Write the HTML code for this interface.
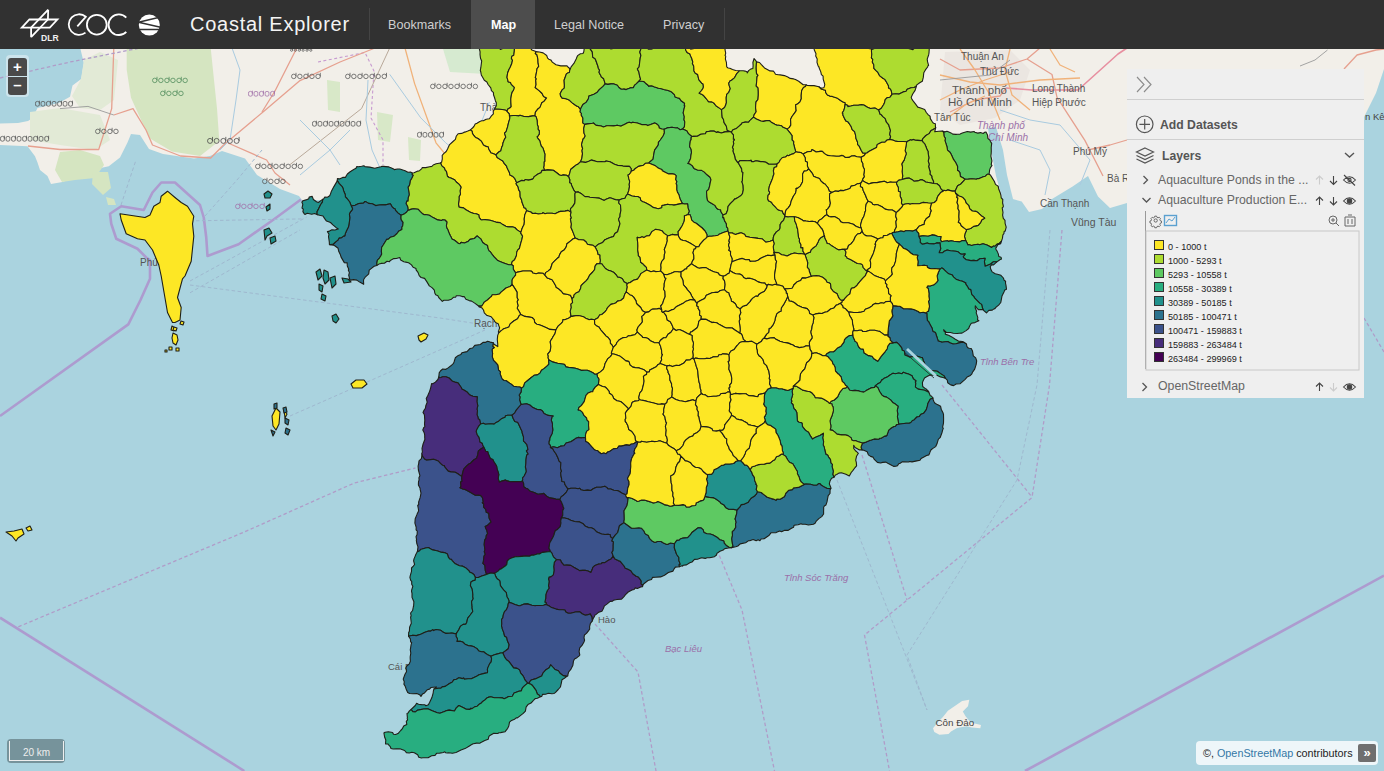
<!DOCTYPE html>
<html><head><meta charset="utf-8">
<style>
*{box-sizing:border-box}
html,body{margin:0;padding:0;width:1384px;height:771px;overflow:hidden;font-family:"Liberation Sans",sans-serif;background:#aad3df}
#hdr{position:absolute;left:0;top:0;width:1384px;height:48.6px;background:#313131;color:#fff}
.nav{position:absolute;top:0;height:48px;line-height:50px;font-size:12.6px;color:#cfcfcf;white-space:nowrap}
.sep{position:absolute;top:8px;width:1px;height:32px;background:#444}
#panel{position:absolute;left:1127px;top:69px;width:237px;height:329px;background:#efefef}
.pt{position:absolute;white-space:nowrap;color:#555}
.hl{position:absolute;left:0;width:237px;height:1px;background:#cfcfcf}
.sw{position:absolute;left:27px;width:10px;height:10px;border:1px solid #333}
.lt{position:absolute;left:41px;font-size:9.1px;color:#222;white-space:nowrap;line-height:10px}
</style></head><body>
<svg width="1384" height="771" viewBox="0 0 1384 771" style="position:absolute;left:0;top:0">
<rect width="1384" height="771" fill="#aad3df"/>
<path fill="#f2efe9" d="M80,47 83.8,63 81.2,79 72.5,85.5 70,96.8 58.8,103 37.5,108 32.5,118 28,121 18,123 0,123.4 0,145 27.5,146.2 35,156.2 37.5,162.5 40,170 47.5,176 51,184 62.5,182 75,177 90,177.5 91.2,170 108.8,166.2 120,157.5 127.5,142.5 131,134 140,135 149,149 163,154 194,158.4 210,156 222,151 245,158.4 257,175 280,189 299,196 302,200 420,200 600,200 900,200 1004,196.5 1021.7,201.6 1029,212 1042,209 1052,199 1072.6,186.4 1088,176 1098,196.5 1110,208 1127,203 1364,117 1376,93 1384,69 1384,47Z"/>
<path fill="#d5e5c1" d="M126.7,48 210.7,48 214,80 217,108.6 219.3,140.9 200,156 172,151.6 150.4,138.7 141.8,121.5 131,97.8 126.7,69.8Z"/><path fill="#d5e5c1" d="M60,152 80,150 100,156 104,165 95,178 75,180 62,182 55,170Z"/><path fill="#d5e5c1" d="M93,172 108,172 111,188 103,195 92,184Z"/><path fill="#d5e5c1" d="M106,197 114,199 116,205 108,205Z"/><path fill="#e2ead6" d="M84,60 100,52 118,60 114,100 100,110 80,108 72,96 81,79Z"/><path fill="#e2ead6" d="M30,112 60,108 100,115 110,140 95,150 60,145 30,140Z"/>
<path fill="#f2efe9" d="M969.3,699.7 968,706.2 962.8,711.4 965.4,716 970.6,722.4 981,725 980.3,728.2 971.9,727.6 966.7,726.3 957,728 951,731.5 948.5,734 939.4,734.7 934.3,732 933,728.2 938,722 942.7,717.2 947.9,710.7 956.3,704.9 962.1,701Z"/>
<path fill="#d8e8c8" d="M327,80 L340,82 L340,112 L328,110 Z M377,112 L393,115 L390,142 L378,140 Z M408,137 L421,140 L420,161 L409,160 Z"/>
<path fill="#d6ead0" d="M443,49 L489,49 L486,74 L450,72 Z"/>
<path d="M318,62 L365,52.5 L374,71 L371,118 L383,140 L383,165" fill="none" stroke="#c79ad0" stroke-width="1.1" stroke-dasharray="3,2.5"/>
<path fill="#ebe6e1" d="M945,52 L1010,50 L1030,70 L1020,100 L995,118 L960,125 L940,110 Z"/>
<path fill="#aad3df" d="M988,128 L996,127 L1003,150 L1007,175 L1013,199 L1003,201 L996,176 L991,150 Z"/>
<g fill="none" stroke="#e6a08f" stroke-width="1.3" stroke-linejoin="round">
<path d="M113.8,48 L111.7,108.6 L98.7,149.5 L60,149.5 L28,146"/>
<path d="M113.8,115 L133,108.6 L146,130 L152.5,145 L180.5,156 L210.7,158 L223.6,145 L264.5,110.7 L300,80.6 L340,62 L375,48"/>
<path d="M228,143 L266.6,160 L275,173 L290,185"/>
<path d="M296.8,48 L275,91 L262,112"/>
<path d="M1006,88 L1032,90 L1078,90 L1118,54 L1127,48" stroke="#e78fa0" stroke-width="1.6"/>
<path d="M1027,59 L1052,74.5 L1057,97.4 L1085,140.6 L1103,176"/>
<path d="M940,59 L960,70 L1000,68 L1027,59 L1040,48"/>
<path d="M950,112 L975,100 L1000,96 L1006,88"/>
<path d="M1088,150 L1110,145 L1127,140"/>
<path d="M405,48 L414.6,83.6 L436,142.8 L450,160" stroke="#f0b27a"/>
<path d="M290,164.6 L361.6,108.5 L389.7,48" stroke="#b9a99a" stroke-width="1"/>
<path d="M940,100 L960,90 L985,80 L1010,72" stroke="#f0b27a"/>
<path d="M960,49 L975,70 L990,95 L1000,120" stroke="#f0b27a"/>
<path d="M1010,49 L1005,70 L1012,95 L1030,110" stroke="#f0b27a"/>
<path d="M940,75 L970,82 L1000,85 L1040,80 L1080,78" stroke="#f0b27a"/>
<path d="M945,120 L965,105 L985,96" stroke="#f0b27a"/>
<path d="M1050,49 L1060,65 L1075,72" stroke="#f0b27a"/>
<path d="M1344,69 L1357,55 L1376,50 L1384,49"/>
</g>
<g fill="none" stroke="#9a9a9a" stroke-width="0.9">
<path d="M60,108.6 L88,106.4 L113.8,115"/>
<path d="M940,80 L990,75 L1010,60"/>
<path d="M1300,66 L1315,60 L1327.5,50"/>
</g>
<g fill="none" stroke="#a9cbe0" stroke-width="1">
<path d="M232,48 L240,70 L236,100 L230,140 L220,150"/>
<path d="M300,120 L330,150 L340,165"/>
<path d="M1000,110 L1030,120 L1060,125 L1090,160 L1080,185"/>
<path d="M1010,140 L1040,150 L1050,170 L1045,195"/>
<path d="M389.7,74.3 L420.8,117.9 L445.7,142.8 L464.4,158.3 L476.9,133.4 L489.3,102.3"/>
<path d="M368,80 L366,120 L372,150 L380,168"/>
<path d="M300,175 L330,150 L350,130"/>
</g>
<g fill="none" stroke="#ad9bcf" stroke-width="2.6" stroke-linejoin="round">
<path d="M0,416 L128.3,324.4 L140.5,300 L150,278.75 L150,260 L146.25,257.5 L137.5,248.75 L116.25,238.75 L111.25,223.75 L110,213.75 L121.25,206.25 L143.75,210 L152.5,192.5 L161.25,182.5 L175,182.5 L200,205 L203.75,217.5 L206.25,237.5 L207.5,256 L238.6,244.2 L273,220 L300.9,199.5"/>
<path d="M0,617.6 L244.3,771"/>
<path d="M1384,575.6 L1025,771"/>
</g>
<g fill="none" stroke="#b09cc8" stroke-width="1.3" stroke-dasharray="3.5,2.5">
<path d="M18.3,626.8 L244.3,532 L354.3,483 L415.4,468"/>
<path d="M942,385 L1032,497"/>
<path d="M1062,230 L1049.5,385 L1032,497.5 L864.5,635 L889.5,771"/>
<path d="M862,455 L907,600"/>
<path d="M1364,318 L1384,352"/>
<path d="M717,550 L742,610 L774.5,771"/>
<path d="M595,624 L638,672 L656,771"/>
<path d="M0,78 L70,62 L140,48"/>
</g>
<g fill="none" stroke="#9fb8cf" stroke-width="1" stroke-dasharray="3.5,2.5">
<path d="M190,281 L306.7,217"/>
<path d="M190,292.8 L300,230"/>
<path d="M190,285 L440,318 L485,325"/>
<path d="M290,416 L485,330"/>
<path d="M190,220.9 L302.8,218.9"/>
<path d="M205,216 L237,180 L262,150"/>
<path d="M121,205 L136,160"/>
<path d="M1050,230 L1037,385 L1017,480 L907,655 L927,710"/>
<path d="M837,480 L927,710"/>
</g>
<path d="M35.5,103.8 a2.0,2.0 0 1,0 3.9,0 a2.0,2.0 0 1,0 -3.9,0M39.4,103.8 v-3.1M41.0,103.8 a2.0,2.0 0 1,0 3.9,0 a2.0,2.0 0 1,0 -3.9,0M46.5,103.8 a2.0,2.0 0 1,0 3.9,0 a2.0,2.0 0 1,0 -3.9,0M50.5,103.8 v-3.1M52.1,103.8 a2.0,2.0 0 1,0 3.9,0 a2.0,2.0 0 1,0 -3.9,0M57.6,103.8 a2.0,2.0 0 1,0 3.9,0 a2.0,2.0 0 1,0 -3.9,0M61.5,103.8 v-3.1M63.1,103.8 a2.0,2.0 0 1,0 3.9,0 a2.0,2.0 0 1,0 -3.9,0M68.6,103.8 a2.0,2.0 0 1,0 3.9,0 a2.0,2.0 0 1,0 -3.9,0M72.5,103.8 v-3.1" fill="none" stroke="#555" stroke-width="0.9" opacity="0.85"/><path d="M0.5,138.8 a2.0,2.0 0 1,0 3.9,0 a2.0,2.0 0 1,0 -3.9,0M4.4,138.8 v-3.1M6.0,138.8 a2.0,2.0 0 1,0 3.9,0 a2.0,2.0 0 1,0 -3.9,0M11.5,138.8 a2.0,2.0 0 1,0 3.9,0 a2.0,2.0 0 1,0 -3.9,0M15.5,138.8 v-3.1M17.1,138.8 a2.0,2.0 0 1,0 3.9,0 a2.0,2.0 0 1,0 -3.9,0M22.6,138.8 a2.0,2.0 0 1,0 3.9,0 a2.0,2.0 0 1,0 -3.9,0M26.5,138.8 v-3.1M28.1,138.8 a2.0,2.0 0 1,0 3.9,0 a2.0,2.0 0 1,0 -3.9,0M33.6,138.8 a2.0,2.0 0 1,0 3.9,0 a2.0,2.0 0 1,0 -3.9,0M37.5,138.8 v-3.1M39.1,138.8 a2.0,2.0 0 1,0 3.9,0 a2.0,2.0 0 1,0 -3.9,0M44.7,138.8 a2.0,2.0 0 1,0 3.9,0 a2.0,2.0 0 1,0 -3.9,0M48.6,138.8 v-3.1" fill="none" stroke="#555" stroke-width="0.9" opacity="0.85"/><path d="M95.5,131.4 a2.2,2.2 0 1,0 4.5,0 a2.2,2.2 0 1,0 -4.5,0M100.0,131.4 v-3.6M101.6,131.4 a2.2,2.2 0 1,0 4.5,0 a2.2,2.2 0 1,0 -4.5,0M107.7,131.4 a2.2,2.2 0 1,0 4.5,0 a2.2,2.2 0 1,0 -4.5,0M112.1,131.4 v-3.6M113.7,131.4 a2.2,2.2 0 1,0 4.5,0 a2.2,2.2 0 1,0 -4.5,0" fill="none" stroke="#555" stroke-width="0.9" opacity="0.85"/><path d="M207.5,140.9 a2.5,2.5 0 1,0 5.0,0 a2.5,2.5 0 1,0 -5.0,0M212.5,140.9 v-4.0M214.1,140.9 a2.5,2.5 0 1,0 5.0,0 a2.5,2.5 0 1,0 -5.0,0M220.8,140.9 a2.5,2.5 0 1,0 5.0,0 a2.5,2.5 0 1,0 -5.0,0M225.8,140.9 v-4.0M227.4,140.9 a2.5,2.5 0 1,0 5.0,0 a2.5,2.5 0 1,0 -5.0,0M234.1,140.9 a2.5,2.5 0 1,0 5.0,0 a2.5,2.5 0 1,0 -5.0,0M239.1,140.9 v-4.0" fill="none" stroke="#444" stroke-width="0.9" opacity="0.85"/><path d="M248.5,93.8 a2.0,2.0 0 1,0 3.9,0 a2.0,2.0 0 1,0 -3.9,0M252.4,93.8 v-3.1M254.0,93.8 a2.0,2.0 0 1,0 3.9,0 a2.0,2.0 0 1,0 -3.9,0M259.5,93.8 a2.0,2.0 0 1,0 3.9,0 a2.0,2.0 0 1,0 -3.9,0M263.5,93.8 v-3.1M265.1,93.8 a2.0,2.0 0 1,0 3.9,0 a2.0,2.0 0 1,0 -3.9,0M270.6,93.8 a2.0,2.0 0 1,0 3.9,0 a2.0,2.0 0 1,0 -3.9,0M274.5,93.8 v-3.1" fill="none" stroke="#a070a8" stroke-width="0.9" opacity="0.85"/><path d="M291.5,76.4 a2.2,2.2 0 1,0 4.5,0 a2.2,2.2 0 1,0 -4.5,0M296.0,76.4 v-3.6M297.6,76.4 a2.2,2.2 0 1,0 4.5,0 a2.2,2.2 0 1,0 -4.5,0M303.7,76.4 a2.2,2.2 0 1,0 4.5,0 a2.2,2.2 0 1,0 -4.5,0M308.1,76.4 v-3.6M309.7,76.4 a2.2,2.2 0 1,0 4.5,0 a2.2,2.2 0 1,0 -4.5,0M315.8,76.4 a2.2,2.2 0 1,0 4.5,0 a2.2,2.2 0 1,0 -4.5,0M320.3,76.4 v-3.6" fill="none" stroke="#555" stroke-width="0.9" opacity="0.85"/><path d="M345.5,76.4 a2.2,2.2 0 1,0 4.5,0 a2.2,2.2 0 1,0 -4.5,0M350.0,76.4 v-3.6M351.6,76.4 a2.2,2.2 0 1,0 4.5,0 a2.2,2.2 0 1,0 -4.5,0M357.7,76.4 a2.2,2.2 0 1,0 4.5,0 a2.2,2.2 0 1,0 -4.5,0M362.1,76.4 v-3.6M363.7,76.4 a2.2,2.2 0 1,0 4.5,0 a2.2,2.2 0 1,0 -4.5,0M369.8,76.4 a2.2,2.2 0 1,0 4.5,0 a2.2,2.2 0 1,0 -4.5,0M374.3,76.4 v-3.6M375.9,76.4 a2.2,2.2 0 1,0 4.5,0 a2.2,2.2 0 1,0 -4.5,0M382.0,76.4 a2.2,2.2 0 1,0 4.5,0 a2.2,2.2 0 1,0 -4.5,0M386.5,76.4 v-3.6" fill="none" stroke="#555" stroke-width="0.9" opacity="0.85"/><path d="M430.5,86.4 a2.2,2.2 0 1,0 4.5,0 a2.2,2.2 0 1,0 -4.5,0M435.0,86.4 v-3.6M436.6,86.4 a2.2,2.2 0 1,0 4.5,0 a2.2,2.2 0 1,0 -4.5,0M442.7,86.4 a2.2,2.2 0 1,0 4.5,0 a2.2,2.2 0 1,0 -4.5,0M447.1,86.4 v-3.6M448.7,86.4 a2.2,2.2 0 1,0 4.5,0 a2.2,2.2 0 1,0 -4.5,0M454.8,86.4 a2.2,2.2 0 1,0 4.5,0 a2.2,2.2 0 1,0 -4.5,0M459.3,86.4 v-3.6M460.9,86.4 a2.2,2.2 0 1,0 4.5,0 a2.2,2.2 0 1,0 -4.5,0M467.0,86.4 a2.2,2.2 0 1,0 4.5,0 a2.2,2.2 0 1,0 -4.5,0M471.5,86.4 v-3.6M473.1,86.4 a2.2,2.2 0 1,0 4.5,0 a2.2,2.2 0 1,0 -4.5,0" fill="none" stroke="#555" stroke-width="0.9" opacity="0.85"/><path d="M312.5,123.8 a2.0,2.0 0 1,0 3.9,0 a2.0,2.0 0 1,0 -3.9,0M316.4,123.8 v-3.1M318.0,123.8 a2.0,2.0 0 1,0 3.9,0 a2.0,2.0 0 1,0 -3.9,0M323.5,123.8 a2.0,2.0 0 1,0 3.9,0 a2.0,2.0 0 1,0 -3.9,0M327.5,123.8 v-3.1M329.1,123.8 a2.0,2.0 0 1,0 3.9,0 a2.0,2.0 0 1,0 -3.9,0M334.6,123.8 a2.0,2.0 0 1,0 3.9,0 a2.0,2.0 0 1,0 -3.9,0M338.5,123.8 v-3.1M340.1,123.8 a2.0,2.0 0 1,0 3.9,0 a2.0,2.0 0 1,0 -3.9,0M345.6,123.8 a2.0,2.0 0 1,0 3.9,0 a2.0,2.0 0 1,0 -3.9,0M349.5,123.8 v-3.1M351.1,123.8 a2.0,2.0 0 1,0 3.9,0 a2.0,2.0 0 1,0 -3.9,0M356.7,123.8 a2.0,2.0 0 1,0 3.9,0 a2.0,2.0 0 1,0 -3.9,0M360.6,123.8 v-3.1" fill="none" stroke="#555" stroke-width="0.9" opacity="0.85"/><path d="M417.5,134.8 a2.0,2.0 0 1,0 3.9,0 a2.0,2.0 0 1,0 -3.9,0M421.4,134.8 v-3.1M423.0,134.8 a2.0,2.0 0 1,0 3.9,0 a2.0,2.0 0 1,0 -3.9,0M428.5,134.8 a2.0,2.0 0 1,0 3.9,0 a2.0,2.0 0 1,0 -3.9,0M432.5,134.8 v-3.1M434.1,134.8 a2.0,2.0 0 1,0 3.9,0 a2.0,2.0 0 1,0 -3.9,0M439.6,134.8 a2.0,2.0 0 1,0 3.9,0 a2.0,2.0 0 1,0 -3.9,0M443.5,134.8 v-3.1" fill="none" stroke="#555" stroke-width="0.9" opacity="0.85"/><path d="M255.5,166.4 a2.2,2.2 0 1,0 4.5,0 a2.2,2.2 0 1,0 -4.5,0M260.0,166.4 v-3.6M261.6,166.4 a2.2,2.2 0 1,0 4.5,0 a2.2,2.2 0 1,0 -4.5,0M267.7,166.4 a2.2,2.2 0 1,0 4.5,0 a2.2,2.2 0 1,0 -4.5,0M272.1,166.4 v-3.6M273.7,166.4 a2.2,2.2 0 1,0 4.5,0 a2.2,2.2 0 1,0 -4.5,0M279.8,166.4 a2.2,2.2 0 1,0 4.5,0 a2.2,2.2 0 1,0 -4.5,0M284.3,166.4 v-3.6M285.9,166.4 a2.2,2.2 0 1,0 4.5,0 a2.2,2.2 0 1,0 -4.5,0M292.0,166.4 a2.2,2.2 0 1,0 4.5,0 a2.2,2.2 0 1,0 -4.5,0M296.5,166.4 v-3.6M298.1,166.4 a2.2,2.2 0 1,0 4.5,0 a2.2,2.2 0 1,0 -4.5,0" fill="none" stroke="#555" stroke-width="0.9" opacity="0.85"/><path d="M262.5,181.4 a2.2,2.2 0 1,0 4.5,0 a2.2,2.2 0 1,0 -4.5,0M267.0,181.4 v-3.6M268.6,181.4 a2.2,2.2 0 1,0 4.5,0 a2.2,2.2 0 1,0 -4.5,0M274.7,181.4 a2.2,2.2 0 1,0 4.5,0 a2.2,2.2 0 1,0 -4.5,0M279.1,181.4 v-3.6M280.7,181.4 a2.2,2.2 0 1,0 4.5,0 a2.2,2.2 0 1,0 -4.5,0" fill="none" stroke="#555" stroke-width="0.9" opacity="0.85"/><path d="M235.5,206.4 a2.2,2.2 0 1,0 4.5,0 a2.2,2.2 0 1,0 -4.5,0M240.0,206.4 v-3.6M241.6,206.4 a2.2,2.2 0 1,0 4.5,0 a2.2,2.2 0 1,0 -4.5,0M247.7,206.4 a2.2,2.2 0 1,0 4.5,0 a2.2,2.2 0 1,0 -4.5,0M252.1,206.4 v-3.6M253.7,206.4 a2.2,2.2 0 1,0 4.5,0 a2.2,2.2 0 1,0 -4.5,0M259.8,206.4 a2.2,2.2 0 1,0 4.5,0 a2.2,2.2 0 1,0 -4.5,0M264.3,206.4 v-3.6" fill="none" stroke="#a070a8" stroke-width="0.9" opacity="0.85"/><path d="M152.5,80.4 a2.2,2.2 0 1,0 4.5,0 a2.2,2.2 0 1,0 -4.5,0M157.0,80.4 v-3.6M158.6,80.4 a2.2,2.2 0 1,0 4.5,0 a2.2,2.2 0 1,0 -4.5,0M164.7,80.4 a2.2,2.2 0 1,0 4.5,0 a2.2,2.2 0 1,0 -4.5,0M169.1,80.4 v-3.6M170.7,80.4 a2.2,2.2 0 1,0 4.5,0 a2.2,2.2 0 1,0 -4.5,0M176.8,80.4 a2.2,2.2 0 1,0 4.5,0 a2.2,2.2 0 1,0 -4.5,0M181.3,80.4 v-3.6M182.9,80.4 a2.2,2.2 0 1,0 4.5,0 a2.2,2.2 0 1,0 -4.5,0" fill="none" stroke="#4e8a5a" stroke-width="0.9" opacity="0.85"/><path d="M160.5,93.4 a2.2,2.2 0 1,0 4.5,0 a2.2,2.2 0 1,0 -4.5,0M165.0,93.4 v-3.6M166.6,93.4 a2.2,2.2 0 1,0 4.5,0 a2.2,2.2 0 1,0 -4.5,0M172.7,93.4 a2.2,2.2 0 1,0 4.5,0 a2.2,2.2 0 1,0 -4.5,0M177.1,93.4 v-3.6M178.7,93.4 a2.2,2.2 0 1,0 4.5,0 a2.2,2.2 0 1,0 -4.5,0" fill="none" stroke="#4e8a5a" stroke-width="0.9" opacity="0.85"/><path d="M290.5,50.2 a1.1,1.1 0 1,0 2.2,0 a1.1,1.1 0 1,0 -2.2,0M292.7,50.2 v-1.8M294.3,50.2 a1.1,1.1 0 1,0 2.2,0 a1.1,1.1 0 1,0 -2.2,0M298.2,50.2 a1.1,1.1 0 1,0 2.2,0 a1.1,1.1 0 1,0 -2.2,0M300.4,50.2 v-1.8M302.0,50.2 a1.1,1.1 0 1,0 2.2,0 a1.1,1.1 0 1,0 -2.2,0M305.9,50.2 a1.1,1.1 0 1,0 2.2,0 a1.1,1.1 0 1,0 -2.2,0M308.1,50.2 v-1.8M309.7,50.2 a1.1,1.1 0 1,0 2.2,0 a1.1,1.1 0 1,0 -2.2,0" fill="none" stroke="#555" stroke-width="0.9" opacity="0.85"/>
<g font-family="Liberation Sans" fill="#555" font-size="11">
<text x="952" y="93.5" font-size="11.5">Thành phố</text>
<text x="948" y="106" font-size="11.5">Hồ Chí Minh</text>
<text x="934" y="121" font-size="10">Tân Túc</text>
<text x="961" y="60" font-size="10">Thuận An</text>
<text x="980" y="75" font-size="10">Thủ Đức</text>
<text x="1032" y="92" font-size="10">Long Thành</text>
<text x="1032" y="106" font-size="10">Hiệp Phước</text>
<text x="1073" y="155" font-size="10">Phú Mỹ</text>
<text x="1107" y="182" font-size="10">Bà R</text>
<text x="1040" y="207" font-size="10">Cần Thạnh</text>
<text x="1071" y="226" font-size="10.5">Vũng Tàu</text>
<text x="935.5" y="725.5" font-size="9.8" fill="#444">Côn Đảo</text>
<text x="140" y="266" font-size="10">Phú</text>
<text x="474" y="327" font-size="10">Rạch</text>
<text x="480" y="111" font-size="10">Thà</text>
<text x="1365" y="119.5" font-size="9.5" fill="#444">n Kê</text>
<text x="388" y="670" font-size="9.5">Cái B</text>
<text x="598" y="623" font-size="9.5">Hào</text>
</g>
<g font-family="Liberation Sans" font-style="italic" fill="#9b6fa8" font-size="9.5">
<text x="784" y="581">Tỉnh Sóc Trăng</text>
<text x="665" y="652">Bạc Liêu</text>
<text x="980" y="365">Tỉnh Bến Tre</text>
<text x="977" y="129" font-size="10">Thành phố</text>
<text x="988" y="141" font-size="10">Chí Minh</text>
</g>
<g stroke="#1f1f18" stroke-width="1.1" stroke-linejoin="round">
<path fill="#addc30" d="M514.6,46 511.7,47.2 506.5,47.2 503.3,48.2 500.4,49.4 499.5,48.4 496.1,47.9 493.9,47 490.6,45 490.2,45.1 487.2,45.5 484.4,45.6 478.9,47.4 479.4,49 480.1,51.9 480,54.4 480.5,58.3 481.7,61 481.5,62.3 481.3,64 480.8,67.7 480.3,70.5 480.8,72 481.3,75 483.2,78.2 484.3,80.3 486.9,82 488.1,84.5 490.8,87.9 491.4,90.6 493.5,92.6 493.5,94.8 494.5,97.5 495.4,100.7 496,102.2 496.3,102.6 496.3,105.7 494.5,109.1 499.1,109.3 502.2,109.5 505.8,110.2 506.9,111.3 507.9,109 510.1,107.8 511.2,106.7 510.9,102.5 510.8,99 511.5,94.3 512.4,91.7 513.2,90.9 514.1,88.7 514.4,87.4 511.3,84.4 510.5,82.5 508.1,81.7 507.9,80.4 507,77.4 507.6,73 509.1,69.2 510.1,67.5 511.8,63.5 512.5,60.2 511.4,58.2 511.9,56.2 513.8,55.3 514.3,51.2Z"/><path fill="#fde725" d="M535.9,51.6 531.9,50.1 530.4,48 528,46.5 527.4,46.2 525.2,46.5 522.6,46.1 519,47 517.3,46.4 514.6,46 514.3,51.2 513.8,55.3 511.9,56.2 511.4,58.2 512.5,60.2 511.8,63.5 510.1,67.5 509.1,69.2 507.6,73 507,77.4 507.9,80.4 508.1,81.7 510.5,82.5 511.3,84.4 514.4,87.4 514.1,88.7 513.2,90.9 512.4,91.7 511.5,94.3 510.8,99 510.9,102.5 511.2,106.7 510.1,107.8 507.9,109 506.9,111.3 509.2,113.9 509.4,116 513.2,115.5 515.7,115.5 518.6,115.9 520,115.2 524,116.5 528.5,116.6 532.9,115.9 535,116 535.4,112.1 537.6,109.3 540,107.4 541.1,104.6 541.8,102.8 544,101.4 546.6,97.9 543.6,96.5 542.1,93.5 539.1,90.7 537.2,89.1 535.2,87.5 536.1,84.6 535.7,79.9 536.4,79 535.3,77.4 535.8,75.9 536.6,71.7 537,68.8 538.7,66.4 538.1,63.2 537.9,59.1 536.9,54.7 535.3,53.5Z"/><path fill="#fde725" d="M546.6,97.9 544,101.4 541.8,102.8 541.1,104.6 540,107.4 537.6,109.3 535.4,112.1 535,116 536.2,116.9 537.1,120.4 537.4,124.8 538.2,126.9 538,129.1 539.3,130.9 539.3,133.9 537.8,136.3 537,136.8 538,138.7 539.7,140.6 541.1,145.9 543,148.1 543.9,151 544.9,154.2 544.7,158.7 544.8,161.3 544,162 544,165.3 543.6,167.6 544.6,170.4 547.7,169.9 553.3,170.2 556.4,172.5 559.5,175 561.3,175.5 562.9,174.9 566.6,175.2 568.6,176.7 569.9,172.6 570.6,169.5 573,167.5 576,165.1 577.3,164.4 578,164.2 580.6,161.7 581.9,158.1 582.5,153.6 582,150.7 582.6,148.5 581.5,144.6 582.4,141.5 583.2,138.7 583.7,138.8 585.2,135.9 584,133.1 583.7,128.5 584,127.3 584.7,124.4 582.8,122.8 582.9,118.1 581.2,115 581.5,113.5 580.1,111.9 580.5,109.3 578.5,106.8 576.7,106 575.5,105.2 571.9,102.6 569,99.9 566.1,98.8 562.2,98.1 560.5,95.8 560.2,93.6 562.1,89.9 564.3,88.1 564.4,85.1 564.1,80.3 565.2,77.2 566.4,73.9 567.6,73.1 569.4,72.5 570,68.7 567.9,67 567,65.9 563.2,65.8 560.8,65.9 556,64.8 552.3,62.1 550.8,59.9 548.7,59.2 547.6,58.2 546.7,55.5 543.1,52.9 539.3,52 535.9,51.6 535.3,53.5 536.9,54.7 537.9,59.1 538.1,63.2 538.7,66.4 537,68.8 536.6,71.7 535.8,75.9 535.3,77.4 536.4,79 535.7,79.9 536.1,84.6 535.2,87.5 537.2,89.1 539.1,90.7 542.1,93.5 543.6,96.5Z"/><path fill="#addc30" d="M590.1,46.9 586,48.1 584.3,47.8 583.8,51.7 583,53.5 580.4,53.8 577.9,55.4 577.1,56.6 576.3,58.8 573.9,63.4 571.1,66.9 570,69.7 570,68.7 569.4,72.5 567.6,73.1 566.4,73.9 565.2,77.2 564.1,80.3 564.4,85.1 564.3,88.1 562.1,89.9 560.2,93.6 560.5,95.8 562.2,98.1 566.1,98.8 569,99.9 571.9,102.6 575.5,105.2 576.7,106 578.5,106.8 580.5,109.3 581.3,107.4 582.9,104.5 586.1,102.4 588.3,99 588.9,96.1 590.6,95.4 593.9,94.2 596,93.1 596.9,92.6 599.3,89.7 603,86.3 605.2,83.9 603.7,78.8 601.3,76.9 601,75.9 599.1,72.4 599.5,70 598.3,68.2 598.1,66.8 597.3,64.5 595.8,60.2 595.1,58.8 592.7,57.1 592.3,51.9 590.2,48.9Z"/><path fill="#addc30" d="M641.6,45.6 638.7,45.3 636.6,46.2 634.2,45.9 629.3,47.2 625.1,47.1 621.3,46.5 620.2,47.5 616.8,47.1 614.3,48.1 610.8,48.9 610.3,48 607.1,47.9 603.8,46.1 598.2,44.8 595.8,45.3 592.6,45.1 590.1,46.9 590.2,48.9 592.3,51.9 592.7,57.1 595.1,58.8 595.8,60.2 597.3,64.5 598.1,66.8 598.3,68.2 599.5,70 599.1,72.4 601,75.9 601.3,76.9 603.7,78.8 605.2,83.9 607.9,84.4 611,83.9 613.3,83.8 617.3,85.2 618.9,87.5 621.2,89.2 622.4,89.3 624,89.1 626.2,89.6 630.1,87.9 633.3,87.7 634.7,85.1 636.2,83.8 639.2,81 640.6,79.1 639.6,76 638.9,72 638.4,70.9 637.4,68.9 639.1,67 639.7,62.2 640.3,57.6 640.9,55.5 639.8,52 640.8,49.4Z"/><path fill="#5ec962" d="M624,89.1 622.4,89.3 621.2,89.2 618.9,87.5 617.3,85.2 613.3,83.8 611,83.9 607.9,84.4 605.2,83.9 603,86.3 599.3,89.7 596.9,92.6 596,93.1 593.9,94.2 590.6,95.4 588.9,96.1 588.3,99 586.1,102.4 582.9,104.5 581.3,107.4 580.5,109.3 580.1,111.9 581.5,113.5 581.2,115 582.9,118.1 582.8,122.8 584.7,124.4 587.9,123.9 592.6,123.3 593.4,123 595.5,124.9 596.7,125.4 601.2,126 603.4,126.9 606.8,125.7 608.6,125.7 613.8,125.9 617.3,125.2 621.1,126.2 621.6,125.7 624.4,124.5 627.1,123 629.1,122.2 631.6,122.9 632.7,122.2 637.3,123 641.6,124.6 645.7,124.6 647.8,125.6 650.7,124.5 654.5,122.9 656.1,123.5 658.6,125.6 659.3,128 661.7,129 664.2,129.3 667.1,127.9 672,127.2 676,128 677.5,127.9 680.1,129.7 682.5,129.1 684.4,126.9 684.8,122 684,119.6 684.3,116.7 683.2,112.9 684,109.2 684.9,105.7 684.3,105.7 684.6,103.3 681.1,100.7 679.5,98.4 677.3,97.8 675.2,97.1 674.4,94.7 671.7,92.1 669.6,91.1 667.3,90.3 663.6,89.5 661.6,88.7 658.5,88.3 654,86.8 651.7,85.7 649.9,85.9 648.5,86.1 648.1,85.2 645.6,83.2 643.8,81.5 639.2,81 636.2,83.8 634.7,85.1 633.3,87.7 630.1,87.9 626.2,89.6Z"/><path fill="#addc30" d="M641.6,45.6 640.8,49.4 639.8,52 640.9,55.5 640.3,57.6 639.7,62.2 639.1,67 637.4,68.9 638.4,70.9 638.9,72 639.6,76 640.6,79.1 639.2,81 643.8,81.5 645.6,83.2 648.1,85.2 648.5,86.1 649.9,85.9 651.7,85.7 654,86.8 658.5,88.3 661.6,88.7 663.6,89.5 667.3,90.3 669.6,91.1 671.7,92.1 674.4,94.7 675.2,97.1 677.3,97.8 679.5,98.4 681.1,100.7 684.6,103.3 684.3,105.7 684.9,105.7 684,109.2 683.2,112.9 684.3,116.7 684,119.6 684.8,122 684.4,126.9 682.5,129.1 684.9,130.1 686.9,131 688.4,133.7 691.8,136.5 693.5,136.4 697.4,136.2 700.7,134.2 705.4,133.7 706.5,131.6 708.4,131.5 710.7,131.1 713.9,131.1 716.6,132.4 717.5,131.9 721.3,133 724.9,131.9 729.8,131.6 727.2,130.2 726.3,126 724.1,122.6 723.4,119.2 722.2,117.4 721.9,114.3 721.6,109.6 719.8,108.4 719.1,107.9 716.2,106 714.1,103.3 711.8,101.9 708.5,101.6 707.3,100 704.9,97.1 703.2,95.2 702.2,94.6 699.2,93.2 701.6,90.5 703.2,88 703.4,86.7 703.1,84 701.7,83.2 698.8,79.6 697.7,74.6 695.3,73.2 694,70.9 693.7,65.9 692.4,63.4 692.8,62 691.9,58.8 690.6,55.9 689.9,54 687.1,52.4 685.8,50.2 685,47.1 681.8,47.2 677,46.2 676.1,47 674.1,46.9 672.7,45.9 668.2,46.3 665.6,45.4 662.5,45.8 660.1,47.4 655.1,47.8 651.2,49.3 648.3,49.2 647.2,47.7 644.8,47.3Z"/><path fill="#fde725" d="M491,153 492.2,153.2 495.9,154.8 498.8,152 500.9,150.7 501.6,147.5 502.7,145.2 502.9,143.3 504.4,139.4 505.8,137.3 505,134.6 504.5,133.2 506.1,131.7 507.6,126.8 508.5,122.9 509.7,118.9 509.9,116.7 509.4,116 509.2,113.9 506.9,111.3 505.8,110.2 502.2,109.5 499.1,109.3 494.5,109.1 493.2,111.6 493.4,113.8 491.4,115.9 489.4,118.7 486.2,119.2 483.3,120.8 481.7,120.8 479.8,121.5 477,123.3 475.2,124.1 473.9,126.5 472.5,128 470.4,129.9 472.1,131.2 472.5,133.7 474.7,136.6 476.1,137.7 478,138.5 481.5,141.4 483.4,145 486.1,146.4 488.3,147 488.7,149.2 490.4,151.9Z"/><path fill="#fde725" d="M458.9,184.2 459.5,184.8 461,187.1 460,191 460.5,194 459,196.7 459.1,199 458.5,204.1 458.9,206.9 460.3,207.4 463.5,207.9 465.9,209.7 470.4,212.2 473.7,213.5 476.1,213.8 478.8,214.8 479.1,217.3 480.6,219.4 481.9,220 482.8,219.8 485.1,219.6 490.1,220.2 494.2,221.5 497,222.4 500,222.6 500.7,223.1 502.8,224.6 505.8,226.3 508.1,226.9 512.1,226.7 514.7,227.5 517.1,229.9 520.9,232.4 521.9,229 523,226.6 524.1,224.5 524.4,221.3 524.2,219.1 524.8,214.9 526.6,210.7 525.8,208.3 524.1,207.7 523.2,205.2 522.2,202.8 521.5,199.7 521.1,198.7 520.2,196.9 520,191.9 518.5,189.4 518.2,187.1 516,183.8 516.7,182.7 514.9,178.7 512.5,176.2 509.9,175 509.4,172.4 507.8,169.2 507,167.5 506.6,166.1 504.2,163.4 502.8,161 500.5,159.6 497.2,157.5 495.9,154.8 492.2,153.2 491,153 490.4,151.9 488.7,149.2 488.3,147 486.1,146.4 483.4,145 481.5,141.4 478,138.5 476.1,137.7 474.7,136.6 472.5,133.7 472.1,131.2 470.4,129.9 467.8,131.1 465.5,131.9 463.8,132.4 461.6,133.4 458.1,133.7 456.2,136.3 455.4,139.4 453,141.5 449.6,144.6 448.2,147.4 447.7,148.8 446.2,151.5 443.7,153.7 442.2,155.3 442.3,158.9 441.7,162 440.5,163 441.8,165.8 444.5,168.2 444.9,169.8 446.5,171.6 446.9,174.1 447.4,176.2 449,177.5 450.8,178 454.5,179.7 456.3,182Z"/><path fill="#addc30" d="M539.3,133.9 539.3,130.9 538,129.1 538.2,126.9 537.4,124.8 537.1,120.4 536.2,116.9 535,116 532.9,115.9 528.5,116.6 524,116.5 520,115.2 518.6,115.9 515.7,115.5 513.2,115.5 509.4,116 509.9,116.7 509.7,118.9 508.5,122.9 507.6,126.8 506.1,131.7 504.5,133.2 505,134.6 505.8,137.3 504.4,139.4 502.9,143.3 502.7,145.2 501.6,147.5 500.9,150.7 498.8,152 495.9,154.8 497.2,157.5 500.5,159.6 502.8,161 504.2,163.4 506.6,166.1 507,167.5 507.8,169.2 509.4,172.4 509.9,175 512.5,176.2 514.9,178.7 516.7,182.7 521.6,180.4 524.4,180.7 525.2,179.5 528.4,180.1 532.6,179.1 533.5,178.1 534.3,176.6 538,174 541,172.8 542.1,170.3 544.6,170.4 543.6,167.6 544,165.3 544,162 544.8,161.3 544.7,158.7 544.9,154.2 543.9,151 543,148.1 541.1,145.9 539.7,140.6 538,138.7 537,136.8 537.8,136.3Z"/><path fill="#addc30" d="M584.7,124.4 584,127.3 583.7,128.5 584,133.1 585.2,135.9 583.7,138.8 583.2,138.7 582.4,141.5 581.5,144.6 582.6,148.5 582,150.7 582.5,153.6 581.9,158.1 580.6,161.7 585.5,162.4 588.8,161.2 591.4,160.1 594.7,160.9 597.5,161.8 601.8,161.6 603,161.8 605,161.8 606.1,161 610,161.7 614.5,164.2 618,165.5 621.4,165.6 622.9,166.1 627.1,166.4 629.4,166.2 631.2,168.8 631.2,171.2 634.1,169.9 635,168.8 638.5,166.4 643.5,165.2 645.7,163.2 648.8,163.1 649.7,162 651.7,160.4 653.1,159.1 653.6,155.3 654.6,150.2 656.8,147.2 658.4,144.6 658.4,142.7 658.4,142.3 660.3,140 663.1,136 664.4,133 664.2,129.3 661.7,129 659.3,128 658.6,125.6 656.1,123.5 654.5,122.9 650.7,124.5 647.8,125.6 645.7,124.6 641.6,124.6 637.3,123 632.7,122.2 631.6,122.9 629.1,122.2 627.1,123 624.4,124.5 621.6,125.7 621.1,126.2 617.3,125.2 613.8,125.9 608.6,125.7 606.8,125.7 603.4,126.9 601.2,126 596.7,125.4 595.5,124.9 593.4,123 592.6,123.3 587.9,123.9Z"/><path fill="#5ec962" d="M668.7,173.9 672.3,173.9 674.4,174.2 676.1,175.6 675.6,179.4 676.8,181.7 676,183.6 676.7,184.7 676.7,189.8 677.5,192.3 679,195.1 679.9,198.4 682.3,203.4 684.5,204 687.6,203.8 688,207.9 689.2,211.3 687.9,214.5 690.1,214.8 690.7,216.4 691.7,220.2 694.4,222.6 696.2,223.2 698.7,225.2 702.2,228 703.6,229.5 705.1,231.1 706.9,234.5 707,237.1 709.1,236.3 711.5,236.2 715.2,235.8 718.1,235.2 719.2,234.2 723.3,232.6 728,231.1 727.8,228.4 726.5,226.6 726.4,223.7 724.5,220.6 723.7,217.5 722.8,217.7 723,215 721,211.8 720.6,209.8 718.4,209.5 716.6,208.3 714.9,205.4 711.4,203.2 709.6,202.3 707.5,200.4 706.9,196.6 706.5,191.4 708.7,189.4 709.6,186.1 710.3,182.4 711,179.7 710,177.1 709.5,176.7 707.1,174.8 704.1,171.9 701.6,170.4 697.5,170 694,168.4 692.2,165.6 689.6,163.8 687.9,163.4 688.7,162.6 690.6,158.4 690.9,155.6 691.5,152.5 691.2,149.6 689.6,146.4 690.3,141.1 691.2,139.4 691.1,137.8 691.8,136.5 688.4,133.7 686.9,131 684.9,130.1 682.5,129.1 680.1,129.7 677.5,127.9 676,128 672,127.2 667.1,127.9 664.2,129.3 664.4,133 663.1,136 660.3,140 658.4,142.3 658.4,142.7 658.4,144.6 656.8,147.2 654.6,150.2 653.6,155.3 653.1,159.1 651.7,160.4 649.7,162 648.8,163.1 651.1,163.9 655.4,165.8 657.7,167.7 659.8,168.7 661.8,169.4 662.3,170.7 665.6,172.6Z"/><path fill="#addc30" d="M631.2,171.2 631.2,168.8 629.4,166.2 627.1,166.4 622.9,166.1 621.4,165.6 618,165.5 614.5,164.2 610,161.7 606.1,161 605,161.8 603,161.8 601.8,161.6 597.5,161.8 594.7,160.9 591.4,160.1 588.8,161.2 585.5,162.4 580.6,161.7 578,164.2 577.3,164.4 576,165.1 573,167.5 570.6,169.5 569.9,172.6 568.6,176.7 569.8,179.7 569.6,182.8 571.2,183.4 571.5,185.2 573.4,189.3 573.9,190.4 575.5,192.2 578.2,191.9 581.5,193.8 584.3,196.1 585,196.6 587.6,196.5 589.8,197.2 595.2,197.7 598.9,198.1 602.1,199.5 604.2,200.4 606.1,199.2 609.8,197.8 611.7,198.3 614.7,199.4 615.6,199.6 619.2,200.1 622.3,198.8 625,198.3 626,196 627.5,194.1 628.9,190.2 629.5,186.4 629.2,184.7 629.7,181.3 628.9,178.9 628,174.9 629.4,174.2 630.8,172.5Z"/><path fill="#fde725" d="M648.8,163.1 645.7,163.2 643.5,165.2 638.5,166.4 635,168.8 634.1,169.9 631.2,171.2 630.8,172.5 629.4,174.2 628,174.9 628.9,178.9 629.7,181.3 629.2,184.7 629.5,186.4 628.9,190.2 627.5,194.1 632.1,196 634.8,196.4 637.8,196.5 640.3,198 640.7,200.4 642.7,201.8 643.8,202 646,202.9 650.1,205.2 653,207.4 656.4,208.3 658.3,208.8 661.8,207.7 662,205.5 664.2,205.1 667.7,204.2 669.7,204.8 672,204.7 673.9,205.1 677.5,204.4 682.3,203.4 679.9,198.4 679,195.1 677.5,192.3 676.7,189.8 676.7,184.7 676,183.6 676.8,181.7 675.6,179.4 676.1,175.6 674.4,174.2 672.3,173.9 668.7,173.9 665.6,172.6 662.3,170.7 661.8,169.4 659.8,168.7 657.7,167.7 655.4,165.8 651.1,163.9Z"/><path fill="#addc30" d="M568.6,176.7 566.6,175.2 562.9,174.9 561.3,175.5 559.5,175 556.4,172.5 553.3,170.2 547.7,169.9 544.6,170.4 542.1,170.3 541,172.8 538,174 534.3,176.6 533.5,178.1 532.6,179.1 528.4,180.1 525.2,179.5 524.4,180.7 521.6,180.4 516.7,182.7 516,183.8 518.2,187.1 518.5,189.4 520,191.9 520.2,196.9 521.1,198.7 521.5,199.7 522.2,202.8 523.2,205.2 524.1,207.7 525.8,208.3 526.6,210.7 530.8,212 532.5,213.5 535.6,213.2 538.3,214 542.1,213.5 543,212.7 545,213.7 546.9,213.2 552,213.3 555.1,213.7 558.7,211.9 560.5,211.4 565.1,211.1 568,210.4 571.1,212.3 570.4,209.2 570.6,208.7 572.8,206.4 574.8,203.1 575.1,199.4 574.9,194.2 575.5,192.2 573.9,190.4 573.4,189.3 571.5,185.2 571.2,183.4 569.6,182.8 569.8,179.7Z"/><path fill="#addc30" d="M429.6,166.8 425.7,167.6 422.3,167.6 421.8,168.6 419.5,170.7 417.8,171.1 414.1,172.8 412.1,173 412.1,174.8 413.1,175.3 411.7,178.2 410.2,180.8 409.5,185.1 408,187.1 408.6,190.2 409.2,194.7 408.1,198 407.9,201 406.8,200.9 406,203.5 407.7,206.7 408.1,210.2 408.9,210.3 410.5,209.4 413.7,208.7 418,209.2 420.3,211.6 422.9,214.1 424.2,214.8 425.3,214.5 429.3,215.2 433.1,217.6 437.7,219.9 441.6,220.5 442.7,219.8 444.9,220 446.9,222 446.4,225.8 446.8,228.2 447.6,229.1 448.9,232.5 450.1,235.3 451.2,237.3 451.9,238.9 454.6,240.3 457,242.2 458.4,243.5 460,243.7 461.1,242.4 464.6,243 467.7,241.6 467.9,241.7 470,239.4 474.4,238.5 477.1,235.8 480.7,238.8 482.7,242.5 485.1,244.3 487.5,245.4 487.8,248.1 489,250.9 490.5,251.9 491.3,253.3 494.1,256.9 497.3,260.2 499.4,261.3 503,262.7 506.6,264.1 508.8,264.8 511.2,264.7 511.4,264.5 512.2,261.6 514.6,259.7 516.4,255.8 516.6,253.6 516.8,251.9 517.9,249.8 519.4,248.5 520.6,243.9 521.9,239.4 522.6,236.2 521.6,234.3 520.7,233.1 520.9,232.4 517.1,229.9 514.7,227.5 512.1,226.7 508.1,226.9 505.8,226.3 502.8,224.6 500.7,223.1 500,222.6 497,222.4 494.2,221.5 490.1,220.2 485.1,219.6 482.8,219.8 481.9,220 480.6,219.4 479.1,217.3 478.8,214.8 476.1,213.8 473.7,213.5 470.4,212.2 465.9,209.7 463.5,207.9 460.3,207.4 458.9,206.9 458.5,204.1 459.1,199 459,196.7 460.5,194 460,191 461,187.1 459.5,184.8 458.9,184.2 456.3,182 454.5,179.7 450.8,178 449,177.5 447.4,176.2 446.9,174.1 446.5,171.6 444.9,169.8 444.5,168.2 441.8,165.8 440.5,163 436.1,163.8 433.2,165 431.9,166.4Z"/><path fill="#fde725" d="M571.1,212.3 568,210.4 565.1,211.1 560.5,211.4 558.7,211.9 555.1,213.7 552,213.3 546.9,213.2 545,213.7 543,212.7 542.1,213.5 538.3,214 535.6,213.2 532.5,213.5 530.8,212 526.6,210.7 524.8,214.9 524.2,219.1 524.4,221.3 524.1,224.5 523,226.6 521.9,229 520.9,232.4 520.7,233.1 521.6,234.3 522.6,236.2 521.9,239.4 520.6,243.9 519.4,248.5 517.9,249.8 516.8,251.9 516.6,253.6 516.4,255.8 514.6,259.7 512.2,261.6 511.4,264.5 513.2,265.8 513.3,269.2 515.6,272.9 517.6,272.1 522.9,271 526.7,271 530.2,271 531.9,271.4 532.7,273 536.1,273.8 538.6,273 542.8,273.2 544.9,275.2 545.6,272.6 548,271.1 550.5,269 551.6,265.5 552.2,263.5 554.4,261.1 557.3,258.3 558.9,257.2 559.5,254.9 561.3,251.8 564.4,249.8 566.3,246.6 566.9,243.8 568.3,242.8 571,240.6 573.2,238.8 574.5,238.4 575.2,237.9 573.3,232.9 572.6,231.1 571,227.6 571.4,224 570.4,218.9 571.4,218 570.4,215.1Z"/><path fill="#addc30" d="M575.5,192.2 574.9,194.2 575.1,199.4 574.8,203.1 572.8,206.4 570.6,208.7 570.4,209.2 571.1,212.3 570.4,215.1 571.4,218 570.4,218.9 571.4,224 571,227.6 572.6,231.1 573.3,232.9 575.2,237.9 578.4,239.6 580.4,239.7 583.7,240 586.1,242 587.4,244.2 590.3,244.9 592.8,245.2 595.1,247.1 598.4,244.2 602.7,242.4 605,239.6 606,239.3 608.3,238.2 611.5,237.1 613.5,236.5 614.9,233.5 617.6,231.8 618.5,228.7 619.3,226.1 620,223.6 618.6,219.4 618.8,218.5 620,216.8 620.1,214.3 620.9,210.3 620.5,205 618.7,203 619.2,200.1 615.6,199.6 614.7,199.4 611.7,198.3 609.8,197.8 606.1,199.2 604.2,200.4 602.1,199.5 598.9,198.1 595.2,197.7 589.8,197.2 587.6,196.5 585,196.6 584.3,196.1 581.5,193.8 578.2,191.9Z"/><path fill="#addc30" d="M617.6,231.8 614.9,233.5 613.5,236.5 611.5,237.1 608.3,238.2 606,239.3 605,239.6 602.7,242.4 598.4,244.2 595.1,247.1 597.4,251.4 597.9,254.4 599.8,255 599.8,258.1 600.3,260.4 599.7,263.5 602,264 603,265.5 605.4,268.5 608.4,270.4 610.3,270.8 613.5,272.2 616.4,275.2 617.7,277.1 620.2,277.5 622.5,278.9 624,281.8 627.4,283.7 628.7,282.8 629.9,282.7 633.4,280.3 637.5,279.1 639.7,276 640.9,273.6 643.3,272.1 646.7,270 646.5,267.3 644,265 643.2,264 640.7,262.2 640.1,257.4 638.4,255.7 638.3,253.3 637.7,249.8 637.9,245.7 637.7,242.1 637.5,241.3 637.2,237.4 639.9,237.7 642.1,236.8 643.9,237.6 646.4,236 649.6,235.6 651.1,233 651.9,231.6 655.5,229.4 658.4,229.7 662,230.8 664.1,233.4 667.5,235.6 668.7,235.8 672.3,234.4 674.7,234.9 678.3,234.8 678.3,233.9 678.1,231.6 679.6,229.9 682.3,225.5 684.2,221.1 684.5,218.5 684.4,215.7 685.7,215.5 687.9,214.5 689.2,211.3 688,207.9 687.6,203.8 684.5,204 682.3,203.4 677.5,204.4 673.9,205.1 672,204.7 669.7,204.8 667.7,204.2 664.2,205.1 662,205.5 661.8,207.7 658.3,208.8 656.4,208.3 653,207.4 650.1,205.2 646,202.9 643.8,202 642.7,201.8 640.7,200.4 640.3,198 637.8,196.5 634.8,196.4 632.1,196 627.5,194.1 626,196 625,198.3 622.3,198.8 619.2,200.1 618.7,203 620.5,205 620.9,210.3 620.1,214.3 620,216.8 618.8,218.5 618.6,219.4 620,223.6 619.3,226.1 618.5,228.7Z"/><path fill="#21918c" d="M377.7,167.5 374.8,168.2 369.8,167.1 367.2,166.9 365.2,166.8 363.9,165.7 361.6,166.2 358.3,166.7 356.8,166.6 356,168.3 353.7,169.5 350.1,171.8 347.4,174 346.4,175.5 345.4,177.4 342.7,177.4 339.4,178.9 337.4,178.6 337.3,180.5 339,183.4 341.9,186.3 342.9,188 343.6,190.7 345.2,194.5 345.4,196.9 347,198.5 349.7,202 351.3,206 355.1,205.2 358.8,203.5 363.4,203.1 365,201.5 366.4,202.1 368.6,203.4 372.3,203.8 375.6,205.6 377.6,205.2 381.2,204.7 385.3,204.9 390.4,203.8 391.9,206.6 394,208.6 395.2,209.1 395.5,210.3 398.1,213.1 401.1,215.2 404.1,214.1 406.7,212 408.1,210.2 407.7,206.7 406,203.5 406.8,200.9 407.9,201 408.1,198 409.2,194.7 408.6,190.2 408,187.1 409.5,185.1 410.2,180.8 411.7,178.2 413.1,175.3 412.1,174.8 412.1,173 410.9,172.1 407.9,172.2 405.1,170.7 399.8,169 397.4,169 394.3,169.6 393.6,169 390.9,167.7 388.9,166.9 385.7,166.6 383.7,166.4 381.7,166.4 380.9,166.8Z"/><path fill="#2c728e" d="M351.3,206 352.6,208.9 352.1,209.9 350.1,212.3 349.4,214.1 349.8,217.6 349.5,221 349.2,222.7 348.5,226.8 346.5,230.8 345.2,233.9 344.8,236 343.8,235.8 341.5,237.7 339.1,237.9 337.8,240.3 336.5,241.1 333.4,244 329.7,244.7 333.4,245.1 335.1,246 338.1,248.3 338.6,250.9 339.9,253.7 340.4,254.8 341.1,257.1 343.3,260.9 344.3,262.6 347.2,262.9 347.3,266 348.8,269.3 348.3,270.1 349.4,272.6 348.7,275.2 349.9,280 350.7,280.1 353.5,279.6 356.8,280.1 359.7,282.1 363.7,284.3 363.5,280.7 363.8,279.2 365.5,276.8 367.7,274.9 368.7,273.8 369.2,270.2 369.2,270.2 371.1,268.6 374.1,266.3 376.8,265.5 376.9,262.9 377.4,260.1 379,258.7 380.9,255.7 381.7,254.1 381.4,251.5 381.6,247.5 383.4,244.8 385.7,241 386.6,239.4 388.4,239.2 390.4,237.2 393.9,236.3 397,233.5 399,230.9 401.9,229.5 401.9,227 402.7,226 403.1,222.4 401.3,219.9 401,218.1 401.1,215.2 398.1,213.1 395.5,210.3 395.2,209.1 394,208.6 391.9,206.6 390.4,203.8 385.3,204.9 381.2,204.7 377.6,205.2 375.6,205.6 372.3,203.8 368.6,203.4 366.4,202.1 365,201.5 363.4,203.1 358.8,203.5 355.1,205.2Z"/><path fill="#5ec962" d="M401.9,229.5 399,230.9 397,233.5 393.9,236.3 390.4,237.2 388.4,239.2 386.6,239.4 385.7,241 383.4,244.8 381.6,247.5 381.4,251.5 381.7,254.1 380.9,255.7 379,258.7 377.4,260.1 376.9,262.9 376.8,265.5 378.9,264.1 381.1,263.4 384.4,263.2 387,261.2 389.5,261.7 390.3,260.4 393.8,258.6 396.3,258.5 399.8,257.5 400.7,260.1 403.8,261.7 405.8,262.1 408.6,262.8 411.5,264.9 413.1,267.3 416,268.5 416.1,269.9 418,272.4 419.2,275.6 421.1,277.5 424.6,278.4 426.8,281.6 429.3,285.9 432,287.6 432.5,288.2 434.3,290.2 434.8,293 435.7,294.8 437.9,295.7 439,297.9 442.3,301.4 443.9,300.3 448.3,300.3 451.5,299.2 453.7,297.2 455.7,297.1 456.3,295.7 459.9,295.7 462.3,296.6 464.2,296.5 465.9,299.3 469.2,300.6 471.6,301.1 474.7,303.1 478.6,306 481.7,306.1 483.1,304 484.3,302.1 487.4,300 490.5,297.1 491.4,296.5 492.3,294.7 495.8,294.7 499.5,294 500.8,292.4 502,291.3 506,288 510.3,286.4 512.1,284.3 512.1,280.5 512.5,278.9 514.1,277 515.6,275.2 515.6,272.9 513.3,269.2 513.2,265.8 511.4,264.5 511.2,264.7 508.8,264.8 506.6,264.1 503,262.7 499.4,261.3 497.3,260.2 494.1,256.9 491.3,253.3 490.5,251.9 489,250.9 487.8,248.1 487.5,245.4 485.1,244.3 482.7,242.5 480.7,238.8 477.1,235.8 474.4,238.5 470,239.4 467.9,241.7 467.7,241.6 464.6,243 461.1,242.4 460,243.7 458.4,243.5 457,242.2 454.6,240.3 451.9,238.9 451.2,237.3 450.1,235.3 448.9,232.5 447.6,229.1 446.8,228.2 446.4,225.8 446.9,222 444.9,220 442.7,219.8 441.6,220.5 437.7,219.9 433.1,217.6 429.3,215.2 425.3,214.5 424.2,214.8 422.9,214.1 420.3,211.6 418,209.2 413.7,208.7 410.5,209.4 408.9,210.3 408.1,210.2 406.7,212 404.1,214.1 401.1,215.2 401,218.1 401.3,219.9 403.1,222.4 402.7,226 401.9,227Z"/><path fill="#21918c" d="M322.8,199.2 321.2,200.4 318.3,202.5 316.5,201.8 313.4,199.5 312.2,196.4 309.2,197 308.8,198.7 305.9,199.9 303,200.7 301.9,202.2 302.8,204.4 302,208.1 303.4,209.2 302.9,211.6 304.5,214.1 304.9,214.4 307.2,213.2 311.8,214.2 314.6,213.5 316.3,214.2 317.1,214.6 317.1,211.5 318.5,209.1 320.7,204.5 322.4,202.1Z"/><path fill="#21918c" d="M351.3,206 349.7,202 347,198.5 345.4,196.9 345.2,194.5 343.6,190.7 342.9,188 341.9,186.3 339,183.4 337.3,180.5 336.4,182.4 333.9,186.6 331.4,191.2 330.6,193.6 329.7,195.8 327.4,197.2 324.8,197 323.4,199.2 322.8,199.2 322.4,202.1 320.7,204.5 318.5,209.1 317.1,211.5 317.1,214.6 319.6,215.3 323,216 324.5,218.4 326.5,221.1 329.2,222 330.5,222.5 332.9,224.9 336.2,227.7 338.3,229 334.9,230 331.9,229.8 329.5,231.1 327.4,231.6 329,234.2 328.5,236.5 329.3,241.8 329.4,244.4 329.7,244.7 333.4,244 336.5,241.1 337.8,240.3 339.1,237.9 341.5,237.7 343.8,235.8 344.8,236 345.2,233.9 346.5,230.8 348.5,226.8 349.2,222.7 349.5,221 349.8,217.6 349.4,214.1 350.1,212.3 352.1,209.9 352.6,208.9Z"/><path fill="#fde725" d="M739.4,70.8 735.7,70.5 732.5,69.5 729.8,68.3 728.1,68 726.7,66.8 726.4,62.3 725.4,59.1 725.7,56.2 725.1,55.7 725.7,53.1 725,49.6 725.3,48.1 720,48.2 717,47.7 713.8,47.9 711.8,46 707.2,45.1 705,45.3 702.6,44.9 702.3,46.9 698.5,48.1 695.3,48.3 690.7,49.2 689.1,47.8 685,47.1 685.8,50.2 687.1,52.4 689.9,54 690.6,55.9 691.9,58.8 692.8,62 692.4,63.4 693.7,65.9 694,70.9 695.3,73.2 697.7,74.6 698.8,79.6 701.7,83.2 703.1,84 703.4,86.7 703.2,88 701.6,90.5 699.2,93.2 702.2,94.6 703.2,95.2 704.9,97.1 707.3,100 708.5,101.6 711.8,101.9 714.1,103.3 716.2,106 719.1,107.9 719.8,108.4 721.6,109.6 723.6,108.3 724.8,107.1 725.7,105.1 726.4,102.7 726.2,97.8 726.7,94.4 728.8,92.3 730.3,88.6 729.3,85.9 728.7,83.2 730.2,80.7 731.5,80.2 734.4,77.9 735.6,75.8 736.8,73.6Z"/><path fill="#addc30" d="M729.8,131.6 731.3,132.3 733,129.7 736.5,128.4 740,125.3 741.3,124.3 742.2,122.8 745.3,122.1 748.6,122.2 749.7,120.6 750.3,120.1 753.5,117.1 754.2,114.6 756.2,111.8 755.6,108.1 755.7,105.1 756,102.1 755.9,102.1 758,99.3 758.3,95.3 758.3,91.4 758.1,87.8 756.2,86 756.7,81.3 756.9,78.5 757.1,76.6 758,75.4 756.5,73.4 756.2,68.1 756.3,65.3 756.5,61.9 756,60.9 754.1,58.5 752.9,62.5 753.1,65.5 752.9,68.5 751,68.9 748.6,70.6 747.2,72.9 747,71.8 745.1,71.1 743.2,70.8 739.4,70.8 736.8,73.6 735.6,75.8 734.4,77.9 731.5,80.2 730.2,80.7 728.7,83.2 729.3,85.9 730.3,88.6 728.8,92.3 726.7,94.4 726.2,97.8 726.4,102.7 725.7,105.1 724.8,107.1 723.6,108.3 721.6,109.6 721.9,114.3 722.2,117.4 723.4,119.2 724.1,122.6 726.3,126 727.2,130.2Z"/><path fill="#fde725" d="M753.5,117.1 756.3,119 760.9,121 763.4,121.4 766.4,120.6 769.3,120.5 771.2,122.2 774.9,124.2 776.9,125.2 778.8,125.2 781.4,125.7 782.9,127.3 787,129.1 789.2,127.6 790.8,125.1 790.7,121.4 790.5,119.4 792,116.5 794.7,112.9 796.2,110.6 795.8,107.4 795.7,104.7 797.5,104 800,101.8 801.3,98.7 801.2,95.6 801.6,90.8 803.5,87.4 805.4,86.5 806.3,84.9 805.2,84.7 803.2,84.8 801.6,83.5 798.7,81.2 795.5,79.6 793.7,78.9 790.2,78.4 787.8,77.1 784.4,75.6 780.2,74.9 778.2,74.8 775.5,74.2 774.5,72.5 773.4,71.1 770,70.9 768.2,69.9 764.5,67.9 761.4,64.7 759.5,62.5 756.5,61.9 756.3,65.3 756.2,68.1 756.5,73.4 758,75.4 757.1,76.6 756.9,78.5 756.7,81.3 756.2,86 758.1,87.8 758.3,91.4 758.3,95.3 758,99.3 755.9,102.1 756,102.1 755.7,105.1 755.6,108.1 756.2,111.8 754.2,114.6Z"/><path fill="#fde725" d="M845.2,104.2 845.2,102.8 843.1,102.1 840.6,100.5 836.9,97.9 832.3,96.4 829.9,96.1 827.4,95 825.6,92.4 825.5,90.3 823.5,89.7 821.3,89 818.8,86.7 814,85.6 811,85.6 807.5,85.5 806.3,84.9 805.4,86.5 803.5,87.4 801.6,90.8 801.2,95.6 801.3,98.7 800,101.8 797.5,104 795.7,104.7 795.8,107.4 796.2,110.6 794.7,112.9 792,116.5 790.5,119.4 790.7,121.4 790.8,125.1 789.2,127.6 787,129.1 788.6,131.1 790,132.8 792,135.6 792,139.9 793.7,141.7 793.5,143.4 794.8,148.5 795.8,151.8 797.4,152.1 800.8,152.5 803.1,154.1 807.5,151.7 811.1,151.4 812,149.6 814.6,151 816.1,152 820.2,151.4 822.3,151.4 824.5,153.6 827.3,155.4 830.4,155.8 836.2,156.2 839.3,156.2 842.1,155.4 843.4,155.9 845.3,157.5 849.3,157.4 851.5,156 854.9,155.9 857,156.7 861.1,157.3 863.9,155.8 865.9,153.2 862.7,152.9 861.3,150.5 859.4,146.4 857.6,144.3 857.5,142 856,138.5 855.5,134.8 854.6,131.7 852.2,129.6 851,126.3 848.2,122.1 846,121.1 845,119.4 842.9,114.9 842.9,113.4 842.3,113 843.9,110.2 844.5,108.2Z"/><path fill="#fde725" d="M872.7,49.2 867,48.2 864.1,47.9 860.9,46.7 859.6,44.8 855.5,45.3 853.3,45.2 850.6,46 850.3,47.9 846.7,47.7 843.4,48 838.2,48.2 836.3,46.9 832.9,47.6 830.4,47.7 825.8,47.2 824.3,47.8 822.4,46.4 821.6,45.4 817.4,45.6 814.2,44.8 814.2,49.7 816,53.8 815.7,56.1 817.2,59 817,62.3 818.2,66.2 818.6,66.2 819.6,69 820.8,71.9 821.4,74.6 823.1,76.2 823.2,79.1 824.8,84.5 824.4,86.4 823.8,87.8 821,88.1 818.8,86.7 821.3,89 823.5,89.7 825.5,90.3 825.6,92.4 827.4,95 829.9,96.1 832.3,96.4 836.9,97.9 840.6,100.5 843.1,102.1 845.2,102.8 845.2,104.2 847.8,105.4 847.8,106.6 850.8,106 853.8,105.3 858.2,105.2 861.5,104.6 863.8,105 867.5,107.2 870.4,108.5 874.6,108 875.5,108.3 877.3,109.4 878.8,110 881.3,108.2 883.7,104.5 884.6,102.5 885.2,99.7 887.2,97.6 890,97.2 891.5,95.2 892,94.3 891.2,90.3 889.6,88.2 888.5,87.9 888.5,85.7 886.3,81.8 884.8,79.4 882.9,78.2 879.5,75.6 877.9,72.4 875.8,70.4 873.9,68.3 873.8,64.7 872.3,62 872.8,59.3 871.4,57.8 871.8,54.2 871.5,51.8 871.5,49.4Z"/><path fill="#addc30" d="M872.3,62 873.8,64.7 873.9,68.3 875.8,70.4 877.9,72.4 879.5,75.6 882.9,78.2 884.8,79.4 886.3,81.8 888.5,85.7 888.5,87.9 889.6,88.2 891.2,90.3 892,94.3 895.6,93.8 899.1,94.1 903.2,91.9 906.1,91.2 907.2,89.2 911.1,87.8 914,87.5 916.3,86.5 916.3,85.5 917.2,84.6 919.7,82.8 922.3,81.3 923.3,77.4 923.8,72.7 925.4,69.9 927.6,67 927.9,65.9 928.6,65.3 927.6,61.9 927.2,59.1 928.7,54.7 929,53 929.2,49.5 929.5,45.9 925.3,45.8 921.9,45 917.2,46.6 916.3,47.7 914.2,48.3 912.9,49.7 908.5,48.5 906.5,47.5 903.3,47 901.5,45.3 896.2,45.8 892.7,46.4 888.8,46.1 888.2,47.2 885.2,46.8 883.1,46.3 879.2,47.3 878.3,47.1 875.4,48.1 872.7,49.2 871.5,49.4 871.5,51.8 871.8,54.2 871.4,57.8 872.8,59.3Z"/><path fill="#addc30" d="M865.9,153.2 866.9,153 868.8,151.5 873.1,149.2 876.5,147.6 877.2,144.6 878.3,143.9 881.8,142.2 885,142.2 885.6,141.6 886.6,140.3 889.9,139.4 890.6,136.5 889.7,134.3 890.5,130.5 888.9,125.7 888.8,124.8 886.5,122.2 885.3,118.7 882.9,116.6 881.4,114.8 880,114 878.8,110 877.3,109.4 875.5,108.3 874.6,108 870.4,108.5 867.5,107.2 863.8,105 861.5,104.6 858.2,105.2 853.8,105.3 850.8,106 847.8,106.6 847.8,105.4 845.2,104.2 844.5,108.2 843.9,110.2 842.3,113 842.9,113.4 842.9,114.9 845,119.4 846,121.1 848.2,122.1 851,126.3 852.2,129.6 854.6,131.7 855.5,134.8 856,138.5 857.5,142 857.6,144.3 859.4,146.4 861.3,150.5 862.7,152.9Z"/><path fill="#addc30" d="M935.7,127.9 935.4,126.3 935.4,123.7 933.6,123.3 932.3,121.8 930.3,118.6 930.1,116.3 928.3,114.9 926.3,112.5 924.7,109.4 920.7,108 917.8,107.1 915.6,104.1 912.7,100.4 911.7,98.7 911.2,97.4 912.7,94 915.1,90.4 916.3,86.5 914,87.5 911.1,87.8 907.2,89.2 906.1,91.2 903.2,91.9 899.1,94.1 895.6,93.8 892,94.3 891.5,95.2 890,97.2 887.2,97.6 885.2,99.7 884.6,102.5 883.7,104.5 881.3,108.2 878.8,110 880,114 881.4,114.8 882.9,116.6 885.3,118.7 886.5,122.2 888.8,124.8 888.9,125.7 890.5,130.5 889.7,134.3 890.6,136.5 889.9,139.4 893.3,140.3 895.1,141.1 897.9,141.5 900.1,141.5 903.2,141.5 906.7,141.8 910.6,139.8 911.7,140.2 913.2,139.4 915.3,140.3 917.7,140.4 921,140.6 922.1,140.4 923.1,138.3 925.9,135.5 929.1,133.6 931.1,130.5 932.8,129.8Z"/><path fill="#5ec962" d="M965,179.3 968.4,179.1 971.9,178.8 976.4,179.3 977.6,178.6 979.2,178.6 983.3,176.8 985.2,176.3 987.1,174.3 989.1,174.2 989.1,174.1 989.7,169.6 990.5,167.6 992,165.5 991.2,164.7 991.9,160.8 990.9,156.2 991.2,153.4 991.3,150.9 991.2,147.5 991.7,143.4 990.3,141.2 990.1,140.3 987.8,138.3 987.5,134.9 986,132 984.7,132.3 983.2,133.5 980.5,132.6 977.8,133.1 974.8,132.3 974.2,131.5 970.7,132.1 967.3,131.5 962.3,133.1 960.1,134.1 957.6,134.2 956,134.4 952.7,134.1 951,132.9 947.7,131.5 947,131.3 944.9,131.9 942.2,131.1 943.7,132.4 944,136 945.4,138.6 944.9,140.4 945.8,143.1 946.9,146.5 947.5,150.1 950.2,152.5 951.4,154.8 953.5,159.4 955.5,162.3 955.9,163 957.6,166.5 957.5,170.4 958.3,170.6 959.8,172.4 960.4,176.4 963.3,178Z"/><path fill="#addc30" d="M943.2,191.2 943.8,190.3 945.8,190.8 947.7,189.9 952.3,191.1 955.1,191.1 955.9,189.4 957.6,185.8 960.9,183.9 963.7,180.8 965,179.3 963.3,178 960.4,176.4 959.8,172.4 958.3,170.6 957.5,170.4 957.6,166.5 955.9,163 955.5,162.3 953.5,159.4 951.4,154.8 950.2,152.5 947.5,150.1 946.9,146.5 945.8,143.1 944.9,140.4 945.4,138.6 944,136 943.7,132.4 942.2,131.1 938.8,131.2 934.7,131.8 935.7,127.9 932.8,129.8 931.1,130.5 929.1,133.6 925.9,135.5 923.1,138.3 922.1,140.4 923.1,142.3 924.6,143.6 926,146.8 927,149.6 928.1,151.6 928.1,152.8 928.9,157.9 928.2,161.1 929.2,164.4 928.6,166.5 930.2,172 929.9,174.2 931.8,176.2 931.8,177.7 933.6,181.8 933.5,183.5 937,183.8 939.5,185.7 940.9,188.9Z"/><path fill="#addc30" d="M922.1,140.4 921,140.6 917.7,140.4 915.3,140.3 913.2,139.4 911.7,140.2 910.6,139.8 906.7,141.8 906.1,145.5 905.1,150.8 906.2,153.2 906,154.6 904.9,157.4 904.4,159.6 902.2,163.1 901.7,164 902.5,167.2 902.1,171.6 902.7,175.9 902.1,179.5 906,178.4 909,178.1 912.2,179.7 913.9,181.2 917.8,180.9 920.2,179.9 922.5,179.9 924.4,180.9 925.6,182 929.9,182.7 933.5,183.5 933.6,181.8 931.8,177.7 931.8,176.2 929.9,174.2 930.2,172 928.6,166.5 929.2,164.4 928.2,161.1 928.9,157.9 928.1,152.8 928.1,151.6 927,149.6 926,146.8 924.6,143.6 923.1,142.3Z"/><path fill="#addc30" d="M931.6,203.3 934.4,202.5 936.6,200.4 937.3,197.5 938.1,195.8 940.6,192.6 943.2,191.2 940.9,188.9 939.5,185.7 937,183.8 933.5,183.5 929.9,182.7 925.6,182 924.4,180.9 922.5,179.9 920.2,179.9 917.8,180.9 913.9,181.2 912.2,179.7 909,178.1 906,178.4 902.1,179.5 899,179.9 897.6,181.1 896.6,182.2 896.5,184 898.4,187.7 898.4,191.2 900.3,192.1 900.1,196 901.7,199.8 901.4,203.2 902.7,205.4 904.3,204.2 908.4,203.5 910,204.2 912.5,203.5 914.1,203.7 919.2,203.8 922.9,202.4 927,202.8 928.2,203Z"/><path fill="#addc30" d="M984.7,218.2 981.9,219.7 980.6,222.5 980.1,223.1 978.2,225.4 973.6,226.4 971,228.3 969.7,228.8 966.4,229.6 966.5,230.3 964.9,234 964.5,236.7 965.7,240.5 966.2,241.3 968,245 968.5,244.5 971.6,245.5 974.4,244.8 978,244.3 979.5,244.7 983,243.8 987,245.1 989.9,246.5 991.5,247.5 993.3,246.1 994.9,246.3 997,244.2 999.4,243.3 1001.5,241.1 1002.4,238.4 1002.9,234.8 1003.9,233.7 1004.2,231.3 1005.2,231.1 1006.2,227.2 1005.1,223.4 1005,220.3 1003.3,218.4 1002.6,215.2 1003,212.5 1002.2,207.8 1003.3,206.8 1003.2,205.3 1002.6,203 1002.8,199.5 1001.2,197.8 1001,195.7 1000.2,192.7 998.8,189.3 998.2,186.2 995.5,184.4 994.4,181.5 991.7,177.1 990.4,175 989.1,174.2 987.1,174.3 985.2,176.3 983.3,176.8 979.2,178.6 977.6,178.6 976.4,179.3 971.9,178.8 968.4,179.1 965,179.3 963.7,180.8 960.9,183.9 957.6,185.8 955.9,189.4 955.1,191.1 955.4,192.9 958.9,195.9 961.4,196.7 962.9,197.6 965.3,200.3 965.9,202.6 966.5,203.4 968.6,205.3 969.8,208.8 972.3,211 976.1,211.4 978.3,212.8 981.2,215.7 983.9,217.4Z"/><path fill="#fde725" d="M906.7,141.8 903.2,141.5 900.1,141.5 897.9,141.5 895.1,141.1 893.3,140.3 889.9,139.4 886.6,140.3 885.6,141.6 885,142.2 881.8,142.2 878.3,143.9 877.2,144.6 876.5,147.6 873.1,149.2 868.8,151.5 866.9,153 865.9,153.2 863.9,155.8 861.1,157.3 861.5,161.4 862.7,163.2 862.9,166.2 864.5,169.7 863.7,174.8 864.3,176.7 862.7,178.8 862.4,180.6 865.3,182.2 868.8,183.9 870.4,183.4 873.8,182.6 877,182.6 882.1,181.6 884.4,181.2 886.9,182.5 887.2,182.8 890.4,182 892.6,182.2 896.6,182.2 897.6,181.1 899,179.9 902.1,179.5 902.7,175.9 902.1,171.6 902.5,167.2 901.7,164 902.2,163.1 904.4,159.6 904.9,157.4 906,154.6 906.2,153.2 905.1,150.8 906.1,145.5Z"/><path fill="#fde725" d="M831.9,192.5 835.3,191 838.3,191.4 840.2,190.4 843.8,190.6 848.6,189 850.1,188.3 851.2,186.1 854.9,185.3 857.6,183.6 858.9,183.8 860.7,183.1 861.3,182.7 862.4,180.6 862.7,178.8 864.3,176.7 863.7,174.8 864.5,169.7 862.9,166.2 862.7,163.2 861.5,161.4 861.1,157.3 857,156.7 854.9,155.9 851.5,156 849.3,157.4 845.3,157.5 843.4,155.9 842.1,155.4 839.3,156.2 836.2,156.2 830.4,155.8 827.3,155.4 824.5,153.6 822.3,151.4 820.2,151.4 816.1,152 814.6,151 812,149.6 811.1,151.4 807.5,151.7 803.1,154.1 805.2,157.8 805.4,161.2 807.4,162.2 807.4,166.1 808.6,169 809.3,169.5 809.9,170.4 812.3,173.3 813.6,176.3 816.4,177.5 819.5,178.6 821,181.2 823.7,183.5 825,184.1 825.8,185 828.2,188 829.2,191.1Z"/><path fill="#addc30" d="M787,129.1 782.9,127.3 781.4,125.7 778.8,125.2 776.9,125.2 774.9,124.2 771.2,122.2 769.3,120.5 766.4,120.6 763.4,121.4 760.9,121 756.3,119 753.5,117.1 750.3,120.1 749.7,120.6 748.6,122.2 745.3,122.1 742.2,122.8 741.3,124.3 740,125.3 736.5,128.4 733,129.7 731.3,132.3 733.5,135.1 733.3,139.2 734.4,139.4 733.3,141.4 733.7,143.9 732.4,147.3 733.3,149.5 732.8,150.9 734.6,155.8 735.2,159.2 737.7,162.6 738.2,162.6 739.9,160.6 744.6,160.6 747.7,160.7 751.3,160.4 751.5,161.6 753.8,161.6 756.1,160.8 760.6,161.6 762.9,161.6 765.9,162.2 768.8,164.2 773.7,164.2 777.1,164 779.2,162.1 780.2,160 782.5,157.5 785.5,157 787.4,155.3 788.6,155.8 790.8,154.5 793.7,153.6 795.8,151.8 794.8,148.5 793.5,143.4 793.7,141.7 792,139.9 792,135.6 790,132.8 788.6,131.1Z"/><path fill="#addc30" d="M710,177.1 711,179.7 710.3,182.4 709.6,186.1 708.7,189.4 706.5,191.4 706.9,196.6 707.5,200.4 709.6,202.3 711.4,203.2 714.9,205.4 716.6,208.3 718.4,209.5 720.6,209.8 721,211.8 723,215 726.1,213.8 727.6,210.2 728.1,206.3 730.3,203.7 733.4,200.6 734.8,198.8 735.5,199 737.9,197.6 741,195.5 742.5,193.6 743.3,189.8 743.1,185.4 741.9,181.6 742.4,181 742.5,177.5 742.7,174.9 743,172.4 741.9,171.8 741.6,168.6 739.1,164.3 738.2,162.6 737.7,162.6 735.2,159.2 734.6,155.8 732.8,150.9 733.3,149.5 732.4,147.3 733.7,143.9 733.3,141.4 734.4,139.4 733.3,139.2 733.5,135.1 731.3,132.3 729.8,131.6 724.9,131.9 721.3,133 717.5,131.9 716.6,132.4 713.9,131.1 710.7,131.1 708.4,131.5 706.5,131.6 705.4,133.7 700.7,134.2 697.4,136.2 693.5,136.4 691.8,136.5 691.1,137.8 691.2,139.4 690.3,141.1 689.6,146.4 691.2,149.6 691.5,152.5 690.9,155.6 690.6,158.4 688.7,162.6 687.9,163.4 689.6,163.8 692.2,165.6 694,168.4 697.5,170 701.6,170.4 704.1,171.9 707.1,174.8 709.5,176.7Z"/><path fill="#addc30" d="M738.2,162.6 739.1,164.3 741.6,168.6 741.9,171.8 743,172.4 742.7,174.9 742.5,177.5 742.4,181 741.9,181.6 743.1,185.4 743.3,189.8 742.5,193.6 741,195.5 737.9,197.6 735.5,199 734.8,198.8 733.4,200.6 730.3,203.7 728.1,206.3 727.6,210.2 726.1,213.8 723,215 722.8,217.7 723.7,217.5 724.5,220.6 726.4,223.7 726.5,226.6 727.8,228.4 728,231.1 728.5,232.9 732.6,233 733.4,233.8 735.7,234.5 738,233.6 741.1,232.8 744.5,234.2 745.9,236.4 749.8,237.2 753.1,237.6 758.1,238.4 761.3,238.7 762.5,239.1 764.4,240.8 765.8,242.2 770.2,241.3 773.1,240 773.3,237.6 773.9,235.3 776.4,231.9 779.2,229.9 780.1,228 780.1,224.8 781.3,222.4 783.6,220.3 785,216.4 785,215.6 782.9,212.8 782.3,210.9 779.9,210.5 777.6,209.5 775.3,206.9 772.5,204.1 771.5,202.2 768.5,200.8 767.7,198.7 768.1,195.1 769.2,194.2 769.7,192.2 768.6,190.4 769.4,186.1 771.6,180.8 772.5,178.6 773.3,175.7 774,173.8 773.4,171 774.2,167.6 776.6,166.8 777.1,164 773.7,164.2 768.8,164.2 765.9,162.2 762.9,161.6 760.6,161.6 756.1,160.8 753.8,161.6 751.5,161.6 751.3,160.4 747.7,160.7 744.6,160.6 739.9,160.6Z"/><path fill="#fde725" d="M785,215.6 785.5,211.4 786.4,209.6 788.2,207.8 789.7,205.9 790.3,204.8 791.2,201.1 793.4,196.2 795.6,193 796.2,190.1 796.1,188.4 797.4,188.4 800.3,186.1 802.5,182 802.7,178.4 802.6,174 804.2,171.1 806.9,170.7 808.6,169 807.4,166.1 807.4,162.2 805.4,161.2 805.2,157.8 803.1,154.1 800.8,152.5 797.4,152.1 795.8,151.8 793.7,153.6 790.8,154.5 788.6,155.8 787.4,155.3 785.5,157 782.5,157.5 780.2,160 779.2,162.1 777.1,164 776.6,166.8 774.2,167.6 773.4,171 774,173.8 773.3,175.7 772.5,178.6 771.6,180.8 769.4,186.1 768.6,190.4 769.7,192.2 769.2,194.2 768.1,195.1 767.7,198.7 768.5,200.8 771.5,202.2 772.5,204.1 775.3,206.9 777.6,209.5 779.9,210.5 782.3,210.9 782.9,212.8Z"/><path fill="#fde725" d="M785,216.4 788,217 789.8,216.8 794.3,216.8 797.8,217.5 801.9,219.7 803.3,220.9 804.8,220.7 806,221 809.2,221.5 812.2,221.3 815.2,221.8 817.3,223.4 819,220.4 821.9,218.7 825,215.7 826.8,214.7 826.6,210.8 826.2,209.9 827.5,209.1 829.7,206.2 830.4,203.1 829.5,198.2 829.7,193.8 831.9,192.5 829.2,191.1 828.2,188 825.8,185 825,184.1 823.7,183.5 821,181.2 819.5,178.6 816.4,177.5 813.6,176.3 812.3,173.3 809.9,170.4 809.3,169.5 808.6,169 806.9,170.7 804.2,171.1 802.6,174 802.7,178.4 802.5,182 800.3,186.1 797.4,188.4 796.1,188.4 796.2,190.1 795.6,193 793.4,196.2 791.2,201.1 790.3,204.8 789.7,205.9 788.2,207.8 786.4,209.6 785.5,211.4 785,215.6Z"/><path fill="#fde725" d="M860.9,227.5 860.5,225.1 862,219.7 864,215.9 864.7,213.3 865.2,211.4 865.6,211.1 865.5,207.9 866.2,204.1 868.2,201.3 866.6,198.2 865.6,195.5 863.2,190.4 862.5,187.6 860.4,186.5 860.7,183.1 858.9,183.8 857.6,183.6 854.9,185.3 851.2,186.1 850.1,188.3 848.6,189 843.8,190.6 840.2,190.4 838.3,191.4 835.3,191 831.9,192.5 829.7,193.8 829.5,198.2 830.4,203.1 829.7,206.2 827.5,209.1 826.2,209.9 826.6,210.8 826.8,214.7 829,216.5 831,216.9 834.1,216.6 835.9,217.2 839.4,219.4 840.7,221.7 843,222.8 845.5,222.7 848.3,222.8 853.3,224.3 856.3,226.5 859.8,227.8Z"/><path fill="#fde725" d="M902.7,205.4 901.4,203.2 901.7,199.8 900.1,196 900.3,192.1 898.4,191.2 898.4,187.7 896.5,184 896.6,182.2 892.6,182.2 890.4,182 887.2,182.8 886.9,182.5 884.4,181.2 882.1,181.6 877,182.6 873.8,182.6 870.4,183.4 868.8,183.9 865.3,182.2 862.4,180.6 861.3,182.7 860.7,183.1 860.4,186.5 862.5,187.6 863.2,190.4 865.6,195.5 866.6,198.2 868.2,201.3 871.6,202.4 872.6,204.2 874.7,205 875.8,204.6 877.7,204.8 882,206.7 885.1,209.1 888.8,210 892.3,210 893.6,210.7 896.2,212.6 898.7,210.5 901.4,207.7 902.3,206.6Z"/><path fill="#fde725" d="M896.2,212.6 893.6,210.7 892.3,210 888.8,210 885.1,209.1 882,206.7 877.7,204.8 875.8,204.6 874.7,205 872.6,204.2 871.6,202.4 868.2,201.3 866.2,204.1 865.5,207.9 865.6,211.1 865.2,211.4 864.7,213.3 864,215.9 862,219.7 860.5,225.1 860.9,227.5 861.6,229.4 862,231.2 863.2,233.6 865.2,235.4 867,235.9 871.2,236 873.8,237.1 878.1,238.9 880.5,238 882.9,237.8 883.5,235.6 887.4,235.3 889.9,233.7 892,233.6 892.4,232.5 894.1,232.5 894.8,230 896.4,227.1 895.9,221.7 896.8,219.3 895.7,216.3Z"/><path fill="#fde725" d="M929.5,216.3 930.7,211.9 931.4,211 930.3,208.5 930.6,207.1 931.6,203.3 928.2,203 927,202.8 922.9,202.4 919.2,203.8 914.1,203.7 912.5,203.5 910,204.2 908.4,203.5 904.3,204.2 902.7,205.4 902.3,206.6 901.4,207.7 898.7,210.5 896.2,212.6 895.7,216.3 896.8,219.3 895.9,221.7 896.4,227.1 894.8,230 894.1,232.5 898.1,231.7 900.8,231 904.1,231.6 905.5,230.7 909.7,230.7 912.9,231.1 916.1,229.8 917.4,228.4 919,226.2 922.2,224.9 924.2,224.4 924.5,221.6 926.2,218.8Z"/><path fill="#fde725" d="M955.4,192.9 955.1,191.1 952.3,191.1 947.7,189.9 945.8,190.8 943.8,190.3 943.2,191.2 940.6,192.6 938.1,195.8 937.3,197.5 936.6,200.4 934.4,202.5 931.6,203.3 930.6,207.1 930.3,208.5 931.4,211 930.7,211.9 929.5,216.3 926.2,218.8 924.5,221.6 924.2,224.4 922.2,224.9 919,226.2 917.4,228.4 916.1,229.8 917,231.6 918.7,233.4 918.8,236.5 921,236.1 923.1,235.8 928.2,236.2 932,234.9 935.4,235.4 937.4,236.2 941,236.5 940.5,239.7 941.5,241.7 943.5,241.2 947.5,240.7 948.3,241.4 951.2,240.7 953.8,241.3 959.5,241.9 962.4,240.6 965.7,240.5 964.5,236.7 964.9,234 966.5,230.3 966.4,229.6 964.6,228.4 961.3,225.8 960.2,223.2 958.3,222.2 959.2,219.9 958.9,216.8 959.2,211 958,208.8 958.2,205.4 957.1,202.7 957.9,198.1 956.8,197.5 957.3,195.5Z"/><path fill="#fde725" d="M958.3,222.2 960.2,223.2 961.3,225.8 964.6,228.4 966.4,229.6 969.7,228.8 971,228.3 973.6,226.4 978.2,225.4 980.1,223.1 980.6,222.5 981.9,219.7 984.7,218.2 983.9,217.4 981.2,215.7 978.3,212.8 976.1,211.4 972.3,211 969.8,208.8 968.6,205.3 966.5,203.4 965.9,202.6 965.3,200.3 962.9,197.6 961.4,196.7 958.9,195.9 955.4,192.9 957.3,195.5 956.8,197.5 957.9,198.1 957.1,202.7 958.2,205.4 958,208.8 959.2,211 958.9,216.8 959.2,219.9Z"/><path fill="#fde725" d="M824.5,235.6 824.7,238.1 826.6,241.8 827.1,243.5 829.3,243.8 831.7,245.8 834.3,247.4 837.3,249.3 838.9,249.9 842.5,249.3 844.6,249.4 847,249.1 847.7,248.1 848.5,245.5 851,243.9 853.7,240.5 854.7,238 855.4,236.5 857.5,234 860.4,233.4 862,231.2 861.6,229.4 860.9,227.5 859.8,227.8 856.3,226.5 853.3,224.3 848.3,222.8 845.5,222.7 843,222.8 840.7,221.7 839.4,219.4 835.9,217.2 834.1,216.6 831,216.9 829,216.5 826.8,214.7 825,215.7 821.9,218.7 819,220.4 817.3,223.4 819.3,225.6 821,228 822.4,229.5 823.7,233.2 823.9,235.5Z"/><path fill="#fde725" d="M678.3,234.8 678.7,236.8 680.4,239.4 683.2,240.5 685.4,240.8 689.5,242.7 693.8,245.4 696.1,246.9 698.8,246.8 700,244.4 701.3,242.9 703.7,240.2 705.9,238.3 707,237.1 706.9,234.5 705.1,231.1 703.6,229.5 702.2,228 698.7,225.2 696.2,223.2 694.4,222.6 691.7,220.2 690.7,216.4 690.1,214.8 687.9,214.5 685.7,215.5 684.4,215.7 684.5,218.5 684.2,221.1 682.3,225.5 679.6,229.9 678.1,231.6 678.3,233.9Z"/><path fill="#fde725" d="M512.1,284.3 513.8,286.9 515.4,289.4 517,292.1 517,297.5 518.1,299.8 517.1,301.6 518,305.6 517.2,308.2 518.5,310.6 519,311.1 520.7,314.4 524.9,316.4 528.1,316.9 532.1,317.5 534.2,319.6 534.7,322.5 536.7,324.2 538.4,324.5 541.3,325.5 546.4,327.7 549.9,329.4 553.1,329.6 555.9,329.9 556.5,328.8 558.4,325.8 561.2,323.3 562.6,321.9 563,319.6 564.7,319.7 567.9,318.6 570.1,317.3 571,316.1 570.2,311.1 571.3,307.6 570.9,304.2 572.6,302.7 572.1,298.7 570.5,295.3 566.9,294.2 563.3,293.6 561.2,291 558.1,288.4 556.2,287.3 555.7,285.7 553.7,282.2 552.1,279.8 550.8,279.3 547.4,278.1 544.9,275.2 542.8,273.2 538.6,273 536.1,273.8 532.7,273 531.9,271.4 530.2,271 526.7,271 522.9,271 517.6,272.1 515.6,272.9 515.6,275.2 514.1,277 512.5,278.9 512.1,280.5Z"/><path fill="#fde725" d="M572.1,298.7 573.7,297.2 574.1,294.8 576,293.1 578.9,291.8 580.6,288.5 581.1,285.7 582.8,283.9 585.8,281.1 587.6,279.2 588.1,278.2 589.7,275.1 592.7,272 594.6,269.6 595.1,266.1 596.7,263.9 599.7,263.5 600.3,260.4 599.8,258.1 599.8,255 597.9,254.4 597.4,251.4 595.1,247.1 592.8,245.2 590.3,244.9 587.4,244.2 586.1,242 583.7,240 580.4,239.7 578.4,239.6 575.2,237.9 574.5,238.4 573.2,238.8 571,240.6 568.3,242.8 566.9,243.8 566.3,246.6 564.4,249.8 561.3,251.8 559.5,254.9 558.9,257.2 557.3,258.3 554.4,261.1 552.2,263.5 551.6,265.5 550.5,269 548,271.1 545.6,272.6 544.9,275.2 547.4,278.1 550.8,279.3 552.1,279.8 553.7,282.2 555.7,285.7 556.2,287.3 558.1,288.4 561.2,291 563.3,293.6 566.9,294.2 570.5,295.3Z"/><path fill="#addc30" d="M571,316.1 572,316.4 575.8,315.6 578.6,315.5 583.5,316.8 586.2,318.6 588.8,319.6 590.5,319.4 591.6,319.2 594.5,319.8 597.7,318.1 599.2,315.8 599.6,315 601.8,314.5 604.9,311.9 606.4,310 607.6,307.6 610.8,304.4 614.4,303.5 616.1,302.7 617.5,301.1 620.7,300.5 623.6,298 624.7,294.3 626.3,291.9 627.3,286.8 626.8,284.9 627.4,283.7 624,281.8 622.5,278.9 620.2,277.5 617.7,277.1 616.4,275.2 613.5,272.2 610.3,270.8 608.4,270.4 605.4,268.5 603,265.5 602,264 599.7,263.5 596.7,263.9 595.1,266.1 594.6,269.6 592.7,272 589.7,275.1 588.1,278.2 587.6,279.2 585.8,281.1 582.8,283.9 581.1,285.7 580.6,288.5 578.9,291.8 576,293.1 574.1,294.8 573.7,297.2 572.1,298.7 572.6,302.7 570.9,304.2 571.3,307.6 570.2,311.1Z"/><path fill="#fde725" d="M646.7,270 650.4,271.4 650.9,271.8 653.7,271 655.8,271.6 659.7,271.2 660.7,270.9 661.1,267.7 660.8,264.8 661.7,261.5 664.1,258.6 664.4,254.3 664.7,253.5 665.1,252.1 664.3,249.5 665.8,245.8 667.3,240.8 667.1,238.9 667.5,235.6 664.1,233.4 662,230.8 658.4,229.7 655.5,229.4 651.9,231.6 651.1,233 649.6,235.6 646.4,236 643.9,237.6 642.1,236.8 639.9,237.7 637.2,237.4 637.5,241.3 637.7,242.1 637.9,245.7 637.7,249.8 638.3,253.3 638.4,255.7 640.1,257.4 640.7,262.2 643.2,264 644,265 646.5,267.3Z"/><path fill="#fde725" d="M646.7,270 643.3,272.1 640.9,273.6 639.7,276 637.5,279.1 633.4,280.3 629.9,282.7 628.7,282.8 627.4,283.7 626.8,284.9 627.3,286.8 626.3,291.9 630,294.9 632,295.6 633.6,297.1 635.9,300.6 636.5,303.5 638,305 640.7,307.5 642.4,310.8 645.7,312.4 648.8,311.9 651.4,309.6 653,309.1 657.2,308.9 659.3,308.4 661.8,310 660.7,305.9 661.6,305 662.8,303.2 663.5,300.6 665.2,296.5 664.9,291.2 663.6,289.2 664.2,286.5 664.2,283.9 664.8,281.1 666,278.2 664.7,277.7 663.9,274.3 662.8,272.8 660.7,270.9 659.7,271.2 655.8,271.6 653.7,271 650.9,271.8 650.4,271.4Z"/><path fill="#fde725" d="M645.7,312.4 642.4,310.8 640.7,307.5 638,305 636.5,303.5 635.9,300.6 633.6,297.1 632,295.6 630,294.9 626.3,291.9 624.7,294.3 623.6,298 620.7,300.5 617.5,301.1 616.1,302.7 614.4,303.5 610.8,304.4 607.6,307.6 606.4,310 604.9,311.9 601.8,314.5 599.6,315 599.2,315.8 597.7,318.1 594.5,319.8 594.6,324.1 596.8,326.1 598.8,326.9 600.7,329.8 604.2,333.9 606.1,336.1 608.1,337.5 610.2,340.3 610.4,343.4 612.1,345.2 613.3,347.3 616.2,344.4 616.9,342.5 619,340.1 623.3,337.6 626.6,337.3 628.2,335.9 630.8,335.6 634.7,334.8 637.4,332.1 636.9,330 638.1,327 640.8,323.8 642.4,321.8 642.2,318.7 641.8,316.4 643.2,315.4Z"/><path fill="#fde725" d="M478.6,306 479.2,307 481,307.5 482.1,308.1 483.5,310 484.3,312.9 486.8,315.4 488.1,315.7 491.2,316.8 493.9,320 495.5,322.5 498.2,323.7 498.8,325.6 499.6,327.8 498.4,331.6 498.6,333.1 501.2,330.6 501.9,330.1 503.7,328.7 506.9,327.8 508.8,327.1 510.2,323.9 513.7,321 517.6,318.8 519.3,315.6 520.7,314.4 519,311.1 518.5,310.6 517.2,308.2 518,305.6 517.1,301.6 518.1,299.8 517,297.5 517,292.1 515.4,289.4 513.8,286.9 512.1,284.3 510.3,286.4 506,288 502,291.3 500.8,292.4 499.5,294 495.8,294.7 492.3,294.7 491.4,296.5 490.5,297.1 487.4,300 484.3,302.1 483.1,304 481.7,306.1Z"/><path fill="#fde725" d="M497.8,346.6 496.5,345.7 494.1,344.2 493.3,342.8 492.7,346.4 494.2,347.5 492.6,348.8 492,349.7 492.6,353.3 492.3,356.8 493.5,360.4 495.5,362.3 497.7,364.9 498.6,370.1 500.5,371.9 500,373.4 501.1,376.6 502.2,379.1 504,380.5 506.3,380.8 507.6,381.8 511.2,384.1 513.5,386.2 516.8,386.8 519.9,387 521.4,388.3 523.6,386.6 524.6,383.1 526.8,381.2 530.1,378.5 532,376.9 532.3,376.8 534,375.3 537.4,374.9 540,373.1 541.5,370.2 544,368.6 547.5,365.7 548.9,364.2 548.8,362.5 548.7,359.7 548.1,357.7 548.3,356 547.7,354.2 550.2,351.2 550.9,346.6 550.2,341.7 550.9,340.3 552.3,338.1 553.3,336.2 555,333.6 555.9,329.9 553.1,329.6 549.9,329.4 546.4,327.7 541.3,325.5 538.4,324.5 536.7,324.2 534.7,322.5 534.2,319.6 532.1,317.5 528.1,316.9 524.9,316.4 520.7,314.4 519.3,315.6 517.6,318.8 513.7,321 510.2,323.9 508.8,327.1 506.9,327.8 503.7,328.7 501.9,330.1 501.2,330.6 498.6,333.1 497.7,335.4 497.3,339.5 497.7,343.5Z"/><path fill="#fde725" d="M547.7,354.2 548.3,356 548.1,357.7 548.7,359.7 552.4,361.9 557.6,363.3 560.7,363.7 564,364.2 565.3,365.5 566,366.9 569,367.5 571.5,367.6 575.5,368.3 579.4,369.5 581.4,370.4 584.9,370.3 587.3,370.3 589.9,371.3 593.4,373.1 594.6,374.2 596.9,374.1 597.7,373.5 600.4,371.9 603.2,369.4 604.3,367.1 605.1,363.4 607.6,358.9 610.4,356.6 611.3,355.4 612,353.7 611.3,353.1 612.6,349.4 613.3,347.3 612.1,345.2 610.4,343.4 610.2,340.3 608.1,337.5 606.1,336.1 604.2,333.9 600.7,329.8 598.8,326.9 596.8,326.1 594.6,324.1 594.5,319.8 591.6,319.2 590.5,319.4 588.8,319.6 586.2,318.6 583.5,316.8 578.6,315.5 575.8,315.6 572,316.4 571,316.1 570.1,317.3 567.9,318.6 564.7,319.7 563,319.6 562.6,321.9 561.2,323.3 558.4,325.8 556.5,328.8 555.9,329.9 555,333.6 553.3,336.2 552.3,338.1 550.9,340.3 550.2,341.7 550.9,346.6 550.2,351.2Z"/><path fill="#fde725" d="M661.8,310 659.3,308.4 657.2,308.9 653,309.1 651.4,309.6 648.8,311.9 645.7,312.4 643.2,315.4 641.8,316.4 642.2,318.7 642.4,321.8 640.8,323.8 638.1,327 636.9,330 637.4,332.1 639.2,333.8 641.8,336.2 642.7,337.4 645.3,337.6 648.1,338.5 650.3,340.7 654.2,342.6 656.5,342.8 659,342.7 660.5,340.3 663.6,337.8 665.9,337.6 666.6,336.7 668,334.3 671,332.2 673.4,328.5 671.8,324.4 670.3,321.7 667.3,320.1 666.2,315.6 663.8,312.5 662.9,312.4 661.8,311.5Z"/><path fill="#fde725" d="M613.3,347.3 612.6,349.4 611.3,353.1 612,353.7 614.7,354.2 619.6,355.9 623.5,358.9 625.8,360.9 628.5,361.4 629.3,362.4 629.9,364.9 632.7,367.1 635.4,367.6 639.1,367.9 644.1,369.8 646.9,372.2 649.3,371.9 649.8,370 652.3,368.7 656.2,366.7 657.5,365.3 658.1,364.4 660.8,363.5 660.1,363 661.7,359.8 661.3,357.6 662.5,354.5 661.8,353.8 661.6,350.3 660.5,346.1 659,342.7 656.5,342.8 654.2,342.6 650.3,340.7 648.1,338.5 645.3,337.6 642.7,337.4 641.8,336.2 639.2,333.8 637.4,332.1 634.7,334.8 630.8,335.6 628.2,335.9 626.6,337.3 623.3,337.6 619,340.1 616.9,342.5 616.2,344.4Z"/><path fill="#fde725" d="M646.9,372.2 644.1,369.8 639.1,367.9 635.4,367.6 632.7,367.1 629.9,364.9 629.3,362.4 628.5,361.4 625.8,360.9 623.5,358.9 619.6,355.9 614.7,354.2 612,353.7 611.3,355.4 610.4,356.6 607.6,358.9 605.1,363.4 604.3,367.1 603.2,369.4 600.4,371.9 597.7,373.5 596.9,374.1 597.4,376.7 598.9,379 598.4,384.5 602.5,386.5 605,386.9 606.8,388.5 609.1,391.4 609.4,393.3 610.3,393.7 612.4,395.4 613.7,398.5 616.9,400.7 620.6,401.5 623,403.4 626.4,406.7 628.7,409 631.1,406.1 631.5,404.3 632.3,402.3 635,401.1 638.1,400.7 639.6,399.6 638.7,397.8 639.8,393 642,390.4 642.7,387.6 643.6,384 644.1,381 643.4,376.6 644.3,375.6 646.5,374.6Z"/><path fill="#fde725" d="M646.9,372.2 646.5,374.6 644.3,375.6 643.4,376.6 644.1,381 643.6,384 642.7,387.6 642,390.4 639.8,393 638.7,397.8 639.6,399.6 640.4,400 644.4,400.6 648.3,401.7 652.7,402.7 656.5,403.7 657.6,404.3 660.2,404.3 661.8,403.9 665,404.2 666.9,402.5 667.6,399.5 668.8,399 671.7,397.1 671.8,396.5 672.2,394.6 672.1,392.8 672.5,388.2 671.6,385.9 671.6,383.7 669.9,380 669.8,375.8 668,372.2 668.2,371.6 666.6,368.3 667.1,365.9 662.7,364.3 660.8,363.5 658.1,364.4 657.5,365.3 656.2,366.7 652.3,368.7 649.8,370 649.3,371.9Z"/><path fill="#28ae80" d="M596.9,374.1 594.6,374.2 593.4,373.1 589.9,371.3 587.3,370.3 584.9,370.3 581.4,370.4 579.4,369.5 575.5,368.3 571.5,367.6 569,367.5 566,366.9 565.3,365.5 564,364.2 560.7,363.7 557.6,363.3 552.4,361.9 548.7,359.7 548.8,362.5 548.9,364.2 547.5,365.7 544,368.6 541.5,370.2 540,373.1 537.4,374.9 534,375.3 532.3,376.8 532,376.9 530.1,378.5 526.8,381.2 524.6,383.1 523.6,386.6 521.4,388.3 521.1,391.9 519.7,394.3 519.1,395 520,396.9 519.6,400 521.1,404.5 522.9,404.2 526.5,403.8 529.8,405 532.9,407.6 537.2,409.5 539,409.6 540.2,409.5 542.4,410.9 544,413.5 548.2,415.4 553.2,416 552,416.6 551.3,420.2 552.5,424 552.4,426.1 552.8,429.9 552.2,433.2 549.8,438.1 549.6,440.8 549,441.1 548.9,443.8 550.5,445.7 550.4,447.5 553.4,446.7 557.4,447.7 560.9,446.1 564.1,445.8 566.1,443 570.8,441.8 574.7,439.2 575.4,438.6 578.1,437.4 581.2,437.9 583.5,437.5 585.5,437.8 585.5,434.8 586.6,431.4 589,429.6 588.6,425.5 588.7,421.7 587,419.9 586.6,417.8 584,415.4 582.6,412.4 580.3,410.3 578.2,409.9 578.9,407.5 581.3,405.6 584.2,401.6 585.4,397.4 586,395.3 588.2,392.9 591.2,391.7 592.7,391.8 593.3,389.8 595.3,387.2 598.4,384.5 598.9,379 597.4,376.7Z"/><path fill="#2c728e" d="M494.2,347.5 492.7,346.4 493.3,342.8 490.2,342.1 487.6,341.2 485.2,342.4 483.3,342.3 480.3,344.5 474.8,345.4 472.6,348 470,348.5 467,351.6 463.5,352.4 461.9,352.7 460.9,354.4 458.3,355.4 455.3,357.8 454.2,361.5 453.5,363.4 450.9,365.8 448.1,367.9 447.1,368.5 445.4,369.4 442.7,369 440.4,371 439.2,372.9 438.8,376.9 439.2,377.8 440.9,377.5 442.8,376.8 445.9,376.8 449.1,378 452,380.9 455.9,382.4 457.9,382.8 459.3,384.7 461.4,387.7 462,389.2 463.4,389.7 466.7,391.7 469.4,394.7 472.9,396.3 477.3,396.9 476.9,401.5 477.8,405.6 476.9,409.3 477.5,410.2 477,414.5 477.9,416.9 478.3,419.1 479.6,419.6 480.6,424 483.3,423.3 485.3,424.3 490.9,423.8 494.1,424.1 496.2,422.4 498.7,421.2 501.4,418.8 505.1,417.3 505.5,415.7 507.6,415.3 512,415.2 514.2,413.4 514.8,412.8 516.1,410.4 518.9,407 521.1,404.5 519.6,400 520,396.9 519.1,395 519.7,394.3 521.1,391.9 521.4,388.3 519.9,387 516.8,386.8 513.5,386.2 511.2,384.1 507.6,381.8 506.3,380.8 504,380.5 502.2,379.1 501.1,376.6 500,373.4 500.5,371.9 498.6,370.1 497.7,364.9 495.5,362.3 493.5,360.4 492.3,356.8 492.6,353.3 492,349.7 492.6,348.8Z"/><path fill="#472d7b" d="M438.8,376.9 437.9,379.5 435.4,382.1 432.8,383.8 431.6,383.6 431.2,385.4 430.8,387.3 429.7,391.1 427.7,395.7 426.2,398.4 427,401.4 427.2,402.3 425.8,405.8 425.4,408.3 424,410.3 423,412.4 424.4,414.8 424.8,420.4 424.5,423.8 424.8,426.9 423.8,427.5 422.8,429.9 424.2,432.7 424.7,435.2 424.7,437.8 424.9,439.3 423,444.3 422,448.4 422.4,452 421.7,453.7 422,454.8 423,457 424.8,459.3 426.3,460.1 430.6,459.6 433.7,459.3 438.2,461 440.6,463.6 442.4,465.2 444.3,465.5 444.3,466.4 446.3,468.8 448.2,471.1 450.8,471.9 455.3,472.3 458.2,474 461.8,476.6 462.9,472 463.8,469 466.4,466.2 469.3,463.7 470.4,463.4 471.2,462.5 473.7,460 476.6,458.1 477.7,454.9 478.4,450.9 480.9,449 483.7,447.1 482.6,444.5 482.3,443.3 480.1,442.1 479.1,437.4 477.4,435 476.3,431.9 476.5,430.2 478.8,426.1 480.6,424 479.6,419.6 478.3,419.1 477.9,416.9 477,414.5 477.5,410.2 476.9,409.3 477.8,405.6 476.9,401.5 477.3,396.9 472.9,396.3 469.4,394.7 466.7,391.7 463.4,389.7 462,389.2 461.4,387.7 459.3,384.7 457.9,382.8 455.9,382.4 452,380.9 449.1,378 445.9,376.8 442.8,376.8 440.9,377.5 439.2,377.8Z"/><path fill="#21918c" d="M476.5,430.2 476.3,431.9 477.4,435 479.1,437.4 480.1,442.1 482.3,443.3 482.6,444.5 483.7,447.1 485.1,449.9 485.6,451.2 487.7,451.6 488.5,454.3 490.3,458.5 492.8,459.4 493.9,461.8 496.6,466 497.1,469.1 498.1,471.9 498.8,474.4 498.2,478.7 499.4,482.3 501.7,481.1 505.4,480.1 507,480.9 510.5,481.8 513.8,481.6 518.2,481.6 520.9,481.8 522.4,481 522.8,479.7 522.6,477.8 524.2,476 526.3,471.8 526.1,469.5 525.4,467 525.9,463.1 526,459.8 526.6,455.2 528.2,454 527.8,453.2 526.4,450.9 528,449.5 526.9,444.6 524.7,442.2 523.5,441.2 523.5,436.8 522.1,432.5 522.1,431.4 520.9,429 518.8,424.4 517.7,422.3 514.8,421.5 513.1,418.2 512,415.2 507.6,415.3 505.5,415.7 505.1,417.3 501.4,418.8 498.7,421.2 496.2,422.4 494.1,424.1 490.9,423.8 485.3,424.3 483.3,423.3 480.6,424 478.8,426.1Z"/><path fill="#fde725" d="M628.7,409 626.4,406.7 623,403.4 620.6,401.5 616.9,400.7 613.7,398.5 612.4,395.4 610.3,393.7 609.4,393.3 609.1,391.4 606.8,388.5 605,386.9 602.5,386.5 598.4,384.5 595.3,387.2 593.3,389.8 592.7,391.8 591.2,391.7 588.2,392.9 586,395.3 585.4,397.4 584.2,401.6 581.3,405.6 578.9,407.5 578.2,409.9 580.3,410.3 582.6,412.4 584,415.4 586.6,417.8 587,419.9 588.7,421.7 588.6,425.5 589,429.6 586.6,431.4 585.5,434.8 585.5,437.8 585.6,441.6 587.9,442.6 589.3,444 591.5,446.7 593.9,449.2 595.3,450.3 597.8,450.7 598.5,451.7 601.2,453.7 603.8,453 606.1,453.7 607.9,451.9 609.6,451.5 613.3,448.9 617.4,448.2 618.9,446 621.2,446.1 626.4,444.9 629.6,445.4 630.7,444.3 633.5,443.7 637,441.7 635.5,440.5 635.1,436.3 632.5,432.3 631.6,431.2 628.8,429.6 627.8,425.4 626.1,422.3 625.3,421.5 625.2,419.3 625.9,418.3 625.5,414.5 625.4,412.9 627.4,410.2Z"/><path fill="#fde725" d="M639.6,399.6 638.1,400.7 635,401.1 632.3,402.3 631.5,404.3 631.1,406.1 628.7,409 627.4,410.2 625.4,412.9 625.5,414.5 625.9,418.3 625.2,419.3 625.3,421.5 626.1,422.3 627.8,425.4 628.8,429.6 631.6,431.2 632.5,432.3 635.1,436.3 635.5,440.5 637,441.7 637.8,442.1 640.8,442.3 641.3,441.2 643.8,441.7 646.7,442.3 651.8,441.3 654.5,441.6 657.7,441.3 659.8,440.8 664.4,442.5 666.8,443.1 667.4,440 666.8,437.1 665.7,435.3 666.2,430 665.4,426.4 666.6,422.8 666.1,422.4 665.3,419.5 664.9,416.7 663,414.1 663.8,412.2 663.7,409.6 665,404.2 661.8,403.9 660.2,404.3 657.6,404.3 656.5,403.7 652.7,402.7 648.3,401.7 644.4,400.6 640.4,400Z"/><path fill="#3b528b" d="M528,449.5 526.4,450.9 527.8,453.2 528.2,454 526.6,455.2 526,459.8 525.9,463.1 525.4,467 526.1,469.5 526.3,471.8 524.2,476 522.6,477.8 522.8,479.7 522.4,481 523.6,483.5 523.7,486.8 525.9,488.3 527.4,488.7 529.6,490.9 534.2,492.6 537.8,494.2 542.3,493.9 543.7,493.3 544.9,494.5 547.1,496.6 549.6,497.9 554.3,498.6 556.7,499.4 560,499.4 561.1,496.9 563.4,495.2 566,492.7 567.4,490.3 567.9,488.9 565.1,484.8 564.2,481.7 561.9,481.5 561.6,478.6 561,475.8 560.7,472.7 561.5,471.2 560.5,468.1 560.9,462.7 559.1,461.1 558,458 556.1,454 553.8,450.8 552.8,448.7 550.4,447.5 550.5,445.7 548.9,443.8 549,441.1 549.6,440.8 549.8,438.1 552.2,433.2 552.8,429.9 552.4,426.1 552.5,424 551.3,420.2 552,416.6 553.2,416 548.2,415.4 544,413.5 542.4,410.9 540.2,409.5 539,409.6 537.2,409.5 532.9,407.6 529.8,405 526.5,403.8 522.9,404.2 521.1,404.5 518.9,407 516.1,410.4 514.8,412.8 514.2,413.4 512,415.2 513.1,418.2 514.8,421.5 517.7,422.3 518.8,424.4 520.9,429 522.1,431.4 522.1,432.5 523.5,436.8 523.5,441.2 524.7,442.2 526.9,444.6Z"/><path fill="#28ae80" d="M918.8,236.5 920.3,239.5 920.2,242.4 922.1,244.2 924,243.9 927.3,243 929.2,243.8 933.8,243.9 936.7,242.9 939.2,243.1 940,242.7 940,243.9 940.7,248.7 939.2,252.2 939.2,252.7 942.8,252.6 943.7,251.6 947.2,250 950.4,250.8 955.7,251.2 958.1,251.8 960.5,253.9 961.8,254.2 965.1,253.9 964.5,255.1 963.2,256.4 963.6,257.6 966.3,259.8 971,260.6 973.8,260.4 977.1,260.7 979.8,258.7 985.1,258.2 984.4,261.7 985.1,266.3 987.7,265.2 990.6,264.1 991.4,263.5 993.2,261.8 996.3,261.7 996.6,262.1 999.8,259.7 1001.5,259.1 1001,257.2 998.8,256.5 998.4,254.1 997.1,251.1 996,249.5 995.7,247.9 996.3,247.6 997.8,244.8 1000.6,243.8 1001.5,241.1 999.4,243.3 997,244.2 994.9,246.3 993.3,246.1 991.5,247.5 989.9,246.5 987,245.1 983,243.8 979.5,244.7 978,244.3 974.4,244.8 971.6,245.5 968.5,244.5 968,245 966.2,241.3 965.7,240.5 962.4,240.6 959.5,241.9 953.8,241.3 951.2,240.7 948.3,241.4 947.5,240.7 943.5,241.2 941.5,241.7 940.5,239.7 941,236.5 937.4,236.2 935.4,235.4 932,234.9 928.2,236.2 923.1,235.8 921,236.1Z"/><path fill="#21918c" d="M894.1,232.5 892.4,232.5 892,233.6 893,236.1 895.6,240.7 896.5,242 899.4,244.2 901.6,246.1 903.3,248.2 905.3,249 905.7,249.1 908,250.4 910.7,253 913.4,254.7 917.9,255.2 917.2,257.6 918.1,261.5 917.7,265.7 921.8,265.5 924.2,265.2 927.1,265.7 927.4,267.2 929.1,268.4 931.6,268.7 934.8,268.5 940,269.1 941.9,267.9 943.8,269.3 946.4,271.8 948.4,273.6 949.2,274 952,274.8 953.7,277.1 956.5,279.6 960.2,280.8 962.4,281.3 965.8,282.9 965.5,283.6 967.9,287.2 968.7,289 970.7,289.6 971.1,291.7 971.8,294.6 973.7,296.3 974.5,297.9 977.4,300.9 979.9,303.4 981.6,304.4 982.3,307.5 983.1,309.6 984.1,310.9 986.1,312.5 986.5,313 988.8,310.4 992.3,310.1 994.3,308.6 994.7,308.9 996.1,307.2 998.6,305.1 1000.8,302.5 1001.6,298.2 1002,295.9 1003.7,292.5 1004,291.9 1004.8,290 1006.5,289.2 1006,285.4 1005.5,283.1 1005.6,281.2 1004.1,280.2 1003.4,278 1000.9,275.3 997.4,274.2 995.2,273.8 992.2,271.9 990.7,269.1 990.2,266.6 991.5,264.9 993.6,264.9 995.2,263.3 996.6,262.1 996.3,261.7 993.2,261.8 991.4,263.5 990.6,264.1 987.7,265.2 985.1,266.3 984.4,261.7 985.1,258.2 979.8,258.7 977.1,260.7 973.8,260.4 971,260.6 966.3,259.8 963.6,257.6 963.2,256.4 964.5,255.1 965.1,253.9 961.8,254.2 960.5,253.9 958.1,251.8 955.7,251.2 950.4,250.8 947.2,250 943.7,251.6 942.8,252.6 939.2,252.7 939.2,252.2 940.7,248.7 940,243.9 940,242.7 939.2,243.1 936.7,242.9 933.8,243.9 929.2,243.8 927.3,243 924,243.9 922.1,244.2 920.2,242.4 920.3,239.5 918.8,236.5 918.7,233.4 917,231.6 916.1,229.8 912.9,231.1 909.7,230.7 905.5,230.7 904.1,231.6 900.8,231 898.1,231.7Z"/><path fill="#28ae80" d="M926.8,287.5 928.3,288.5 929,293.4 928.9,296.4 929.5,299.9 928.5,301.4 929.5,306.3 928.8,309.2 928.5,311.5 927.7,311.4 925.9,312.9 926.9,313.5 926.9,316.4 927.4,320.6 928.7,321.7 929.4,323.2 932,327.9 932.9,331.4 935.5,332.6 936.4,335.5 937.7,339.4 938.2,341 940.9,341.8 941.8,342.2 945.2,341.7 947.8,341.6 949.8,342.7 953.1,344 955.9,343.7 961.1,342.4 963.6,342.3 966.5,344.1 964,342.2 962.4,341.5 958.4,341.1 955.3,339.3 951.8,336.9 948.6,335.3 947.5,334.9 945.3,334.3 945.4,332.4 943.8,330.8 943.8,329.6 943.9,330.1 945.4,331.4 946.3,332.4 950.5,332.5 953.2,333.3 957.2,333.5 959.2,333.3 962,333.1 966.1,330.6 968.7,328.5 969.5,326.3 971.3,323.2 974.9,322.6 977.6,321.2 978.9,320.7 977.5,319.8 977.8,317.4 976.2,312.9 976.6,311.1 975.2,308.1 975.3,305.7 976.7,307.8 978.6,309.8 980.5,309.5 983.1,309.6 982.3,307.5 981.6,304.4 979.9,303.4 977.4,300.9 974.5,297.9 973.7,296.3 971.8,294.6 971.1,291.7 970.7,289.6 968.7,289 967.9,287.2 965.5,283.6 965.8,282.9 962.4,281.3 960.2,280.8 956.5,279.6 953.7,277.1 952,274.8 949.2,274 948.4,273.6 946.4,271.8 943.8,269.3 941.9,267.9 940,269.1 938.4,272.3 937.1,276 937.9,280.7 936.6,282.4 933.9,284.8 930.1,286 927.7,285.9Z"/><path fill="#2c728e" d="M925.9,312.9 923.2,312.3 919.7,312.7 918.3,311.5 914.5,309.8 911,308.9 907.4,308.8 903.5,308.8 902.5,308 900.7,306.8 899.7,306.2 897.5,306.1 892.9,305.6 892.6,309 892,309.9 891.9,311.9 892.8,315.9 891.6,317.9 889.3,320.8 888.9,324.1 888.4,327.9 887.9,333.1 888,334.9 887.9,336.2 889.9,337.7 890.3,340.4 893,342.9 894.4,342.6 896.8,342.4 898.9,344.3 901.7,347.9 902.1,350.2 903.6,350.5 904.5,351.7 904.8,355 907.3,356.1 909.5,357.1 914.2,356.4 917.5,356.2 920.5,357.3 922.4,357.6 923.4,361.1 924.5,362.8 924.7,364.4 925.8,365.6 927.7,368.3 929,370.2 932.4,370.6 937.2,371.3 940.5,373.6 944,375.9 945.1,377.8 945.2,378.2 947.3,380.1 947.7,382.7 949.9,384.4 950.7,384.9 953.6,385.6 956.1,384 960,383.8 963.1,381.1 964.9,379.6 967.1,377.1 970.4,375.4 971.9,373.9 972.5,372.1 973.1,371.4 974.7,369.1 976.2,364.3 976.7,360.8 975.7,357.8 973.3,355.8 972.5,351.1 971.2,348.5 969.3,348.2 968,347.9 966.8,346.4 966.5,344.1 963.6,342.3 961.1,342.4 955.9,343.7 953.1,344 949.8,342.7 947.8,341.6 945.2,341.7 941.8,342.2 940.9,341.8 938.2,341 937.7,339.4 936.4,335.5 935.5,332.6 932.9,331.4 932,327.9 929.4,323.2 928.7,321.7 927.4,320.6 926.9,316.4 926.9,313.5Z"/><path fill="#28ae80" d="M838.9,374.3 841.1,376.9 842.2,381.3 844.5,383.4 845.6,385.4 847.3,386.4 848.6,388.7 849.9,390.3 852.7,390.6 855,390.4 858.9,390.9 860.4,391.5 863.8,392.1 866.2,390.6 871,387.9 874.6,387.4 875.4,385.7 877.4,384.1 880.3,382.5 882.1,379.5 882.3,379.9 883.7,378.6 887.2,377.1 889.7,375.3 891.1,374.4 893,373.2 895.3,373.7 898.8,373 902,373.7 903.4,372.2 906.3,373.4 908.5,374 912,375.8 913.3,378.8 916,380.9 915.2,382 915.7,383 915.4,387.1 918.1,389.1 922,389.7 924.7,390.2 928.8,392.2 928.6,391.4 926,388.8 925.3,388.7 922.7,386.5 922.4,382.6 922.9,381.3 924.5,377.9 927,376.5 929.9,374.9 932.8,375.2 934.2,375.1 936.4,374.9 940.5,376.9 943,377.5 945.2,378.2 945.1,377.8 944,375.9 940.5,373.6 937.2,371.3 932.4,370.6 929,370.2 927.7,368.3 925.8,365.6 924.7,364.4 924.5,362.8 923.4,361.1 922.4,357.6 920.5,357.3 917.5,356.2 914.2,356.4 909.5,357.1 907.3,356.1 904.8,355 904.5,351.7 903.6,350.5 902.1,350.2 901.7,347.9 898.9,344.3 896.8,342.4 894.4,342.6 893,342.9 889.8,343.4 887.8,346 887.2,348.7 885.4,351.3 882.2,355.2 880.2,357.7 879.5,358.9 877.8,361.3 873.9,358.8 872.1,356.4 869.2,355.5 868.3,355.6 867.1,354.8 864.2,353 863.2,349.1 860.3,348.7 858.5,346.6 856.9,342.4 854.8,341.1 854.8,340.4 853.2,337 852.9,334.1 851.8,335.3 849,335.6 845.8,338 844.5,339.6 843.8,342.3 840.9,346.2 837.4,348 835.4,350.2 833.5,351.7 830,351.7 826.6,353.7 825.4,355.5 828.1,356.8 829.5,358.6 832.3,361.6 832.8,363.8 834.1,365.1 835.1,367.5 835.5,371.2 837.8,373.7Z"/><path fill="#28ae80" d="M882.3,379.9 882.1,379.5 880.3,382.5 877.4,384.1 875.4,385.7 877.8,387.6 878.3,388.6 879.6,391.5 882,395.1 883.7,396.4 886.6,397.1 890.6,399.9 893.1,402.8 895.4,404.1 898.1,406.3 897.2,410.7 897.8,413.9 897.4,416.7 897.8,419.1 898.8,424.2 902.1,423.7 906,423.3 909.3,423.2 910.9,422.5 912.5,420.5 914.1,419.9 916.9,417 919.4,416.5 920.3,415 921.1,414.2 923.6,413.3 926.3,409.7 927.3,406.4 928,403.2 930.2,399.3 933,398 931.4,396.1 930.3,395.7 928.8,392.2 924.7,390.2 922,389.7 918.1,389.1 915.4,387.1 915.7,383 915.2,382 916,380.9 913.3,378.8 912,375.8 908.5,374 906.3,373.4 903.4,372.2 902,373.7 898.8,373 895.3,373.7 893,373.2 891.1,374.4 889.7,375.3 887.2,377.1 883.7,378.6Z"/><path fill="#2c728e" d="M940.6,406.3 937.8,404.7 936.8,404.3 935.3,403.6 934,401.7 933,399.3 933,398 930.2,399.3 928,403.2 927.3,406.4 926.3,409.7 923.6,413.3 921.1,414.2 920.3,415 919.4,416.5 916.9,417 914.1,419.9 912.5,420.5 910.9,422.5 909.3,423.2 906,423.3 902.1,423.7 898.8,424.2 896.5,424.6 895.4,426.3 893.8,426.5 890.8,428.3 888.7,430.2 888.1,431.9 886.8,435.6 884.1,436.4 881.1,438.2 879.6,438.3 878.8,439.2 874.3,438.9 871.3,440 869.7,440.4 866.1,442.1 862.4,443.1 862.4,443.1 861,447.2 862,449.9 863.8,450.3 867.2,451.7 868.4,454.9 870.6,456.4 873,457.1 874.3,459.4 877.4,462.4 880.6,463 882.6,462.4 886,462.1 887.8,463.3 891.6,465.2 893.6,466.4 895.8,466.2 897.5,465.7 898.7,463.7 900.2,463.2 902.1,461.9 904.6,461.7 908.5,462 909.7,461.5 912,461.9 916.8,460.9 920,460.3 921.1,458.5 923.4,457.3 926.6,455.5 928.9,454.9 929.8,452.7 930.2,451.4 931.1,449.7 933.3,448.1 935.7,446.6 937,443.8 937.4,442.3 938.4,439.1 940.1,437.7 941.4,434.2 942.1,432.2 942.7,429.9 943.3,428.3 942.6,427.2 943.5,423.1 943.6,419 943.5,414.4 943.1,413.1 941.2,409.2Z"/><path fill="#5ec962" d="M829.5,403.5 831.8,403.7 832.1,405.2 833.1,407.1 833.5,410.3 832.6,413.6 832.3,415 830.9,418.2 830,421 830.9,425.8 830.7,427.9 830.1,429.9 832.7,430.4 834.9,432.1 837,434.1 841.5,434.9 844.8,434.8 848,435.6 851.2,437.9 851.8,440.1 853.4,440.7 855.4,440.6 857.5,441.4 862.4,443.1 862.4,443.1 866.1,442.1 869.7,440.4 871.3,440 874.3,438.9 878.8,439.2 879.6,438.3 881.1,438.2 884.1,436.4 886.8,435.6 888.1,431.9 888.7,430.2 890.8,428.3 893.8,426.5 895.4,426.3 896.5,424.6 898.8,424.2 897.8,419.1 897.4,416.7 897.8,413.9 897.2,410.7 898.1,406.3 895.4,404.1 893.1,402.8 890.6,399.9 886.6,397.1 883.7,396.4 882,395.1 879.6,391.5 878.3,388.6 877.8,387.6 875.4,385.7 874.6,387.4 871,387.9 866.2,390.6 863.8,392.1 860.4,391.5 858.9,390.9 855,390.4 852.7,390.6 849.9,390.3 848.6,388.7 847.3,386.4 845.9,387.9 842.9,388.5 840.3,391.6 839.1,393.7 837.6,397 834.3,400 831.1,401.3Z"/><path fill="#addc30" d="M793.3,386.1 793.2,387.7 793.1,388.2 792.1,391.4 792.7,394.7 791.2,399.6 791.8,401 791.3,402.8 792.9,404.5 793.9,408.6 795.5,410 796.8,412.5 797,415.4 797.4,421 799,422.2 800.8,422.5 802.1,423.2 802.5,426.7 804.7,429.4 805.5,430.4 808.5,432.2 810.4,435.9 812.5,439.1 814.5,437.8 817.3,436.5 820,435.5 823.5,433.3 822.7,437.8 823.6,441.7 823.2,445 824.2,447 824.8,450 826,454.5 827.6,455 828.6,457.1 830.5,459.6 830.8,462.9 832.5,464.6 832,466.2 833.3,471.4 832.7,474.3 834,477.3 835.4,475 836.7,474.5 838.8,473.1 841.4,472.8 845.9,474.2 849.3,476 850.7,473.4 851.2,472.5 852.8,470.6 855.1,467.5 856.6,465.9 856.3,462.4 855.7,460.2 856.5,456.3 858.4,453.3 856.1,451.1 855.8,451.2 853.7,448.5 853.7,445.3 855.1,447.5 858.2,449.2 859.5,449.9 862,449.9 861,447.2 862.4,443.1 857.5,441.4 855.4,440.6 853.4,440.7 851.8,440.1 851.2,437.9 848,435.6 844.8,434.8 841.5,434.9 837,434.1 834.9,432.1 832.7,430.4 830.1,429.9 830.7,427.9 830.9,425.8 830,421 830.9,418.2 832.3,415 832.6,413.6 833.5,410.3 833.1,407.1 832.1,405.2 831.8,403.7 829.5,403.5 827.9,401.7 823.9,399.2 821.3,398.1 817.8,397.7 815.3,397.6 814.6,395.9 812.4,393.3 810.3,391.8 807.7,391.3 802.7,390.1 799,387.8 796.2,386.1Z"/><path fill="#28ae80" d="M764.9,392.9 764.3,396.6 764.3,401.9 763.6,404.1 765.1,406.6 766.2,407.5 765.8,411.3 766.3,413.3 765.3,415.6 764.3,417.1 765.3,420.7 766.1,423.4 768.2,425 770.3,425.4 771.9,426.5 775.7,429.1 776,432.4 777.9,435.2 778.6,436.8 780.2,440.9 780.9,444.8 781.7,445.3 782.2,447.5 782.4,450.6 783.2,452.6 783.4,454.1 783.5,454.9 785.8,456.4 787.6,459.7 789.5,462.3 792.8,463.7 794.1,466 796,469.3 797.5,471.7 797.4,473.8 799.1,476.9 799.9,479.9 801.2,481.9 804.2,484.4 806,484 810.5,484.3 813.6,485.3 817,485.2 818.3,483.9 819.9,483.5 820.7,484.8 824.3,487.1 827.2,488.5 830.8,488.6 830.9,487.8 829.3,483.8 830,481 831.6,478.3 834,477.3 832.7,474.3 833.3,471.4 832,466.2 832.5,464.6 830.8,462.9 830.5,459.6 828.6,457.1 827.6,455 826,454.5 824.8,450 824.2,447 823.2,445 823.6,441.7 822.7,437.8 823.5,433.3 820,435.5 817.3,436.5 814.5,437.8 812.5,439.1 810.4,435.9 808.5,432.2 805.5,430.4 804.7,429.4 802.5,426.7 802.1,423.2 800.8,422.5 799,422.2 797.4,421 797,415.4 796.8,412.5 795.5,410 793.9,408.6 792.9,404.5 791.3,402.8 791.8,401 791.2,399.6 792.7,394.7 792.1,391.4 793.1,388.2 790.2,389.4 787.8,390.5 783.7,389.4 782.2,388.7 778.9,388.8 776.3,387.8 771.1,387.7 768.6,388.8 767.5,389.3 766.8,390.6Z"/><path fill="#addc30" d="M804.8,254.3 802.9,251 802.9,247.5 800.9,247.7 801,244.8 799.4,241.8 799.5,239.1 798.5,237.3 798.3,234.5 797.6,229 796.9,227 796.2,224 794.8,221.1 794.3,216.8 789.8,216.8 788,217 785,216.4 783.6,220.3 781.3,222.4 780.1,224.8 780.1,228 779.2,229.9 776.4,231.9 773.9,235.3 773.3,237.6 773.1,240 774.1,243.7 773.2,246.6 773.7,250.4 774,251.6 773.8,252.4 778.5,252.6 781.7,254.7 784.7,255.3 785.6,255.6 787.2,255.9 791,254 794.5,253 798.6,253.7 800.3,253.5ZM805,254.5 805.7,256.7 806.6,259.3 807.7,262.6 807.3,267.3 809,269.3 809.3,271.3 811.2,276.5 812.7,276 816.4,275.6 819.2,276 822.5,277.2 825.9,280 827,282.2 828.9,282.8 830.5,283.8 830.8,288.1 833.3,291.5 834.2,292.1 837.1,293.7 838.6,297.6 840.5,300 842.2,300.4 843.5,300.4 844.7,298.6 847.5,295.6 850,293.7 850.6,290.5 851.5,288.2 854.3,287.6 856.9,285.5 857.8,284.1 859.4,282.2 862.7,278.3 865.4,275.7 866.3,273.4 867.8,270.9 866.5,270.7 865.4,269.9 863.2,267.5 862.5,264.9 860.8,263.8 857.4,263.5 854.8,262 850.5,259.5 847,257.9 846.7,256.9 845.3,255.9 846,252.1 844.6,249.4 842.5,249.3 838.9,249.9 837.3,249.3 834.3,247.4 831.7,245.8 829.3,243.8 827.1,243.5 826.6,241.8 824.7,238.1 824.5,235.6 821.1,237.4 819,239.7 818.1,241.9 816,245.9 812.7,248.3 811,249.8 810.4,252.1 808.3,252.7Z"/><path fill="#fde725" d="M667.5,235.6 667.1,238.9 667.3,240.8 665.8,245.8 664.3,249.5 665.1,252.1 664.7,253.5 664.4,254.3 664.1,258.6 661.7,261.5 660.8,264.8 661.1,267.7 660.7,270.9 662.8,272.8 663.9,274.3 666.9,274.7 670.7,273.4 674.6,271.8 677.9,271.8 678.9,272 680.9,271.8 682.7,271.1 685.2,269 686.7,269 687.1,267.1 688.5,266.2 691.5,263.8 692.4,261.1 693.9,258.9 693.8,255.4 693,252.6 694.1,249.1 695.6,248.7 696.1,246.9 693.8,245.4 689.5,242.7 685.4,240.8 683.2,240.5 680.4,239.4 678.7,236.8 678.3,234.8 674.7,234.9 672.3,234.4 668.7,235.8Z"/><path fill="#fde725" d="M707,237.1 705.9,238.3 703.7,240.2 701.3,242.9 700,244.4 698.8,246.8 696.1,246.9 695.6,248.7 694.1,249.1 693,252.6 693.8,255.4 693.9,258.9 692.4,261.1 691.5,263.8 694.1,265.6 697.7,267.7 699.4,268.2 702.7,267.6 706,267.6 708.6,269.2 712.6,271.2 714.5,272 716,272.2 718.2,273.1 719.4,274.9 723.1,276.2 725.5,275.5 727.9,273.6 729.2,273.2 729.7,270.6 730.4,268 731.2,264.1 732.1,261.8 732.3,258.8 730.5,254.6 730.6,251.2 728.9,250.5 729.5,248.1 728.5,245.1 729.6,242 728.9,241.1 729.9,237 728.5,232.9 728,231.1 723.3,232.6 719.2,234.2 718.1,235.2 715.2,235.8 711.5,236.2 709.1,236.3Z"/><path fill="#fde725" d="M732.1,261.8 736.6,260.1 738,259.5 742.2,258.4 745.7,259.8 749.1,259.6 750.1,261.4 751.7,261.3 755.3,261.2 758,260.3 760.8,258.2 762.3,257.4 767.5,255.2 771.2,255.6 775.1,254.9 774.2,253.7 773.8,252.4 774,251.6 773.7,250.4 773.2,246.6 774.1,243.7 773.1,240 770.2,241.3 765.8,242.2 764.4,240.8 762.5,239.1 761.3,238.7 758.1,238.4 753.1,237.6 749.8,237.2 745.9,236.4 744.5,234.2 741.1,232.8 738,233.6 735.7,234.5 733.4,233.8 732.6,233 728.5,232.9 729.9,237 728.9,241.1 729.6,242 728.5,245.1 729.5,248.1 728.9,250.5 730.6,251.2 730.5,254.6 732.3,258.8Z"/><path fill="#fde725" d="M729.7,270.6 733.3,272.7 735.8,273.7 739.8,274.1 742.4,275.4 743.6,277.6 746,278.8 747.3,278.4 749.9,278.2 754.6,279.7 758.1,281.9 762,283 764.9,283.1 765.3,283.8 767,285.6 768.1,284.4 772.3,285.2 775.1,284.3 777.1,284.9 776.3,282.4 774.9,278.9 774.6,276.9 774.6,274.7 775,272.2 775.9,266.7 776,264.2 776.6,261.3 775.4,259.5 775.1,254.9 771.2,255.6 767.5,255.2 762.3,257.4 760.8,258.2 758,260.3 755.3,261.2 751.7,261.3 750.1,261.4 749.1,259.6 745.7,259.8 742.2,258.4 738,259.5 736.6,260.1 732.1,261.8 731.2,264.1 730.4,268Z"/><path fill="#fde725" d="M775.1,254.9 775.4,259.5 776.6,261.3 776,264.2 775.9,266.7 775,272.2 774.6,274.7 774.6,276.9 774.9,278.9 776.3,282.4 777.1,284.9 779.8,285.2 782.9,286.3 784.4,288.9 788,288.8 792.1,288.2 793.3,286.2 793.8,285 797.1,281.8 800.7,280.5 801.6,278.8 802.3,277.9 805.9,278.1 809.9,276.7 811.2,276.5 809.3,271.3 809,269.3 807.3,267.3 807.7,262.6 806.6,259.3 805.7,256.7 805,254.5 804.8,254.3 800.3,253.5 798.6,253.7 794.5,253 791,254 787.2,255.9 785.6,255.6 784.7,255.3 781.7,254.7 778.5,252.6 773.8,252.4 774.2,253.7Z"/><path fill="#fde725" d="M804.8,254.3 805,254.5 808.3,252.7 810.4,252.1 811,249.8 812.7,248.3 816,245.9 818.1,241.9 819,239.7 821.1,237.4 824.5,235.6 823.9,235.5 823.7,233.2 822.4,229.5 821,228 819.3,225.6 817.3,223.4 815.2,221.8 812.2,221.3 809.2,221.5 806,221 804.8,220.7 803.3,220.9 801.9,219.7 797.8,217.5 794.3,216.8 794.8,221.1 796.2,224 796.9,227 797.6,229 798.3,234.5 798.5,237.3 799.5,239.1 799.4,241.8 801,244.8 800.9,247.7 802.9,247.5 802.9,251Z"/><path fill="#fde725" d="M844.6,249.4 846,252.1 845.3,255.9 846.7,256.9 847,257.9 850.5,259.5 854.8,262 857.4,263.5 860.8,263.8 862.5,264.9 863.2,267.5 865.4,269.9 866.5,270.7 868.1,269.2 870.5,267.6 870.7,263.2 870.1,260.2 871.3,257.7 873.1,253.9 874.1,251.1 875.2,247 875.7,244.6 875.1,244.5 875.8,241.9 878.1,238.9 873.8,237.1 871.2,236 867,235.9 865.2,235.4 863.2,233.6 862,231.2 860.4,233.4 857.5,234 855.4,236.5 854.7,238 853.7,240.5 851,243.9 848.5,245.5 847.7,248.1 847,249.1Z"/><path fill="#fde725" d="M892,233.6 889.9,233.7 887.4,235.3 883.5,235.6 882.9,237.8 880.5,238 878.1,238.9 875.8,241.9 875.1,244.5 875.7,244.6 875.2,247 874.1,251.1 873.1,253.9 871.3,257.7 870.1,260.2 870.7,263.2 870.5,267.6 868.1,269.2 866.5,270.7 867.8,270.9 870.6,272.6 874.3,275.4 879,277.3 881.2,277.9 883.7,278.7 885.5,280.8 887.5,278.8 890.7,276.1 892.4,274.1 891.6,270.7 891.9,267.8 894.1,265.4 895.6,261.1 895.7,259.3 896,258.1 896.3,256 896.3,253.7 897.7,248.4 899.4,244.2 896.5,242 895.6,240.7 893,236.1Z"/><path fill="#fde725" d="M937.9,280.7 937.1,276 938.4,272.3 940,269.1 934.8,268.5 931.6,268.7 929.1,268.4 927.4,267.2 927.1,265.7 924.2,265.2 921.8,265.5 917.7,265.7 918.1,261.5 917.2,257.6 917.9,255.2 913.4,254.7 910.7,253 908,250.4 905.7,249.1 905.3,249 903.3,248.2 901.6,246.1 899.4,244.2 897.7,248.4 896.3,253.7 896.3,256 896,258.1 895.7,259.3 895.6,261.1 894.1,265.4 891.9,267.8 891.6,270.7 892.4,274.1 890.7,276.1 887.5,278.8 885.5,280.8 885.4,283.4 886.8,284.5 886.5,286.7 888.4,289.2 888.6,293.6 891,295.7 890.3,297.3 890.4,301.3 892.3,303.7 892.9,305.6 897.5,306.1 899.7,306.2 900.7,306.8 902.5,308 903.5,308.8 907.4,308.8 911,308.9 914.5,309.8 918.3,311.5 919.7,312.7 923.2,312.3 925.9,312.9 927.7,311.4 928.5,311.5 928.8,309.2 929.5,306.3 928.5,301.4 929.5,299.9 928.9,296.4 929,293.4 928.3,288.5 926.8,287.5 927.7,285.9 930.1,286 933.9,284.8 936.6,282.4Z"/><path fill="#fde725" d="M840.3,303.3 842.7,305.9 843,307.7 845.2,308.4 846.1,309.5 848.6,312.1 850.1,312 853.7,312.5 857.6,312.5 861.4,312.1 864.1,311.2 865.3,309.3 869.3,307.7 872.5,305.6 872.8,304.7 875.2,303.4 878.3,303.7 881.3,302.8 884,303.2 885.8,301.6 890.4,301.3 890.3,297.3 891,295.7 888.6,293.6 888.4,289.2 886.5,286.7 886.8,284.5 885.4,283.4 885.5,280.8 883.7,278.7 881.2,277.9 879,277.3 874.3,275.4 870.6,272.6 867.8,270.9 866.3,273.4 865.4,275.7 862.7,278.3 859.4,282.2 857.8,284.1 856.9,285.5 854.3,287.6 851.5,288.2 850.6,290.5 850,293.7 847.5,295.6 844.7,298.6 843.5,300.4 842.2,300.4 841.9,302.2Z"/><path fill="#fde725" d="M892.9,305.6 892.3,303.7 890.4,301.3 885.8,301.6 884,303.2 881.3,302.8 878.3,303.7 875.2,303.4 872.8,304.7 872.5,305.6 869.3,307.7 865.3,309.3 864.1,311.2 861.4,312.1 857.6,312.5 853.7,312.5 850.1,312 848.6,312.1 849.7,315.8 850.9,317.6 852.4,320.6 852.6,324.2 853.9,329.3 853.3,330.6 857.3,330.7 859.1,330.3 861.8,330.3 862.5,331.5 866.1,331.5 869.8,330.2 874.7,330.2 877.6,331 879.6,331.4 882,333.1 884.6,335.1 888,334.9 887.9,333.1 888.4,327.9 888.9,324.1 889.3,320.8 891.6,317.9 892.8,315.9 891.9,311.9 892,309.9 892.6,309Z"/><path fill="#fde725" d="M811.2,276.5 809.9,276.7 805.9,278.1 802.3,277.9 801.6,278.8 800.7,280.5 797.1,281.8 793.8,285 793.3,286.2 792.1,288.2 788,288.8 784.4,288.9 786.2,291.4 786.2,293.2 787.1,293.4 787.7,296.6 788.7,299.4 789.1,301 792,301.4 794.2,302.5 797.5,305.2 801.9,307.3 804.2,307.9 807.2,308.6 809.1,311 809.6,313.5 811.6,314.5 812.8,314.9 815.6,313.9 819,313.4 822.1,313.5 824.7,312.2 827.3,311.7 830.6,309 834,307.9 836.2,305.1 837.7,304.7 840.3,303.3 841.9,302.2 842.2,300.4 840.5,300 838.6,297.6 837.1,293.7 834.2,292.1 833.3,291.5 830.8,288.1 830.5,283.8 828.9,282.8 827,282.2 825.9,280 822.5,277.2 819.2,276 816.4,275.6 812.7,276Z"/><path fill="#fde725" d="M812.8,314.9 813.9,317.5 813.1,322.9 811.9,326.1 811.6,329.4 810.8,331.1 810.8,332.9 812,336.5 812,338.1 810,340.8 809.2,342.6 809.6,346 809.9,349.1 811.9,352.4 811.6,354.1 814.2,353 816.2,352.8 820.1,354.2 822.8,355.7 825.4,355.5 826.6,353.7 830,351.7 833.5,351.7 835.4,350.2 837.4,348 840.9,346.2 843.8,342.3 844.5,339.6 845.8,338 849,335.6 851.8,335.3 852.9,334.1 852.7,332.5 853.3,330.6 853.9,329.3 852.6,324.2 852.4,320.6 850.9,317.6 849.7,315.8 848.6,312.1 846.1,309.5 845.2,308.4 843,307.7 842.7,305.9 840.3,303.3 837.7,304.7 836.2,305.1 834,307.9 830.6,309 827.3,311.7 824.7,312.2 822.1,313.5 819,313.4 815.6,313.9Z"/><path fill="#fde725" d="M764,338.1 766.8,338.9 770.2,338 774.1,337.6 775.9,339.3 779.9,341.3 783.2,342.3 787,342.9 789.9,343.6 790.2,344.1 792.6,344.7 794.7,346.3 799.3,347.6 803.7,347 806.2,345.7 809.6,346 809.2,342.6 810,340.8 812,338.1 812,336.5 810.8,332.9 810.8,331.1 811.6,329.4 811.9,326.1 813.1,322.9 813.9,317.5 812.8,314.9 811.6,314.5 809.6,313.5 809.1,311 807.2,308.6 804.2,307.9 801.9,307.3 797.5,305.2 794.2,302.5 792,301.4 789.1,301 788.7,299.4 787.7,296.6 786.1,299.9 783.4,304.9 781.4,307.8 781.1,309.3 781,311.2 779.3,311.7 776.8,313.6 775.4,317.7 774.8,320.9 773.2,324.7 770.7,327.9 769,328.6 768.9,330.2 768.7,332.3 766.6,334.1Z"/><path fill="#fde725" d="M739.8,333.3 741,333.7 742.2,335.3 743.3,339.3 746.1,341.6 748.2,341.6 751.7,341.2 753.2,342.1 756.8,344.3 759.2,342.7 761.2,341.6 762.6,339.4 764,338.1 766.6,334.1 768.7,332.3 768.9,330.2 769,328.6 770.7,327.9 773.2,324.7 774.8,320.9 775.4,317.7 776.8,313.6 779.3,311.7 781,311.2 781.1,309.3 781.4,307.8 783.4,304.9 786.1,299.9 787.7,296.6 787.1,293.4 786.2,293.2 786.2,291.4 784.4,288.9 782.9,286.3 779.8,285.2 777.1,284.9 775.1,284.3 772.3,285.2 768.1,284.4 767,285.6 766.6,287.6 764.3,291.3 760.7,293 758.6,294.5 757.9,296.1 755.9,295.9 752.9,297.9 751.2,299.6 749.9,301.6 746.6,305.1 742.7,306.3 740.9,308 740,308.9 740,309.3 740.8,312.8 739.4,315.8 739.9,319.4 739.1,320.9 739.8,325.5 740.2,329.2Z"/><path fill="#fde725" d="M740,308.9 740.9,308 742.7,306.3 746.6,305.1 749.9,301.6 751.2,299.6 752.9,297.9 755.9,295.9 757.9,296.1 758.6,294.5 760.7,293 764.3,291.3 766.6,287.6 767,285.6 765.3,283.8 764.9,283.1 762,283 758.1,281.9 754.6,279.7 749.9,278.2 747.3,278.4 746,278.8 743.6,277.6 742.4,275.4 739.8,274.1 735.8,273.7 733.3,272.7 729.7,270.6 729.2,273.2 727.9,273.6 725.5,275.5 723.1,276.2 722.8,278.6 724.5,280.9 724.9,284.5 724.4,289.7 727.1,292.3 728.7,292.7 729.2,294.8 731,298.9 731.4,301.2 732.8,301.8 735.4,303.7 736.9,307Z"/><path fill="#fde725" d="M694.7,300.1 695.3,301.4 697.1,303.6 697.9,302 701,300.2 704.7,298.4 706.3,295.2 708.1,294.4 712,292.8 715.8,292.3 717.8,292.4 720.3,290.5 724.4,289.7 724.9,284.5 724.5,280.9 722.8,278.6 723.1,276.2 719.4,274.9 718.2,273.1 716,272.2 714.5,272 712.6,271.2 708.6,269.2 706,267.6 702.7,267.6 699.4,268.2 697.7,267.7 694.1,265.6 691.5,263.8 688.5,266.2 687.1,267.1 686.7,269 685.2,269 682.7,271.1 680.9,271.8 680.8,276.4 681.7,277.8 682.8,279.9 683.5,284.9 686.2,287.9 687.3,289.6 690.2,292.8 691.7,295.9 693.2,298.6Z"/><path fill="#fde725" d="M661.8,310 661.8,311.5 662.9,312.4 665.3,311 668.3,311.5 671.4,309.9 673.9,309.2 676.2,306.8 679.7,304.9 683.7,302.9 686.1,301.1 687.5,300.8 690.9,299.6 694.7,300.1 693.2,298.6 691.7,295.9 690.2,292.8 687.3,289.6 686.2,287.9 683.5,284.9 682.8,279.9 681.7,277.8 680.8,276.4 680.9,271.8 678.9,272 677.9,271.8 674.6,271.8 670.7,273.4 666.9,274.7 663.9,274.3 664.7,277.7 666,278.2 664.8,281.1 664.2,283.9 664.2,286.5 663.6,289.2 664.9,291.2 665.2,296.5 663.5,300.6 662.8,303.2 661.6,305 660.7,305.9Z"/><path fill="#fde725" d="M673.4,328.5 675.8,330.3 676.1,330.6 678.4,329.8 680,329.7 683.4,331.3 687.4,333.4 689.8,334.5 690.5,332.1 691.8,331.8 694.5,329.7 697.1,327.7 698.1,325.5 698.8,321.4 701.1,319.1 701.3,316.1 699.6,315.1 699.8,310.9 698.1,308.4 698.3,306.8 696.7,305.7 697.1,303.6 695.3,301.4 694.7,300.1 690.9,299.6 687.5,300.8 686.1,301.1 683.7,302.9 679.7,304.9 676.2,306.8 673.9,309.2 671.4,309.9 668.3,311.5 665.3,311 662.9,312.4 663.8,312.5 666.2,315.6 667.3,320.1 670.3,321.7 671.8,324.4Z"/><path fill="#fde725" d="M701.1,319.1 706.3,319.4 708.6,320.7 711,322.1 711.9,322.6 713.1,322.3 716.7,322.7 719.5,324.6 724,326.9 726.4,328 729.1,327.8 732.3,328 734.5,329.8 738.4,332.2 739.8,333.3 740.2,329.2 739.8,325.5 739.1,320.9 739.9,319.4 739.4,315.8 740.8,312.8 740,309.3 740,308.9 736.9,307 735.4,303.7 732.8,301.8 731.4,301.2 731,298.9 729.2,294.8 728.7,292.7 727.1,292.3 724.4,289.7 720.3,290.5 717.8,292.4 715.8,292.3 712,292.8 708.1,294.4 706.3,295.2 704.7,298.4 701,300.2 697.9,302 697.1,303.6 696.7,305.7 698.3,306.8 698.1,308.4 699.8,310.9 699.6,315.1 701.3,316.1Z"/><path fill="#fde725" d="M689.8,334.5 692.1,335.4 692.1,339.5 693.5,343.1 692.8,347.3 693.5,348.7 692.6,351.4 693.1,355.3 692.8,357.3 693.8,358.9 694,358.9 695.6,358.1 699.9,358.8 704.2,358.7 706.6,358.4 709.8,358.5 713,356.9 717.9,356.8 719,354.8 721.1,354.8 722.6,353.9 726.8,354.1 729,354.8 729.5,353.3 731,351 734.2,349.4 736.8,345.9 738.1,344.5 739.7,342.6 742.9,341.6 746.1,341.6 743.3,339.3 742.2,335.3 741,333.7 739.8,333.3 738.4,332.2 734.5,329.8 732.3,328 729.1,327.8 726.4,328 724,326.9 719.5,324.6 716.7,322.7 713.1,322.3 711.9,322.6 711,322.1 708.6,320.7 706.3,319.4 701.1,319.1 698.8,321.4 698.1,325.5 697.1,327.7 694.5,329.7 691.8,331.8 690.5,332.1Z"/><path fill="#fde725" d="M659,342.7 660.5,346.1 661.6,350.3 661.8,353.8 662.5,354.5 661.3,357.6 661.7,359.8 660.1,363 660.8,363.5 662.7,364.3 667.1,365.9 669.8,365.4 672.4,366.6 675.7,365.4 679.2,365.5 683.5,363.2 684.4,362.5 686.1,360.1 690.1,359.9 691.9,358.3 693.8,358.9 692.8,357.3 693.1,355.3 692.6,351.4 693.5,348.7 692.8,347.3 693.5,343.1 692.1,339.5 692.1,335.4 689.8,334.5 687.4,333.4 683.4,331.3 680,329.7 678.4,329.8 676.1,330.6 675.8,330.3 673.4,328.5 671,332.2 668,334.3 666.6,336.7 665.9,337.6 663.6,337.8 660.5,340.3Z"/><path fill="#fde725" d="M667.1,365.9 666.6,368.3 668.2,371.6 668,372.2 669.8,375.8 669.9,380 671.6,383.7 671.6,385.9 672.5,388.2 672.1,392.8 672.2,394.6 671.8,396.5 671.7,397.1 675.8,399.4 679.6,400.7 681.7,401 685.5,401.8 688.6,400.9 693,399.7 693.9,400.4 695.9,400.7 697,397.6 699.3,395.4 701.5,393.5 700.9,391.7 701.1,390.5 700.3,388.4 699.9,384.4 699.2,382.6 698.7,380 698.3,377.1 697.8,371.4 697.4,369.3 696.3,366.4 695.8,364.4 694.3,359.8 694,358.9 693.8,358.9 691.9,358.3 690.1,359.9 686.1,360.1 684.4,362.5 683.5,363.2 679.2,365.5 675.7,365.4 672.4,366.6 669.8,365.4Z"/><path fill="#fde725" d="M730.1,392.3 729,388 730.1,387.1 729.8,384.9 731.5,382.9 731.8,378.5 731.5,376.7 731,374 728.9,369.2 729.2,365.1 728.2,361.5 729.3,361 729.3,357.5 729,354.8 726.8,354.1 722.6,353.9 721.1,354.8 719,354.8 717.9,356.8 713,356.9 709.8,358.5 706.6,358.4 704.2,358.7 699.9,358.8 695.6,358.1 694,358.9 694.3,359.8 695.8,364.4 696.3,366.4 697.4,369.3 697.8,371.4 698.3,377.1 698.7,380 699.2,382.6 699.9,384.4 700.3,388.4 701.1,390.5 700.9,391.7 701.5,393.5 702.8,394.5 705.3,394.9 707.8,396.8 713.5,396.3 716.3,396.3 719.6,395.5 721.1,393.5 725.5,393.4 727.9,391.9Z"/><path fill="#fde725" d="M729,354.8 729.3,357.5 729.3,361 728.2,361.5 729.2,365.1 728.9,369.2 731,374 731.5,376.7 731.8,378.5 731.5,382.9 729.8,384.9 730.1,387.1 729,388 730.1,392.3 730.4,394 731.8,394.5 735.1,393.4 739.7,393.9 743.1,393.7 745.9,393.7 748.7,395.6 753,395.9 755.9,396.5 758,396.6 758.6,394.5 761.7,393.9 764.9,392.9 766.8,390.6 767.5,389.3 768.6,388.8 771.1,387.7 771.1,386.8 769.5,383.8 770.2,379.6 769.3,378.8 769.6,376 768.9,371.3 767.7,368.5 766.7,365.7 764.1,363.4 763,359.5 760.1,356.2 759.4,356.1 757.5,353.2 757.3,349.8 756.8,348.6 756.5,346.7 756.8,344.3 753.2,342.1 751.7,341.2 748.2,341.6 746.1,341.6 742.9,341.6 739.7,342.6 738.1,344.5 736.8,345.9 734.2,349.4 731,351 729.5,353.3Z"/><path fill="#fde725" d="M756.8,344.3 756.5,346.7 756.8,348.6 757.3,349.8 757.5,353.2 759.4,356.1 760.1,356.2 763,359.5 764.1,363.4 766.7,365.7 767.7,368.5 768.9,371.3 769.6,376 769.3,378.8 770.2,379.6 769.5,383.8 771.1,386.8 771.1,387.7 776.3,387.8 778.9,388.8 782.2,388.7 783.7,389.4 787.8,390.5 790.2,389.4 793.1,388.2 793.2,387.7 793.3,386.1 795.1,384.6 798.1,382 800,380 800.1,377.9 800.5,374 802.6,371 804.8,368.9 805.8,365.5 806.6,362.8 808.7,361.1 811,358.1 811.7,355.7 811.6,354.1 811.9,352.4 809.9,349.1 809.6,346 806.2,345.7 803.7,347 799.3,347.6 794.7,346.3 792.6,344.7 790.2,344.1 789.9,343.6 787,342.9 783.2,342.3 779.9,341.3 775.9,339.3 774.1,337.6 770.2,338 766.8,338.9 764,338.1 762.6,339.4 761.2,341.6 759.2,342.7Z"/><path fill="#fde725" d="M825.4,355.5 822.8,355.7 820.1,354.2 816.2,352.8 814.2,353 811.6,354.1 811.7,355.7 811,358.1 808.7,361.1 806.6,362.8 805.8,365.5 804.8,368.9 802.6,371 800.5,374 800.1,377.9 800,380 798.1,382 795.1,384.6 793.3,386.1 796.2,386.1 799,387.8 802.7,390.1 807.7,391.3 810.3,391.8 812.4,393.3 814.6,395.9 815.3,397.6 817.8,397.7 821.3,398.1 823.9,399.2 827.9,401.7 829.5,403.5 831.1,401.3 834.3,400 837.6,397 839.1,393.7 840.3,391.6 842.9,388.5 845.9,387.9 847.3,386.4 845.6,385.4 844.5,383.4 842.2,381.3 841.1,376.9 838.9,374.3 837.8,373.7 835.5,371.2 835.1,367.5 834.1,365.1 832.8,363.8 832.3,361.6 829.5,358.6 828.1,356.8Z"/><path fill="#fde725" d="M730.4,394 730.1,392.3 727.9,391.9 725.5,393.4 721.1,393.5 719.6,395.5 716.3,396.3 713.5,396.3 707.8,396.8 705.3,394.9 702.8,394.5 701.5,393.5 699.3,395.4 697,397.6 695.9,400.7 695.4,404.6 697,407.1 696.8,409.2 698.2,412.1 698,415.8 698.7,416.5 699,418.3 699.4,420.1 700.7,424.9 701,426.7 703.5,426.6 706.1,426.9 708.8,427.2 711.9,428.7 712.9,430.7 716.4,431.1 719.6,430.4 722.6,430.3 724.3,428.1 724.8,424.9 726.7,422.3 729.8,418.5 731.6,415.2 731.4,413.4 729.5,411.3 729.3,411 729.8,406.8 729.6,403.5 731.1,399.7 730.3,397.7Z"/><path fill="#fde725" d="M757.9,427 761.4,424.8 763.9,423.1 765.3,420.7 764.3,417.1 765.3,415.6 766.3,413.3 765.8,411.3 766.2,407.5 765.1,406.6 763.6,404.1 764.3,401.9 764.3,396.6 764.9,392.9 761.7,393.9 758.6,394.5 758,396.6 755.9,396.5 753,395.9 748.7,395.6 745.9,393.7 743.1,393.7 739.7,393.9 735.1,393.4 731.8,394.5 730.4,394 730.3,397.7 731.1,399.7 729.6,403.5 729.8,406.8 729.3,411 729.5,411.3 731.4,413.4 731.6,415.2 735.1,417.3 736.5,419 739.2,419.6 742,420.1 743.9,421.3 747.1,423.1 748.3,424.6 751.2,425.3 754.5,425.9Z"/><path fill="#fde725" d="M701,426.7 700.7,424.9 699.4,420.1 699,418.3 698.7,416.5 698,415.8 698.2,412.1 696.8,409.2 697,407.1 695.4,404.6 695.9,400.7 693.9,400.4 693,399.7 688.6,400.9 685.5,401.8 681.7,401 679.6,400.7 675.8,399.4 671.7,397.1 668.8,399 667.6,399.5 666.9,402.5 665,404.2 663.7,409.6 663.8,412.2 663,414.1 664.9,416.7 665.3,419.5 666.1,422.4 666.6,422.8 665.4,426.4 666.2,430 665.7,435.3 666.8,437.1 667.4,440 666.8,443.1 668.6,445.6 670.3,446.5 671,446.9 673.7,448.4 676.2,450.7 679.8,449.1 683,445.5 684.3,441.8 685.9,439.9 689.2,437.3 691.8,436.3 692.7,436.1 694.1,433.9 697.3,432.4 699.9,430.1Z"/><path fill="#fde725" d="M888,334.9 884.6,335.1 882,333.1 879.6,331.4 877.6,331 874.7,330.2 869.8,330.2 866.1,331.5 862.5,331.5 861.8,330.3 859.1,330.3 857.3,330.7 853.3,330.6 852.7,332.5 852.9,334.1 853.2,337 854.8,340.4 854.8,341.1 856.9,342.4 858.5,346.6 860.3,348.7 863.2,349.1 864.2,353 867.1,354.8 868.3,355.6 869.2,355.5 872.1,356.4 873.9,358.8 877.8,361.3 879.5,358.9 880.2,357.7 882.2,355.2 885.4,351.3 887.2,348.7 887.8,346 889.8,343.4 893,342.9 890.3,340.4 889.9,337.7 887.9,336.2Z"/><path fill="#3b528b" d="M433.7,459.3 430.6,459.6 426.3,460.1 424.8,459.3 423,457 422,454.8 421.4,458.7 419,460.9 418.7,463.6 418.1,466.2 418.4,470 419.9,475.7 418.9,477.8 419.1,479.9 418.5,481.7 418.4,484.9 420.1,488.2 420.1,489.2 421,493.2 420.2,497.4 418.6,502.1 418.7,504.5 417.7,505.5 418.4,509 418.6,511.1 417.1,514.1 416.8,514.9 415.2,518.7 414.9,523.1 416.2,527.3 416.1,529.9 417.3,531.1 417.1,534.6 416,536.7 416.6,539.6 416.3,540.2 416.8,543.5 418,546.9 417.4,551.6 419.4,551 420.8,549.3 422.1,549 425.7,548 428.3,547.5 431.3,549.2 432.7,549.9 436.9,550.7 440.5,552.1 444.4,552.6 447.4,553.9 448.2,556.9 449.6,559 451.3,559.4 452.4,560.8 455.3,563.8 459.4,565.7 462.2,566.1 465.5,567.7 468.8,570.6 470,572.4 471.4,572.8 473.9,574.5 475.4,577.5 478.3,577.5 481.8,576.1 486.6,574.5 485.3,570.4 484.9,565.4 482.9,563.4 483.4,561.3 483.5,560.2 484,556 485.3,554.3 484.3,551.7 484.9,549.7 484.2,544.5 484.6,540.4 486.1,537.9 486.2,535.9 487.6,533.5 486.6,529.7 485.9,528.7 485.2,526.5 487.6,525.2 491.1,522 489.1,517.9 488.8,513.3 486.3,512.3 485.8,509.5 483.6,507.1 483.7,503.7 482.3,502.7 483.3,501.8 482.5,497.8 480.9,495.6 478.4,495.1 475.4,495.2 473.2,494 469,491.5 465.1,489.6 462.9,488.9 460,487.8 461,486 460.6,482.1 462.1,481.3 461.7,479 461.8,476.6 458.2,474 455.3,472.3 450.8,471.9 448.2,471.1 446.3,468.8 444.3,466.4 444.3,465.5 442.4,465.2 440.6,463.6 438.2,461Z"/><path fill="#440154" d="M461.8,476.6 461.7,479 462.1,481.3 460.6,482.1 461,486 460,487.8 462.9,488.9 465.1,489.6 469,491.5 473.2,494 475.4,495.2 478.4,495.1 480.9,495.6 482.5,497.8 483.3,501.8 482.3,502.7 483.7,503.7 483.6,507.1 485.8,509.5 486.3,512.3 488.8,513.3 489.1,517.9 491.1,522 487.6,525.2 485.2,526.5 485.9,528.7 486.6,529.7 487.6,533.5 486.2,535.9 486.1,537.9 484.6,540.4 484.2,544.5 484.9,549.7 484.3,551.7 485.3,554.3 484,556 483.5,560.2 483.4,561.3 482.9,563.4 484.9,565.4 485.3,570.4 486.6,574.5 488.9,573.5 490.7,573.1 492.5,573.3 494.6,573.4 498.1,571.1 499.9,569.1 500.6,569.2 502.7,567.7 505.6,565.8 506.8,564.3 507.3,560.9 509.7,558.7 512.9,557.6 516.3,556.5 517.3,556.8 521.7,556.4 526,556 529.5,556.2 531.8,555 533.5,555.3 538,553.7 539.8,553.9 541.8,552.5 542.7,552.4 546.3,552 550.4,551.5 550.2,550.6 549,548.3 549.7,543 551.3,540.3 553.2,536.7 554.2,534.4 554.3,533.5 555.3,530.8 557.7,529.2 560.2,526.6 561,523 560.7,521.1 561.4,517.9 562.8,515.3 562.7,510.7 563.9,508.3 563.1,506.7 563,505.7 561.2,501.5 560,499.4 556.7,499.4 554.3,498.6 549.6,497.9 547.1,496.6 544.9,494.5 543.7,493.3 542.3,493.9 537.8,494.2 534.2,492.6 529.6,490.9 527.4,488.7 525.9,488.3 523.7,486.8 523.6,483.5 522.4,481 520.9,481.8 518.2,481.6 513.8,481.6 510.5,481.8 507,480.9 505.4,480.1 501.7,481.1 499.4,482.3 498.2,478.7 498.8,474.4 498.1,471.9 497.1,469.1 496.6,466 493.9,461.8 492.8,459.4 490.3,458.5 488.5,454.3 487.7,451.6 485.6,451.2 485.1,449.9 483.7,447.1 480.9,449 478.4,450.9 477.7,454.9 476.6,458.1 473.7,460 471.2,462.5 470.4,463.4 469.3,463.7 466.4,466.2 463.8,469 462.9,472Z"/><path fill="#3b528b" d="M550.4,447.5 552.8,448.7 553.8,450.8 556.1,454 558,458 559.1,461.1 560.9,462.7 560.5,468.1 561.5,471.2 560.7,472.7 561,475.8 561.6,478.6 561.9,481.5 564.2,481.7 565.1,484.8 567.9,488.9 568.1,488.9 571,488.3 575.5,488.2 578.1,488.8 579.8,488.3 580.8,489.7 583.9,490.5 587.6,490.1 590.8,490.5 593.2,488.8 596.5,487.3 601.1,487.2 604.8,486.3 607,487.6 608,489 610.7,489 613.7,490.2 617.2,490.5 619,491.3 622.2,493.2 625.5,494.8 627.1,493.8 627.7,488.4 629.1,484.5 629,481.5 627.5,478.8 628.1,477.3 630.1,473.8 630.5,471 630.4,469.9 630.8,466.6 630.7,462.9 631.6,458.4 634,454 634.9,453.3 634.1,451.9 634.8,449 636.7,446.3 637.8,442.1 637,441.7 633.5,443.7 630.7,444.3 629.6,445.4 626.4,444.9 621.2,446.1 618.9,446 617.4,448.2 613.3,448.9 609.6,451.5 607.9,451.9 606.1,453.7 603.8,453 601.2,453.7 598.5,451.7 597.8,450.7 595.3,450.3 593.9,449.2 591.5,446.7 589.3,444 587.9,442.6 585.6,441.6 585.5,437.8 583.5,437.5 581.2,437.9 578.1,437.4 575.4,438.6 574.7,439.2 570.8,441.8 566.1,443 564.1,445.8 560.9,446.1 557.4,447.7 553.4,446.7Z"/><path fill="#3b528b" d="M613.7,490.2 610.7,489 608,489 607,487.6 604.8,486.3 601.1,487.2 596.5,487.3 593.2,488.8 590.8,490.5 587.6,490.1 583.9,490.5 580.8,489.7 579.8,488.3 578.1,488.8 575.5,488.2 571,488.3 568.1,488.9 567.9,488.9 567.4,490.3 566,492.7 563.4,495.2 561.1,496.9 560,499.4 561.2,501.5 563,505.7 563.1,506.7 563.9,508.3 562.7,510.7 562.8,515.3 561.4,517.9 564.7,518 567.8,518.8 570.7,520.3 574.5,521.5 576.3,521.7 579.6,521.9 582.7,523.4 585,525.9 588.3,527.6 589.3,527.8 591.3,527.7 593.9,529 596.4,531.7 601.6,534 605,534.5 608,534.2 610.3,534.8 610.4,536.8 612.7,538.6 615,535.4 617.7,532.5 618.9,528.1 619.4,525.8 621.3,524.5 624.1,522.6 623.8,522.3 624.3,519.4 624.2,514.8 624,510.8 626.2,507 627,505.6 627.7,501.7 628.1,498.6 626.5,497.3 626.3,496.6 625.5,494.8 622.2,493.2 619,491.3 617.2,490.5Z"/><path fill="#3b528b" d="M561.4,517.9 560.7,521.1 561,523 560.2,526.6 557.7,529.2 555.3,530.8 554.3,533.5 554.2,534.4 553.2,536.7 551.3,540.3 549.7,543 549,548.3 550.2,550.6 550.4,551.5 551.7,552.9 553.4,556.9 555.5,558.9 556.4,559.5 560.5,560 561.3,562.1 563.2,564.4 564,565.3 566.8,565.1 570.7,565.4 573.7,567.2 577.7,569.4 579.4,570.6 582.6,570.4 585.1,570.2 588,571 590.9,572.5 592.3,569.3 592.7,567.7 595,565.4 598.7,564.1 601.1,563.8 602.4,562.5 604.9,562.6 608.4,560.2 611.1,559 613.2,556.1 611.9,552.3 613.1,550.6 613.2,547.7 613.2,545.4 613.4,541.7 611.9,541 612.7,538.6 610.4,536.8 610.3,534.8 608,534.2 605,534.5 601.6,534 596.4,531.7 593.9,529 591.3,527.7 589.3,527.8 588.3,527.6 585,525.9 582.7,523.4 579.6,521.9 576.3,521.7 574.5,521.5 570.7,520.3 567.8,518.8 564.7,518Z"/><path fill="#472d7b" d="M613.2,556.1 611.1,559 608.4,560.2 604.9,562.6 602.4,562.5 601.1,563.8 598.7,564.1 595,565.4 592.7,567.7 592.3,569.3 590.9,572.5 588,571 585.1,570.2 582.6,570.4 579.4,570.6 577.7,569.4 573.7,567.2 570.7,565.4 566.8,565.1 564,565.3 563.2,564.4 561.3,562.1 560.5,560 556.4,559.5 554.3,562.4 553.7,566.5 554,570.2 553.4,574.7 551.1,576.6 549,577 548.5,579.1 549.1,581.3 548.5,585.7 549,588.2 547.2,590.8 545.8,594.6 545.7,598.4 544.8,602.3 546.1,602.5 546.6,604.7 549.3,606 551.5,607.6 556.1,609.1 559.4,609.8 563.1,609.8 565.2,610.2 565.5,611.7 568.2,613.2 570.8,613.2 575.4,612 579.9,611.9 582.1,613.7 585.3,615.2 587.2,614.9 590.1,613.9 591.8,616.8 592.3,620.9 593.4,618.1 594.3,616.7 595,614.9 596.1,614.4 598.9,612.1 601.9,611.3 603.4,608.5 604.4,605.9 606.9,604.1 610.2,601.4 612.6,601.2 613.6,600.2 616.9,599.5 621.6,599.1 624.2,596.3 625.3,594.8 628.2,592 632,589.9 634.1,589.5 635.2,587.9 637.4,588.5 640.7,586.9 642.6,586.7 642.7,585.3 641.1,583.8 641.3,581.1 639.4,578.3 638.4,577 636.2,576.2 632.8,573.8 630.9,570.7 627.6,569.1 625.3,568.3 624.1,566 621.5,562.9 620.3,561.2 618.3,560.6 615,559Z"/><path fill="#2c728e" d="M624.1,522.6 621.3,524.5 619.4,525.8 618.9,528.1 617.7,532.5 615,535.4 612.7,538.6 611.9,541 613.4,541.7 613.2,545.4 613.2,547.7 613.1,550.6 611.9,552.3 613.2,556.1 615,559 618.3,560.6 620.3,561.2 621.5,562.9 624.1,566 625.3,568.3 627.6,569.1 630.9,570.7 632.8,573.8 636.2,576.2 638.4,577 639.4,578.3 641.3,581.1 641.1,583.8 642.7,585.3 643.9,583.7 648,580.5 651.5,579.5 652.5,577.4 655.3,577.2 660.6,576.9 663.4,575.7 664.5,575.3 668.4,572.5 673,571.1 674.3,568.6 675.4,567.1 679.3,566.7 679.2,564.5 680.3,564.2 678.9,560.6 678.9,557.5 676.5,554.2 676,552.5 674.3,547.7 674.5,543.8 670.5,543 669.4,543.4 667.3,544.5 666.9,544.5 663.5,543 661.1,541.5 657.3,541.5 655,542.5 652.5,541.3 649.5,538.3 648.3,535.5 646,534.3 644.9,533.4 644,531 641.4,528.2 638.9,527.7 634.6,528.3 631.6,528.3 629.3,526.5 625.9,524Z"/><path fill="#5ec962" d="M641.4,528.2 644,531 644.9,533.4 646,534.3 648.3,535.5 649.5,538.3 652.5,541.3 655,542.5 657.3,541.5 661.1,541.5 663.5,543 666.9,544.5 667.3,544.5 669.4,543.4 670.5,543 674.5,543.8 676.8,540.4 679.3,540.1 680.2,539.1 683.1,538.1 687.7,537.6 690.5,534.7 691.9,532.5 694.6,530.5 697.9,527.9 699.9,527.7 701.3,528.1 703.2,529.8 703.9,532.4 707,533.7 710.2,534 713.1,535 717.4,537.5 719.6,539.7 721.6,540.3 723.8,541 724.2,543.1 726.6,545.8 729,547.2 731.4,547.6 731.6,547.7 733.1,546.1 732.5,544.1 731.8,538.7 732.5,535.3 732.3,531.6 734,530.3 735.8,527.2 735.5,524 736.2,522.4 735.6,520.4 735.1,519 736.7,513.7 737,510 733.6,509.4 728.7,509.2 725.6,507.4 724,504.9 721.8,503.7 721.1,503.5 719.9,501.9 716.3,499.3 713.1,497.6 709.4,497.4 704.9,496.4 703.8,499.5 702.8,500.4 700.2,500.9 697.4,502.4 696.2,502.8 695.6,505.5 691.9,505.8 689.6,507 686.3,507 685.2,505.2 683,504.6 678.9,505.4 674.8,505.3 672,505.9 670.3,506.2 668,505.4 664.3,504.6 662,503.3 658.6,501.8 657.8,501.5 655.9,502.5 653.3,502.9 649.6,501.6 644.3,500 641.6,500.1 638.5,501.3 637.6,501.5 635.1,500.1 632.2,498.6 629.8,497.8 626.5,497.3 628.1,498.6 627.7,501.7 627,505.6 626.2,507 624,510.8 624.2,514.8 624.3,519.4 623.8,522.3 624.1,522.6 625.9,524 629.3,526.5 631.6,528.3 634.6,528.3 638.9,527.7Z"/><path fill="#fde725" d="M637.8,442.1 636.7,446.3 634.8,449 634.1,451.9 634.9,453.3 634,454 631.6,458.4 630.7,462.9 630.8,466.6 630.4,469.9 630.5,471 630.1,473.8 628.1,477.3 627.5,478.8 629,481.5 629.1,484.5 627.7,488.4 627.1,493.8 625.5,494.8 626.3,496.6 626.5,497.3 629.8,497.8 632.2,498.6 635.1,500.1 637.6,501.5 638.5,501.3 641.6,500.1 644.3,500 649.6,501.6 653.3,502.9 655.9,502.5 657.8,501.5 658.6,501.8 662,503.3 664.3,504.6 668,505.4 670.3,506.2 672,505.9 674.8,505.3 673.4,503.1 673.9,498.6 672.8,495.7 673,492.7 672,490.6 671.9,485.2 671.2,482.9 671,480.6 670.9,479.8 670.7,475.9 673.5,474.6 675.3,471.5 675.5,469.6 675.9,467.3 677.6,463.5 679.6,461.5 680.4,458.5 680.8,456 679.7,454.4 677.8,454 676.2,450.7 673.7,448.4 671,446.9 670.3,446.5 668.6,445.6 666.8,443.1 664.4,442.5 659.8,440.8 657.7,441.3 654.5,441.6 651.8,441.3 646.7,442.3 643.8,441.7 641.3,441.2 640.8,442.3Z"/><path fill="#21918c" d="M440.5,552.1 436.9,550.7 432.7,549.9 431.3,549.2 428.3,547.5 425.7,548 422.1,549 420.8,549.3 419.4,551 417.4,551.6 415.7,554.7 415.2,556.1 414,558.9 413.6,560.9 414.6,564.5 413.3,566.1 411.5,568 411.5,571.3 410.4,575.2 409.9,577.4 410.7,580.3 411.7,581.4 411.7,584.3 412.8,586.3 411.7,590 411.5,591.1 412,593.3 412,597.4 413.9,601.8 413.6,606 413.3,607 412.6,610.5 410.6,613 411.1,615.9 410.6,616.9 410.8,618.8 411.3,623.2 409.6,627.2 409.4,631.2 408.7,632.4 408.5,636.2 412.7,635.2 416.4,635.6 420.6,634.3 422.4,633.5 424.3,632.6 428.6,631.1 430.7,631.1 432.7,629.7 433.6,630.6 436.1,629.5 440.6,630.2 442.9,632.1 445.9,633.4 449.3,633.3 451.7,633 456.1,633.9 458.8,629.8 459.7,627.8 460.6,626.1 463.2,624.4 465.9,624.1 466.8,622.3 467.6,618.3 470.2,615 472.8,611.5 472,607.6 472.2,607.1 471.8,604.2 471.6,601.6 473.2,598.7 472.8,596.6 472.9,594.6 472.2,589 470.4,585.4 471,581.9 473.4,580.6 475.3,580.1 475.4,577.5 473.9,574.5 471.4,572.8 470,572.4 468.8,570.6 465.5,567.7 462.2,566.1 459.4,565.7 455.3,563.8 452.4,560.8 451.3,559.4 449.6,559 448.2,556.9 447.4,553.9 444.4,552.6Z"/><path fill="#21918c" d="M556.4,559.5 555.5,558.9 553.4,556.9 551.7,552.9 550.4,551.5 546.3,552 542.7,552.4 541.8,552.5 539.8,553.9 538,553.7 533.5,555.3 531.8,555 529.5,556.2 526,556 521.7,556.4 517.3,556.8 516.3,556.5 512.9,557.6 509.7,558.7 507.3,560.9 506.8,564.3 505.6,565.8 502.7,567.7 500.6,569.2 499.9,569.1 498.1,571.1 494.6,573.4 495.8,576.6 497.1,578.8 498.2,579.4 499.8,580.9 500.4,585.6 503,589.2 503.8,590.2 506.3,592.7 506.9,596.7 508.3,599 508.8,600.4 509,602.4 512.1,603.3 514.8,604.4 518.9,605.7 520.6,605.6 524.2,604.1 527.5,603.9 531.8,605.2 535.2,605.8 536.2,605.5 538,605.5 539.2,605.5 543.7,605.2 545.4,604.4 546.6,604.7 546.1,602.5 544.8,602.3 545.7,598.4 545.8,594.6 547.2,590.8 549,588.2 548.5,585.7 549.1,581.3 548.5,579.1 549,577 551.1,576.6 553.4,574.7 554,570.2 553.7,566.5 554.3,562.4Z"/><path fill="#21918c" d="M475.4,577.5 475.3,580.1 473.4,580.6 471,581.9 470.4,585.4 472.2,589 472.9,594.6 472.8,596.6 473.2,598.7 471.6,601.6 471.8,604.2 472.2,607.1 472,607.6 472.8,611.5 470.2,615 467.6,618.3 466.8,622.3 465.9,624.1 463.2,624.4 460.6,626.1 459.7,627.8 458.8,629.8 456.1,633.9 456,636.2 457.5,639.1 456.9,641.4 460.3,641.2 462.7,642 465,644.2 468.6,645.7 470.8,645.9 473.5,646.5 477,648.6 478.8,651 481.4,651.8 483.9,651.9 485.1,653 488.2,655.1 491,656.3 494.4,654.7 497.6,653.9 500.7,653 502.8,653 503.7,652.1 506,650.5 508.2,648.8 509.2,644.7 507.5,641 506.6,637.2 504.6,636 503.7,632.4 502.3,628.9 502.1,627.4 501.5,626 501.8,624 501.6,619.5 502.9,617.6 503.3,614.9 504.5,611.6 506.5,609.6 507.9,606.3 508.2,603.7 509,602.4 508.8,600.4 508.3,599 506.9,596.7 506.3,592.7 503.8,590.2 503,589.2 500.4,585.6 499.8,580.9 498.2,579.4 497.1,578.8 495.8,576.6 494.6,573.4 492.5,573.3 490.7,573.1 488.9,573.5 486.6,574.5 481.8,576.1 478.3,577.5Z"/><path fill="#3b528b" d="M509.2,644.7 508.2,648.8 506,650.5 503.7,652.1 502.8,653 503.4,654.2 504.5,656.9 506.1,659.2 506.5,659.8 508.8,661.4 511.6,665.2 513.6,667.9 517.1,668.4 519.5,669.9 520.7,673.2 522.9,675.7 523.8,677.2 524.9,679.9 527.7,683.1 528.8,683.5 530.6,680.5 531.9,679.8 535.3,678.9 539.5,677 541.7,676.1 543,673 546,669.7 549.2,667.7 550.7,664.8 553.2,667.5 554.7,669.2 555.6,669.7 558.4,670.7 560,673.2 563.2,675.6 566.9,676.4 567.9,675.7 567.8,675 568.7,671.9 571,669.1 572.9,665.3 573.5,660.9 574.5,659.1 576.9,657.7 579.2,655.8 579.8,654.9 579.1,651.7 579.7,647.9 582,645.4 584.1,641.7 584.6,640.2 584,637.8 584.4,635 586.5,633.4 588.8,630.4 589.7,629 589.6,626.7 590.4,623.3 592.3,620.9 591.8,616.8 590.1,613.9 587.2,614.9 585.3,615.2 582.1,613.7 579.9,611.9 575.4,612 570.8,613.2 568.2,613.2 565.5,611.7 565.2,610.2 563.1,609.8 559.4,609.8 556.1,609.1 551.5,607.6 549.3,606 546.6,604.7 545.4,604.4 543.7,605.2 539.2,605.5 538,605.5 536.2,605.5 535.2,605.8 531.8,605.2 527.5,603.9 524.2,604.1 520.6,605.6 518.9,605.7 514.8,604.4 512.1,603.3 509,602.4 508.2,603.7 507.9,606.3 506.5,609.6 504.5,611.6 503.3,614.9 502.9,617.6 501.6,619.5 501.8,624 501.5,626 502.1,627.4 502.3,628.9 503.7,632.4 504.6,636 506.6,637.2 507.5,641Z"/><path fill="#2c728e" d="M804.2,484.4 802.2,485.4 798.5,487.4 795.1,487.7 793.7,487.9 792.3,489.6 788.8,490.2 785.7,493.3 785.1,495.4 783.9,497.1 780.1,499.3 776.9,499 776.2,500.3 773.4,499.1 771.5,498.6 767.3,497.2 763.9,494.6 761.2,492.5 758,491.8 757.4,491.4 756.5,493.9 754.5,496 751,498.2 748.7,501.4 748.3,502.3 746.6,503 743.4,504.4 741.2,504.6 739.9,506.9 737,510 736.7,513.7 735.1,519 735.6,520.4 736.2,522.4 735.5,524 735.8,527.2 734,530.3 732.3,531.6 732.5,535.3 731.8,538.7 732.5,544.1 733.1,546.1 731.6,547.7 735.7,546.8 737.9,546 740.2,543.9 745.6,542.8 748.7,540.6 749.8,540.7 753.1,539.5 756.2,540.7 758.2,539.8 759.9,540.7 761.1,539 764.2,538.7 768.1,536 769.2,535.2 771.2,532.7 776.1,532.6 779.6,531 781.6,531.7 784.7,530.3 787.9,530.4 791.5,528.3 793.6,527.2 794.1,525.2 798.1,524.7 801,523.7 802.2,524.3 805.2,524.2 808.4,525 813.4,524.3 815.1,523.3 816.3,521.1 818.8,518.6 821.7,516.6 823.6,514 823.6,511.5 823.7,508.2 823.5,507.9 824.3,506 825.9,505.1 827,501.9 827.4,499.7 828.2,495.7 830,493.5 830.1,490.1 830.8,488.6 827.2,488.5 824.3,487.1 820.7,484.8 819.9,483.5 818.3,483.9 817,485.2 813.6,485.3 810.5,484.3 806,484Z"/><path fill="#21918c" d="M757.4,491.4 756.3,489.4 757,485.7 755.9,484.2 756.2,483.9 754.6,480.2 754.4,477.4 752.5,474.6 751.9,472.6 750.2,469.7 748.4,466.9 746.9,465.4 744.5,464.9 743.6,463.5 740.7,460.7 738.2,460.6 735.6,461.6 733.6,463.5 729.8,464 725.4,464 723.3,465.2 721.5,465.4 717.4,468.2 714,469.7 713.4,472.2 711.7,474.1 707.5,474.5 707.4,477 706.5,479.1 707.7,483.1 707.2,485 706.3,487.4 706.1,492.5 704.9,496.4 709.4,497.4 713.1,497.6 716.3,499.3 719.9,501.9 721.1,503.5 721.8,503.7 724,504.9 725.6,507.4 728.7,509.2 733.6,509.4 737,510 739.9,506.9 741.2,504.6 743.4,504.4 746.6,503 748.3,502.3 748.7,501.4 751,498.2 754.5,496 756.5,493.9Z"/><path fill="#addc30" d="M750.2,469.7 751.9,472.6 752.5,474.6 754.4,477.4 754.6,480.2 756.2,483.9 755.9,484.2 757,485.7 756.3,489.4 757.4,491.4 758,491.8 761.2,492.5 763.9,494.6 767.3,497.2 771.5,498.6 773.4,499.1 776.2,500.3 776.9,499 780.1,499.3 783.9,497.1 785.1,495.4 785.7,493.3 788.8,490.2 792.3,489.6 793.7,487.9 795.1,487.7 798.5,487.4 802.2,485.4 804.2,484.4 801.2,481.9 799.9,479.9 799.1,476.9 797.4,473.8 797.5,471.7 796,469.3 794.1,466 792.8,463.7 789.5,462.3 787.6,459.7 785.8,456.4 783.5,454.9 783.4,454.1 781.6,454 778.7,456 776.4,456.7 774.7,459.8 772.7,460.8 769.9,463.1 766.7,463.4 763.9,464.2 761.6,464.3 758.7,464.6 754.8,466 751.7,467Z"/><path fill="#21918c" d="M699.9,527.7 697.9,527.9 694.6,530.5 691.9,532.5 690.5,534.7 687.7,537.6 683.1,538.1 680.2,539.1 679.3,540.1 676.8,540.4 674.5,543.8 674.3,547.7 676,552.5 676.5,554.2 678.9,557.5 678.9,560.6 680.3,564.2 679.2,564.5 679.3,566.7 682,565.8 682.6,566.1 683.3,565.2 686.5,564.9 689.8,562.8 692,562 694.5,559.4 697.5,559.2 701.5,557.7 705.3,558.4 707,557.7 709.7,557.8 714.5,556.7 716.5,555 716.9,553.4 720,551.2 723.2,550.1 724.4,548.8 726,548.4 728.5,548 731.4,547.6 729,547.2 726.6,545.8 724.2,543.1 723.8,541 721.6,540.3 719.6,539.7 717.4,537.5 713.1,535 710.2,534 707,533.7 703.9,532.4 703.2,529.8 701.3,528.1Z"/><path fill="#fde725" d="M704.9,496.4 706.1,492.5 706.3,487.4 707.2,485 707.7,483.1 706.5,479.1 707.4,477 707.5,474.5 706.3,474 703.6,471.8 701.4,469 699.3,467.7 695.5,467.3 692.5,465.3 690.4,462.4 687.3,461 685.2,460.6 683.8,458.8 680.8,456 680.4,458.5 679.6,461.5 677.6,463.5 675.9,467.3 675.5,469.6 675.3,471.5 673.5,474.6 670.7,475.9 670.9,479.8 671,480.6 671.2,482.9 671.9,485.2 672,490.6 673,492.7 672.8,495.7 673.9,498.6 673.4,503.1 674.8,505.3 678.9,505.4 683,504.6 685.2,505.2 686.3,507 689.6,507 691.9,505.8 695.6,505.5 696.2,502.8 697.4,502.4 700.2,500.9 702.8,500.4 703.8,499.5Z"/><path fill="#fde725" d="M680.8,456 683.8,458.8 685.2,460.6 687.3,461 690.4,462.4 692.5,465.3 695.5,467.3 699.3,467.7 701.4,469 703.6,471.8 706.3,474 707.5,474.5 711.7,474.1 713.4,472.2 714,469.7 717.4,468.2 721.5,465.4 723.3,465.2 725.4,464 729.8,464 733.6,463.5 735.6,461.6 738.2,460.6 736,457.9 733.4,455.7 732.1,452.6 729.3,449.1 728.7,446.8 727.6,445.1 726.6,442.1 726.8,438.9 724.9,437.6 724.2,436.4 722.1,433.1 719.6,430.4 716.4,431.1 712.9,430.7 711.9,428.7 708.8,427.2 706.1,426.9 703.5,426.6 701,426.7 699.9,430.1 697.3,432.4 694.1,433.9 692.7,436.1 691.8,436.3 689.2,437.3 685.9,439.9 684.3,441.8 683,445.5 679.8,449.1 676.2,450.7 677.8,454 679.7,454.4Z"/><path fill="#fde725" d="M740.7,460.7 743.6,463.5 744.5,464.9 746.9,465.4 748.4,466.9 750.2,469.7 751.7,467 754.8,466 758.7,464.6 761.6,464.3 763.9,464.2 766.7,463.4 769.9,463.1 772.7,460.8 774.7,459.8 776.4,456.7 778.7,456 781.6,454 783.4,454.1 783.2,452.6 782.4,450.6 782.2,447.5 781.7,445.3 780.9,444.8 780.2,440.9 778.6,436.8 777.9,435.2 776,432.4 775.7,429.1 771.9,426.5 770.3,425.4 768.2,425 766.1,423.4 765.3,420.7 763.9,423.1 761.4,424.8 757.9,427 756.1,429 756,432 756.1,433.2 754.7,434.2 752.3,437.3 750.8,439.9 750.3,443.7 749.3,448 747.3,449.7 745.7,451.5 745.4,452.7 745.2,453.4 743.5,457Z"/><path fill="#fde725" d="M719.6,430.4 722.1,433.1 724.2,436.4 724.9,437.6 726.8,438.9 726.6,442.1 727.6,445.1 728.7,446.8 729.3,449.1 732.1,452.6 733.4,455.7 736,457.9 738.2,460.6 740.7,460.7 743.5,457 745.2,453.4 745.4,452.7 745.7,451.5 747.3,449.7 749.3,448 750.3,443.7 750.8,439.9 752.3,437.3 754.7,434.2 756.1,433.2 756,432 756.1,429 757.9,427 754.5,425.9 751.2,425.3 748.3,424.6 747.1,423.1 743.9,421.3 742,420.1 739.2,419.6 736.5,419 735.1,417.3 731.6,415.2 729.8,418.5 726.7,422.3 724.8,424.9 724.3,428.1 722.6,430.3Z"/><path fill="#2c728e" d="M408.5,636.2 410.4,638.9 410.6,641.8 411.7,642.7 411.1,644.6 410.3,649.8 410.8,653.2 410.2,656.9 410.2,658.4 410.4,661.2 409.1,664.1 406.8,666 405.7,668.3 406.2,668.8 406.5,671.7 405.1,674 403.2,679.1 404.3,681.9 403.9,684.1 405.2,686.3 406.1,688.9 407.7,692.4 409.6,693.5 412.9,693.7 416.8,693.6 419.6,694.7 421,696.4 422.5,693.9 424.5,692.9 427.2,689.8 429.5,689.1 431,687.5 433.2,687.3 436.6,687 435.2,688.1 434,689 438.2,688.3 440.7,688.3 442.2,686.9 445.3,686.4 449.5,683.5 452.1,682.3 452.1,682.3 454,679.6 456.5,679.3 458.8,677.8 462.5,678.6 463.7,678.1 464.3,679.2 468.2,678.7 471.3,678.8 474,677.4 476.6,676.3 479.1,674.8 484.4,673.4 487.4,672.8 487.6,671.4 487.4,669.2 488,667.4 489.7,663.6 491.2,661.8 491.6,658.6 491,656.3 488.2,655.1 485.1,653 483.9,651.9 481.4,651.8 478.8,651 477,648.6 473.5,646.5 470.8,645.9 468.6,645.7 465,644.2 462.7,642 460.3,641.2 456.9,641.4 457.5,639.1 456,636.2 456.1,633.9 451.7,633 449.3,633.3 445.9,633.4 442.9,632.1 440.6,630.2 436.1,629.5 433.6,630.6 432.7,629.7 430.7,631.1 428.6,631.1 424.3,632.6 422.4,633.5 420.6,634.3 416.4,635.6 412.7,635.2Z"/><path fill="#21918c" d="M527.7,683.1 524.9,679.9 523.8,677.2 522.9,675.7 520.7,673.2 519.5,669.9 517.1,668.4 513.6,667.9 511.6,665.2 508.8,661.4 506.5,659.8 506.1,659.2 504.5,656.9 503.4,654.2 502.8,653 500.7,653 497.6,653.9 494.4,654.7 491,656.3 491.6,658.6 491.2,661.8 489.7,663.6 488,667.4 487.4,669.2 487.6,671.4 487.4,672.8 484.4,673.4 479.1,674.8 476.6,676.3 474,677.4 471.3,678.8 468.2,678.7 464.3,679.2 463.7,678.1 462.5,678.6 458.8,677.8 456.5,679.3 454,679.6 452.1,682.3 452.1,682.3 449.5,683.5 445.3,686.4 442.2,686.9 440.7,688.3 438.2,688.3 434,689 433.4,690.8 433.2,692.8 431.9,697.6 429.7,702.2 428.4,704.7 425.9,705.8 425,704.8 421.5,704.6 418.5,704.3 416.6,703.3 415.3,705.5 413.7,707 411.1,709.5 413,711.8 415.4,711.9 417.6,710.1 419,709.9 423.7,709 427.7,708.8 432.2,710.8 433.5,711.3 437.3,712.7 439.9,713.2 443.7,711.8 444.1,711.8 446.6,710.6 449.2,710.1 454.5,711 456.2,708 456.9,707.4 458.8,705.5 463.5,707.8 466.2,709.3 470,709.4 470.5,708.4 472.1,708.6 475,706.6 477.2,706.2 479.6,703.9 481,703.3 482.3,701.8 485,699.9 487.3,697.6 488.1,697.4 490.6,696.7 494.3,697.8 498.7,697.8 502.5,697.9 504.2,698.8 506.4,697.7 508.6,696.5 512.3,696.2 513.8,693.6 514,693.1 515.6,692.5 518.8,691.3 521.3,690.9 522.4,687.9 524.4,685.9Z"/><path fill="#21918c" d="M550.7,664.8 549.2,667.7 546,669.7 543,673 541.7,676.1 539.5,677 535.3,678.9 531.9,679.8 530.6,680.5 528.8,683.5 531.4,684.5 532.9,686.1 536,690.4 537.3,694 538.8,694.9 540.3,696.7 541.8,696.4 542.5,694.4 545.6,694.3 548.4,693.3 551.9,693.8 553.9,693.5 555.3,692.6 558.2,689.5 560.4,687 561.2,683.6 562,679.7 564.4,678.2 566.9,676.4 563.2,675.6 560,673.2 558.4,670.7 555.6,669.7 554.7,669.2 553.2,667.5Z"/><path fill="#28ae80" d="M540.3,696.7 538.8,694.9 537.3,694 536,690.4 532.9,686.1 531.4,684.5 528.8,683.5 527.7,683.1 524.4,685.9 522.4,687.9 521.3,690.9 518.8,691.3 515.6,692.5 514,693.1 513.8,693.6 512.3,696.2 508.6,696.5 506.4,697.7 504.2,698.8 502.5,697.9 498.7,697.8 494.3,697.8 490.6,696.7 488.1,697.4 487.3,697.6 485,699.9 482.3,701.8 481,703.3 479.6,703.9 477.2,706.2 475,706.6 472.1,708.6 470.5,708.4 470,709.4 466.2,709.3 463.5,707.8 458.8,705.5 456.9,707.4 456.2,708 454.5,711 449.2,710.1 446.6,710.6 444.1,711.8 443.7,711.8 439.9,713.2 437.3,712.7 433.5,711.3 432.2,710.8 427.7,708.8 423.7,709 419,709.9 417.6,710.1 415.4,711.9 413,711.8 411.1,709.5 409.2,711.1 408.1,713 407,713.4 407.4,717.6 407.2,718.4 407.6,719.8 406.3,721.3 406.8,724.4 403.7,726.1 402.2,728.9 400.7,730.5 398,733.6 395.6,734.5 393.5,734.3 392.6,732.5 388.4,731.7 385.1,732.2 383.9,733 384.7,737.3 385.8,740 385.5,744 388.1,744 388.4,744.7 390.3,746.7 391,748.5 393.2,749 396.4,748.9 399.9,748.8 404.6,750.5 406.4,752.6 409.3,753 411.8,752.3 414.3,752.7 417.7,754.8 418.8,757.2 421.4,758 422.9,757.8 428.1,757.7 431.6,755.8 435,755.4 436.8,753.2 439.7,753.1 443.3,752.5 444.8,751.8 445.7,752.8 447.2,753 448.4,752.7 452.5,753.3 455.9,752.5 457,752 461,749.9 465,748.6 469,746.2 471.3,744.8 473.2,743.8 476.7,743.1 480,743.2 480.8,742.5 481.4,742.3 484.8,740.6 488.2,739.3 488.9,736.4 489.9,735.5 493.8,733.3 497.7,733.5 499,732.7 500.6,732.6 505.1,731.7 507.7,728.3 508.8,726 509.5,722.2 511.6,720.4 514.5,719.3 516.2,717.8 517.4,717.9 519.7,716.1 523.2,713.4 525.4,711.2 526.1,707.1 527.9,704.6 531,703.1 533,700.8 533.5,700.3 535.1,698.6 537.4,698.2Z"/>
<path fill="#fde725" d="M167.5,191.2 175,197.5 181.2,202.5 187.5,206.2 193.8,216.2 192.5,223.8 193.8,236.2 192.5,248.8 191.2,261.2 185,276 182.5,278.8 177.5,297.5 181.2,307.5 180,320 175,322.5 172.5,322.5 167.5,312.5 161.2,276 158.8,265 152.5,250 145,240 137.5,238.8 126.2,233.8 121.2,220 120,213.8 145,217.5 150,215 153.8,206.2 160,202.5 161.2,196.2Z"/>
<path fill="#fde725" d="M172,326 175,328 174,331 171,330Z"/><path fill="#fde725" d="M173,333 177,335 178,340 176,345 173,343 172,338Z"/><path fill="#fde725" d="M174,327 177,328 176,331 173,330Z"/><path fill="#fde725" d="M169,347 172,347 172,350 169,350Z"/><path fill="#fde725" d="M165,350 167,350 167,352 165,352Z"/><path fill="#fde725" d="M176,348 179,348 179,351 176,351Z"/><path fill="#fde725" d="M181,321 184,322 183,325 180,324Z"/><path fill="#fde725" d="M418,336 424,333 428,335 426,339 421,342 419,340Z"/><path fill="#fde725" d="M351,384 356,380 364,380 367,384 362,388 353,388Z"/><path fill="#fde725" d="M272,416 276,408 280,412 279,424 276,430 273,426Z"/><path fill="#fde725" d="M284,410 287,414 285,418Z"/><path fill="#fde725" d="M6,532 14,531 22,529 24,534 18,538 16,541 12,536Z"/><path fill="#fde725" d="M26,528 30,526 32,530 28,531Z"/><path fill="#21918c" d="M264,194 268,191 272,194 270,198 265,198Z"/><path fill="#21918c" d="M266,207 270,204 270,209 267,211Z"/><path fill="#21918c" d="M264,230 269,228 272,233 267,236 265,240Z"/><path fill="#21918c" d="M270,238 275,236 276,241 271,244Z"/><path fill="#21918c" d="M316,272 320,269 322,276 318,280Z"/><path fill="#21918c" d="M324,270 328,272 329,280 325,284 323,278Z"/><path fill="#21918c" d="M319,284 323,286 322,292 319,290Z"/><path fill="#21918c" d="M330,278 335,276 336,284 332,288Z"/><path fill="#21918c" d="M322,294 326,296 325,301 321,299Z"/><path fill="#21918c" d="M342,278 348,279 351,282 344,283Z"/><path fill="#21918c" d="M332,316 336,314 339,319 336,323 333,321Z"/><path fill="#2c728e" d="M274,404 277,403 277,408 274,409Z"/><path fill="#2c728e" d="M283,408 286,407 287,412 284,413Z"/><path fill="#2c728e" d="M285,418 289,420 288,425 285,423Z"/><path fill="#2c728e" d="M286,428 290,430 288,435 285,433Z"/><path fill="#2c728e" d="M271,430 275,432 273,436Z"/>
</g>
<path d="M907,349 L936,376" stroke="#aad3df" stroke-width="3" fill="none"/>
<path d="M904,352 L934,378" stroke="#222" stroke-width="0.8" fill="none"/>
</svg>
<div id="hdr">
<svg width="170" height="48" style="position:absolute;left:0;top:0" viewBox="0 0 170 48">
<g fill="none" stroke="#fff" stroke-width="1.8" stroke-linejoin="miter" stroke-linecap="butt">
<path d="M21.8,27.6 L29.4,19.5 L57.4,19.5 L49.8,27.6 Z"/>
<path d="M48.2,9.7 L31.1,27.6 M47.9,19.5 L31.1,37.2 M48.2,9.7 L47.9,19.5 M31.1,27.6 L31.1,37.2"/>
</g>
<text x="41" y="40.8" fill="#f0f0f0" font-size="8.6" font-weight="bold" font-family="Liberation Sans">DLR</text>
<g fill="none" stroke="#fff" stroke-width="1.8">
<path d="M77.3,26.3 L85.8,16.8 A10.3,10.3 0 1 0 85.5,32.6"/>
<circle cx="96.8" cy="24.7" r="9.9"/>
<path d="M126.3,17.6 A10.3,10.3 0 1 0 126.3,31.8"/>
</g>
<circle cx="149.3" cy="25" r="10.5" fill="#fff"/>
<g stroke="#313131" stroke-width="1.5">
<path d="M138.5,22.3 L158.5,17.5 M138.5,22.3 L160.5,27.3 M138.5,29.6 L160.5,29.6"/>
</g>
</svg>
<div class="nav" style="left:190px;font-size:20px;line-height:49px;color:#f4f4f4;letter-spacing:0.75px">Coastal Explorer</div>
<div class="sep" style="left:369px"></div>
<div class="nav" style="left:388px">Bookmarks</div>
<div style="position:absolute;left:471px;top:0;width:64px;height:48.6px;background:#4d4d4d"></div>
<div class="nav" style="left:491px;color:#fff;font-weight:bold">Map</div>
<div class="nav" style="left:554px">Legal Notice</div>
<div class="nav" style="left:663px">Privacy</div>
<div class="sep" style="left:724px"></div>
</div>
<div style="position:absolute;left:6px;top:55px;width:23px;height:42px;border-radius:4px;background:rgba(255,255,255,0.4)"></div>
<div style="position:absolute;left:8px;top:58px;width:19px;height:18px;border-radius:3px 3px 0 0;background:#4a4a4a;color:#fff;font-size:15px;font-weight:bold;text-align:center;line-height:17px">+</div>
<div style="position:absolute;left:8px;top:77px;width:19px;height:18px;border-radius:0 0 3px 3px;background:#4a4a4a;color:#fff;font-size:15px;font-weight:bold;text-align:center;line-height:16px">&#8211;</div>
<div style="position:absolute;left:7px;top:739px;width:58px;height:24px;border-radius:4px;background:rgba(0,0,0,0.3)"></div>
<div style="position:absolute;left:9px;top:741px;width:55px;height:20px;border:1px solid #eee;border-top:none;color:#eee;font-size:10px;text-align:center;line-height:24px">20 km</div>
<div style="position:absolute;left:1196px;top:741px;width:182px;height:24px;border-radius:4px;background:rgba(255,255,255,0.8)"></div>
<div style="position:absolute;left:1203px;top:746px;font-size:10.8px;line-height:15px;color:#222;white-space:nowrap">&#169;, <span style="color:#3478a6">OpenStreetMap</span> contributors</div>
<div style="position:absolute;left:1358px;top:744px;width:18px;height:18px;border-radius:2px;background:#6f6f6f;color:#fff;font-size:13px;font-weight:bold;text-align:center;line-height:17px">&#187;</div>
<div id="panel">
<svg width="237" height="329" style="position:absolute;left:0;top:0" viewBox="0 0 237 329">
<g fill="none" stroke="#8c8c8c" stroke-width="1.15">
<path d="M10,8 L17,15.5 L10,23 M17,8 L24,15.5 L17,23"/>
</g>
<g fill="none" stroke="#555" stroke-width="1.2">
<circle cx="17.7" cy="55.3" r="8.3"/>
<path d="M17.7,50 V60.6 M12.4,55.3 H23"/>
<path d="M18,79 L26.5,83 L18,87 L9.5,83 Z M9.5,86.5 L18,90.5 L26.5,86.5 M9.5,90 L18,94 L26.5,90"/>
<path d="M218,84 L222.5,88 L227,84" stroke-width="1.4"/>
<path d="M16.5,107 L20.5,111 L16.5,115" stroke-width="1.3"/>
<path d="M15.5,129 L19.5,133 L23.5,129" stroke-width="1.3"/>
<path d="M15.5,314 L19.5,318 L15.5,322" stroke-width="1.3"/>
</g>
<g fill="none" stroke="#444" stroke-width="1.1">
<path d="M192.5,107 V115.5 M189,110.5 L192.5,107 L196,110.5" stroke="#ccc"/>
<path d="M206.5,107 V115.5 M203,112 L206.5,115.5 L210,112"/>
<path d="M216.5,111 Q222.5,104.5 228.5,111 Q222.5,117.5 216.5,111 Z M217,106 L228,116.5"/><circle cx="222.5" cy="111" r="1.6"/>
<path d="M192.5,128 V136 M189,131.5 L192.5,128 L196,131.5"/>
<path d="M206.5,128 V136 M203,132.5 L206.5,136 L210,132.5"/>
<path d="M216.5,132 Q222.5,125.5 228.5,132 Q222.5,138.5 216.5,132 Z"/>
<circle cx="222.5" cy="132" r="2.2" fill="#444"/>
<path d="M192.5,314 V322 M189,317.5 L192.5,314 L196,317.5"/>
<path d="M206.5,314 V322 M203,318.5 L206.5,322 L210,318.5" stroke="#ccc"/>
<path d="M216.5,318 Q222.5,311.5 228.5,318 Q222.5,324.5 216.5,318 Z"/>
<circle cx="222.5" cy="318" r="2.2" fill="#444"/>
</g>
<path d="M18.5,142 V300" stroke="#999" stroke-width="1"/>
<g fill="none" stroke="#666" stroke-width="1">
<g transform="translate(28.7,151.5) scale(0.74) translate(-28.7,-151.5)" stroke-width="1.35"><circle cx="28.7" cy="151.5" r="2.2"/>
<path d="M27.5,145.6 h2.4 l0.5,1.6 l1.5,0.7 l1.5,-0.8 l1.7,1.7 l-0.8,1.5 l0.6,1.5 l1.6,0.5 v2.4 l-1.6,0.5 l-0.6,1.5 l0.8,1.5 l-1.7,1.7 l-1.5,-0.8 l-1.5,0.6 l-0.5,1.6 h-2.4 l-0.5,-1.6 l-1.5,-0.6 l-1.5,0.8 l-1.7,-1.7 l0.8,-1.5 l-0.6,-1.5 l-1.6,-0.5 v-2.4 l1.6,-0.5 l0.6,-1.5 l-0.8,-1.5 l1.7,-1.7 l1.5,0.8 l1.5,-0.7 Z"/></g>
<circle cx="206" cy="151" r="4"/>
<path d="M209,154 L212,157 M206,149 V153 M204,151 H208"/>
<path d="M218,148 H228 V157 H218 Z M221,150 V155 M225,150 V155 M221,146 H225"/>
</g>
<rect x="37.5" y="146.5" width="12" height="10" fill="none" stroke="#5aa0d0" stroke-width="1.4"/>
<path d="M39,154 L42,150 L45,152 L48,148" fill="none" stroke="#5aa0d0" stroke-width="1"/>
<rect x="19" y="162" width="213" height="139" fill="none" stroke="#c8c8c8" stroke-width="1"/>
</svg>
<div class="hl" style="top:30px"></div>
<div class="hl" style="top:70px"></div>
<div class="pt" style="left:33px;top:49px;font-size:12.2px;font-weight:bold;line-height:14px">Add Datasets</div>
<div class="pt" style="left:35px;top:80px;font-size:12.2px;font-weight:bold;line-height:14px">Layers</div>
<div class="pt" style="left:31px;top:104px;font-size:12.25px;line-height:14px;color:#666">Aquaculture Ponds in the ...</div>
<div class="pt" style="left:31px;top:124px;font-size:12.25px;line-height:14px;color:#666">Aquaculture Production E...</div>
<div class="pt" style="left:31px;top:310px;font-size:12.3px;line-height:14px;color:#666">OpenStreetMap</div>
<div class="sw" style="top:171px;background:#fde725"></div><div class="lt" style="top:173px">0 - 1000 t</div>
<div class="sw" style="top:185px;background:#addc30"></div><div class="lt" style="top:187px">1000 - 5293 t</div>
<div class="sw" style="top:199px;background:#5ec962"></div><div class="lt" style="top:201px">5293 - 10558 t</div>
<div class="sw" style="top:213px;background:#28ae80"></div><div class="lt" style="top:215px">10558 - 30389 t</div>
<div class="sw" style="top:227px;background:#21918c"></div><div class="lt" style="top:229px">30389 - 50185 t</div>
<div class="sw" style="top:241px;background:#2c728e"></div><div class="lt" style="top:243px">50185 - 100471 t</div>
<div class="sw" style="top:255px;background:#3b528b"></div><div class="lt" style="top:257px">100471 - 159883 t</div>
<div class="sw" style="top:269px;background:#472d7b"></div><div class="lt" style="top:271px">159883 - 263484 t</div>
<div class="sw" style="top:283px;background:#440154"></div><div class="lt" style="top:285px">263484 - 299969 t</div>
</div>
</body></html>
